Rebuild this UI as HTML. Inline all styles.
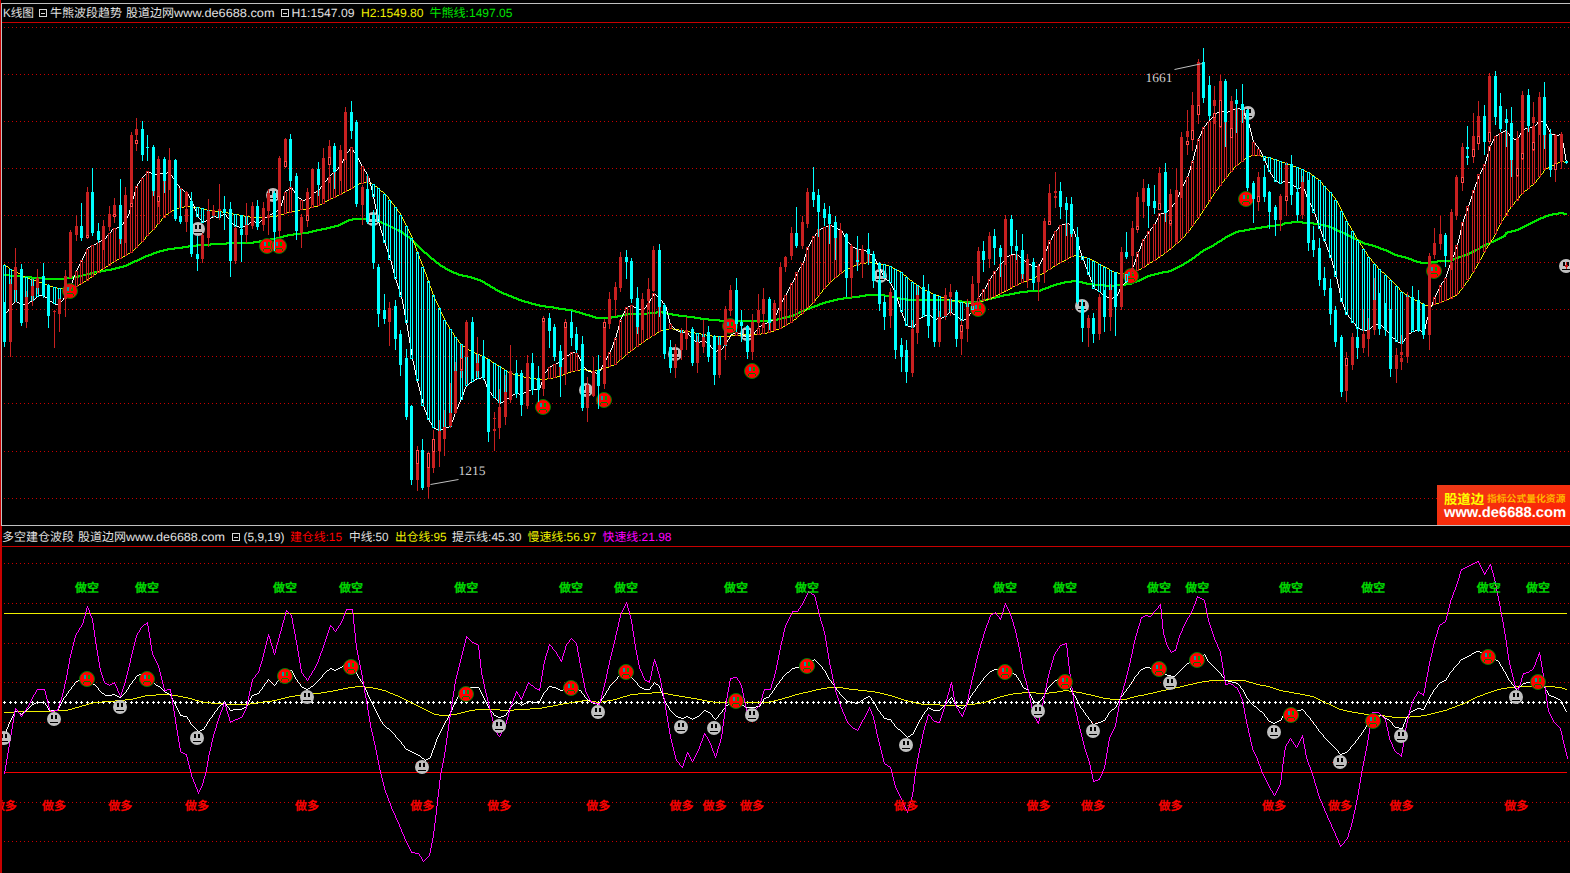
<!DOCTYPE html>
<html lang="zh"><head><meta charset="utf-8"><title>K线图 牛熊波段趋势</title>
<style>html,body{margin:0;padding:0;background:#000;overflow:hidden}body{width:1570px;height:873px;position:relative}
svg text{shape-rendering:auto;text-rendering:geometricPrecision}</style></head><body>
<svg width="1570" height="873" viewBox="0 0 1570 873" style="position:absolute;left:0;top:0" shape-rendering="crispEdges">
<defs><linearGradient id="bg" x1="0" y1="0" x2="1" y2="1"><stop offset="0" stop-color="#ee3a18"/><stop offset="1" stop-color="#ff2000"/></linearGradient></defs>
<rect width="1570" height="873" fill="#000"/>
<rect x="0" y="0" width="1" height="873" fill="#c80000"/>
<rect x="1" y="526" width="1" height="347" fill="#c80000"/>
<rect x="1" y="3" width="1569" height="1" fill="#c0c0c0"/>
<rect x="1" y="3" width="1" height="523" fill="#c0c0c0"/>
<rect x="1" y="525" width="1569" height="1" fill="#c0c0c0"/>
<rect x="2" y="22" width="1568" height="1" fill="#c80000"/>
<rect x="2" y="546" width="1568" height="1" fill="#c80000"/>
<line x1="4" y1="27.5" x2="1570" y2="27.5" stroke="#c80000" stroke-width="1" stroke-dasharray="1 3"/>
<line x1="4" y1="74.5" x2="1570" y2="74.5" stroke="#c80000" stroke-width="1" stroke-dasharray="1 3"/>
<line x1="4" y1="121.5" x2="1570" y2="121.5" stroke="#c80000" stroke-width="1" stroke-dasharray="1 3"/>
<line x1="4" y1="168.5" x2="1570" y2="168.5" stroke="#c80000" stroke-width="1" stroke-dasharray="1 3"/>
<line x1="4" y1="215.5" x2="1570" y2="215.5" stroke="#c80000" stroke-width="1" stroke-dasharray="1 3"/>
<line x1="4" y1="262.5" x2="1570" y2="262.5" stroke="#c80000" stroke-width="1" stroke-dasharray="1 3"/>
<line x1="4" y1="309.5" x2="1570" y2="309.5" stroke="#c80000" stroke-width="1" stroke-dasharray="1 3"/>
<line x1="4" y1="356.5" x2="1570" y2="356.5" stroke="#c80000" stroke-width="1" stroke-dasharray="1 3"/>
<line x1="4" y1="403.5" x2="1570" y2="403.5" stroke="#c80000" stroke-width="1" stroke-dasharray="1 3"/>
<line x1="4" y1="451.5" x2="1570" y2="451.5" stroke="#c80000" stroke-width="1" stroke-dasharray="1 3"/>
<line x1="4" y1="498.5" x2="1570" y2="498.5" stroke="#c80000" stroke-width="1" stroke-dasharray="1 3"/>
<line x1="4" y1="563.5" x2="1570" y2="563.5" stroke="#c80000" stroke-width="1" stroke-dasharray="1 3"/>
<line x1="4" y1="603.5" x2="1570" y2="603.5" stroke="#c80000" stroke-width="1" stroke-dasharray="1 3"/>
<line x1="4" y1="643.5" x2="1570" y2="643.5" stroke="#c80000" stroke-width="1" stroke-dasharray="1 3"/>
<line x1="4" y1="682.5" x2="1570" y2="682.5" stroke="#c80000" stroke-width="1" stroke-dasharray="1 3"/>
<line x1="4" y1="722.5" x2="1570" y2="722.5" stroke="#c80000" stroke-width="1" stroke-dasharray="1 3"/>
<line x1="4" y1="762.5" x2="1570" y2="762.5" stroke="#c80000" stroke-width="1" stroke-dasharray="1 3"/>
<line x1="4" y1="802.5" x2="1570" y2="802.5" stroke="#c80000" stroke-width="1" stroke-dasharray="1 3"/>
<line x1="4" y1="841.5" x2="1570" y2="841.5" stroke="#c80000" stroke-width="1" stroke-dasharray="1 3"/>
<clipPath id="cl"><rect x="2" y="0" width="1568" height="873"/></clipPath><g clip-path="url(#cl)">
<path d="M3.5,274v2m1,-2v2m1,-2v2m1,-2v2m1,-2v2m1,-2v2m1,-2v3m1,-2v2m1,-2v2m1,-2v2m1,-2v2m1,-2v2m1,-2v2m1,-2v2m1,-2v2m1,-2v2m1,-2v2m1,-2v3m1,-2v2m1,-2v2m1,-2v2m1,-2v2m1,-2v2m1,-2v2m1,-2v2m1,-2v2m1,-2v2m1,-2v2m1,-2v3m1,-2v2m1,-2v2m1,-2v2m1,-2v2m1,-2v2m1,-2v2m1,-2v2m1,-2v2m1,-2v2m1,-2v2m1,-2v3m1,-2v2m1,-2v2m1,-2v2m1,-2v2m1,-2v2m1,-2v2m1,-2v2m1,-2v2m1,-2v2m1,-2v2m1,-2v2m1,-2v2m1,-2v2m1,-2v2m1,-2v2m1,-2v2m1,-2v2m1,-2v2m1,-2v2m1,-2v2m1,-2v2m1,-3v3m1,-3v2m1,-2v2m1,-2v2m1,-2v2m1,-2v2m1,-2v2m1,-2v2m1,-3v3m1,-3v2m1,-2v2m1,-2v2m1,-2v2m1,-2v2m1,-3v3m1,-3v2m1,-2v2m1,-2v2m1,-3v3m1,-3v2m1,-2v2m1,-2v2m1,-3v3m1,-3v2m1,-2v2m1,-2v2m1,-3v3m1,-3v2m1,-2v2m1,-2v2m1,-3v3m1,-3v2m1,-2v2m1,-2v2m1,-2v2m1,-2v2m1,-3v3m1,-3v2m1,-2v2m1,-2v2m1,-2v2m1,-3v3m1,-3v2m1,-2v2m1,-2v2m1,-2v2m1,-2v2m1,-3v3m1,-3v2m1,-2v2m1,-2v2m1,-3v3m1,-3v2m1,-2v2m1,-2v2m1,-3v3m1,-3v2m1,-2v2m1,-2v2m1,-3v3m1,-3v2m1,-2v2m1,-3v3m1,-3v2m1,-3v3m1,-3v2m1,-3v3m1,-3v2m1,-3v3m1,-3v2m1,-3v3m1,-3v2m1,-2v2m1,-3v3m1,-3v2m1,-3v3m1,-3v2m1,-3v3m1,-3v2m1,-3v3m1,-3v2m1,-3v3m1,-3v2m1,-2v2m1,-3v3m1,-3v2m1,-2v2m1,-3v3m1,-3v2m1,-3v3m1,-3v2m1,-2v2m1,-3v3m1,-3v2m1,-2v2m1,-3v3m1,-3v2m1,-2v2m1,-2v2m1,-3v3m1,-3v2m1,-2v2m1,-2v2m1,-3v3m1,-3v2m1,-2v2m1,-2v2m1,-2v2m1,-2v2m1,-2v2m1,-3v3m1,-3v2m1,-2v2m1,-2v2m1,-2v2m1,-2v2m1,-2v2m1,-2v2m1,-3v3m1,-3v2m1,-2v2m1,-2v2m1,-2v2m1,-2v2m1,-3v3m1,-3v2m1,-2v2m1,-2v2m1,-2v2m1,-2v2m1,-2v2m1,-2v2m1,-3v3m1,-3v2m1,-2v2m1,-2v2m1,-2v2m1,-2v2m1,-2v2m1,-2v2m1,-2v2m1,-2v2m1,-2v2m1,-2v2m1,-2v2m1,-2v2m1,-3v3m1,-3v2m1,-2v2m1,-2v2m1,-2v2m1,-2v2m1,-2v2m1,-2v2m1,-2v2m1,-2v2m1,-2v2m1,-2v2m1,-2v2m1,-2v2m1,-2v2m1,-2v2m1,-3v3m1,-3v2m1,-2v2m1,-2v2m1,-2v2m1,-2v2m1,-2v2m1,-2v2m1,-2v2m1,-2v2m1,-2v2m1,-2v2m1,-2v2m1,-2v2m1,-2v2m1,-2v2m1,-2v2m1,-2v2m1,-2v2m1,-2v2m1,-2v2m1,-2v2m1,-2v2m1,-2v2m1,-2v2m1,-2v2m1,-2v2m1,-3v3m1,-3v2m1,-2v2m1,-2v2m1,-2v2m1,-2v2m1,-3v3m1,-3v2m1,-2v2m1,-2v2m1,-2v2m1,-2v2m1,-3v3m1,-3v2m1,-2v2m1,-2v2m1,-2v2m1,-3v3m1,-3v2m1,-2v2m1,-2v2m1,-2v2m1,-2v2m1,-3v3m1,-3v2m1,-2v2m1,-2v2m1,-3v3m1,-3v2m1,-2v2m1,-3v3m1,-3v2m1,-2v2m1,-2v2m1,-3v3m1,-3v2m1,-2v2m1,-2v2m1,-2v2m1,-2v2m1,-3v3m1,-3v2m1,-2v2m1,-2v2m1,-2v2m1,-2v2m1,-2v2m1,-2v2m1,-3v3m1,-3v2m1,-2v2m1,-2v2m1,-2v2m1,-2v2m1,-2v2m1,-3v3m1,-3v2m1,-2v2m1,-2v2m1,-3v3m1,-3v2m1,-2v2m1,-2v2m1,-3v3m1,-3v2m1,-2v2m1,-2v2m1,-2v2m1,-3v3m1,-3v2m1,-2v2m1,-2v2m1,-2v2m1,-3v3m1,-3v2m1,-2v2m1,-2v2m1,-3v3m1,-3v2m1,-2v2m1,-2v2m1,-3v3m1,-3v2m1,-2v2m1,-2v2m1,-3v3m1,-3v2m1,-3v3m1,-3v2m1,-3v3m1,-3v2m1,-3v3m1,-3v2m1,-3v3m1,-3v2m1,-3v3m1,-3v2m1,-2v2m1,-2v2m1,-3v3m1,-3v2m1,-2v2m1,-2v2m1,-2v2m1,-2v2m1,-2v2m1,-2v2m1,-2v2m1,-2v2m1,-2v2m1,-2v2m1,-2v2m1,-2v2m1,-2v2m1,-2v2m1,-2v2m1,-2v3m1,-2v2m1,-2v2m1,-2v2m1,-2v3m1,-2v2m1,-2v2m1,-2v2m1,-2v3m1,-2v2m1,-2v2m1,-2v2m1,-2v3m1,-2v2m1,-2v3m1,-2v2m1,-2v2m1,-2v3m1,-2v2m1,-2v3m1,-2v2m1,-2v3m1,-2v2m1,-2v3m1,-2v2m1,-2v3m1,-2v2m1,-2v3m1,-2v2m1,-2v3m1,-2v2m1,-2v3m1,-2v2m1,-2v3m1,-2v3m1,-2v3m1,-2v2m1,-2v3m1,-2v3m1,-2v2m1,-2v3m1,-2v3m1,-2v3m1,-2v3m1,-2v3m1,-2v3m1,-2v3m1,-2v3m1,-2v3m1,-2v3m1,-2v3m1,-2v3m1,-2v3m1,-2v3m1,-2v3m1,-2v3m1,-2v2m1,-2v3m1,-2v3m1,-2v3m1,-2v3m1,-2v3m1,-2v3m1,-2v2m1,-2v3m1,-2v3m1,-2v3m1,-2v3m1,-2v2m1,-2v3m1,-2v3m1,-2v3m1,-2v2m1,-2v3m1,-2v2m1,-2v3m1,-2v3m1,-2v2m1,-2v3m1,-2v2m1,-2v3m1,-2v2m1,-2v3m1,-2v2m1,-2v3m1,-2v2m1,-2v2m1,-2v3m1,-2v2m1,-2v3m1,-2v2m1,-2v2m1,-2v2m1,-2v3m1,-2v2m1,-2v2m1,-2v2m1,-2v2m1,-2v3m1,-2v2m1,-2v2m1,-2v2m1,-2v3m1,-2v2m1,-2v2m1,-2v3m1,-2v2m1,-2v2m1,-2v3m1,-2v2m1,-2v2m1,-2v3m1,-2v2m1,-2v3m1,-2v2m1,-2v3m1,-2v3m1,-2v2m1,-2v3m1,-2v2m1,-2v3m1,-2v3m1,-2v2m1,-2v3m1,-2v2m1,-2v3m1,-2v3m1,-2v2m1,-2v3m1,-2v2m1,-2v3m1,-2v2m1,-2v3m1,-2v2m1,-2v3m1,-2v2m1,-2v2m1,-2v3m1,-2v2m1,-2v3m1,-2v2m1,-2v2m1,-2v3m1,-2v2m1,-2v3m1,-2v2m1,-2v2m1,-2v3m1,-2v2m1,-2v3m1,-2v2m1,-2v2m1,-2v3m1,-2v2m1,-2v2m1,-2v3m1,-2v2m1,-2v2m1,-2v2m1,-2v3m1,-2v2m1,-2v2m1,-2v3m1,-2v2m1,-2v2m1,-2v2m1,-2v3m1,-2v2m1,-2v2m1,-2v2m1,-2v3m1,-2v2m1,-2v2m1,-2v2m1,-2v2m1,-2v2m1,-2v3m1,-2v2m1,-2v2m1,-2v2m1,-2v2m1,-2v2m1,-2v2m1,-2v2m1,-2v3m1,-2v2m1,-2v2m1,-2v2m1,-2v2m1,-2v3m1,-2v2m1,-2v2m1,-2v2m1,-2v2m1,-2v2m1,-2v2m1,-2v3m1,-2v2m1,-2v2m1,-2v2m1,-2v2m1,-2v2m1,-2v2m1,-2v3m1,-2v2m1,-2v2m1,-2v3m1,-2v2m1,-2v2m1,-2v2m1,-2v3m1,-2v2m1,-2v2m1,-2v3m1,-2v2m1,-2v2m1,-2v3m1,-2v2m1,-2v2m1,-2v2m1,-2v3m1,-2v2m1,-2v2m1,-2v3m1,-2v2m1,-2v2m1,-2v3m1,-2v2m1,-2v2m1,-2v2m1,-2v2m1,-2v2m1,-2v2m1,-2v2m1,-2v2m1,-2v2m1,-2v2m1,-2v2m1,-2v2m1,-2v2m1,-2v2m1,-2v2m1,-3v3m1,-3v2m1,-2v2m1,-2v2m1,-2v2m1,-2v2m1,-3v3m1,-3v2m1,-2v2m1,-2v2m1,-2v2m1,-3v3m1,-3v2m1,-2v2m1,-2v2m1,-3v3m1,-3v2m1,-2v2m1,-2v2m1,-2v2m1,-2v2m1,-2v2m1,-2v2m1,-2v2m1,-2v2m1,-2v2m1,-2v2m1,-2v2m1,-2v2m1,-2v2m1,-2v2m1,-2v2m1,-2v2m1,-2v2m1,-2v2m1,-2v2m1,-3v3m1,-3v2m1,-2v2m1,-2v2m1,-2v2m1,-2v2m1,-2v2m1,-2v2m1,-2v2m1,-3v3m1,-3v2m1,-2v2m1,-2v2m1,-2v2m1,-2v2m1,-2v3m1,-2v2m1,-2v2m1,-2v2m1,-2v2m1,-2v3m1,-2v2m1,-2v2m1,-2v2m1,-2v2m1,-2v3m1,-2v2m1,-2v2m1,-2v2m1,-2v2m1,-2v2m1,-2v3m1,-2v2m1,-2v2m1,-2v2m1,-2v2m1,-2v2m1,-2v2m1,-2v2m1,-2v3m1,-2v2m1,-2v2m1,-2v2m1,-2v2m1,-2v2m1,-2v2m1,-2v2m1,-2v3m1,-2v2m1,-2v2m1,-2v2m1,-2v2m1,-2v2m1,-2v3m1,-2v2m1,-2v2m1,-2v2m1,-2v2m1,-2v2m1,-2v2m1,-2v2m1,-2v3m1,-2v2m1,-2v2m1,-2v2m1,-2v2m1,-2v2m1,-2v2m1,-2v2m1,-2v2m1,-2v2m1,-2v2m1,-2v3m1,-2v2m1,-2v2m1,-2v2m1,-2v2m1,-2v2m1,-2v2m1,-2v2m1,-2v2m1,-2v2m1,-2v2m1,-2v2m1,-2v2m1,-2v2m1,-2v2m1,-2v2m1,-2v2m1,-2v2m1,-2v2m1,-2v2m1,-2v2m1,-2v2m1,-2v2m1,-2v2m1,-2v2m1,-2v2m1,-2v2m1,-2v2m1,-2v2m1,-2v2m1,-2v2m1,-2v2m1,-2v2m1,-2v2m1,-2v2m1,-2v2m1,-2v2m1,-2v2m1,-2v2m1,-2v2m1,-2v2m1,-2v2m1,-2v2m1,-2v2m1,-2v2m1,-2v2m1,-2v2m1,-2v2m1,-2v2m1,-2v2m1,-2v2m1,-2v2m1,-3v3m1,-3v2m1,-2v2m1,-2v2m1,-2v2m1,-2v2m1,-3v3m1,-3v2m1,-2v2m1,-2v2m1,-3v3m1,-3v2m1,-2v2m1,-2v2m1,-3v3m1,-3v2m1,-2v2m1,-2v2m1,-3v3m1,-3v2m1,-2v2m1,-2v2m1,-3v3m1,-3v2m1,-3v3m1,-3v2m1,-3v3m1,-3v2m1,-3v3m1,-3v2m1,-3v3m1,-3v2m1,-2v2m1,-3v3m1,-3v2m1,-3v3m1,-3v2m1,-2v2m1,-3v3m1,-3v2m1,-3v3m1,-3v2m1,-2v2m1,-3v3m1,-3v2m1,-2v2m1,-3v3m1,-3v2m1,-3v3m1,-3v2m1,-2v2m1,-3v3m1,-3v2m1,-2v2m1,-3v3m1,-3v2m1,-2v2m1,-2v2m1,-3v3m1,-3v2m1,-2v2m1,-2v2m1,-3v3m1,-3v2m1,-2v2m1,-2v2m1,-3v3m1,-3v2m1,-2v2m1,-2v2m1,-2v2m1,-2v2m1,-3v3m1,-3v2m1,-2v2m1,-2v2m1,-2v2m1,-2v2m1,-2v2m1,-2v2m1,-3v3m1,-3v2m1,-2v2m1,-2v2m1,-2v2m1,-2v2m1,-2v2m1,-2v2m1,-3v3m1,-3v2m1,-2v2m1,-2v2m1,-2v2m1,-2v2m1,-3v3m1,-3v2m1,-2v2m1,-2v2m1,-2v2m1,-2v2m1,-2v2m1,-2v2m1,-2v2m1,-2v2m1,-2v2m1,-2v2m1,-2v2m1,-2v2m1,-2v2m1,-2v2m1,-2v2m1,-2v2m1,-2v2m1,-2v3m1,-2v2m1,-2v2m1,-2v2m1,-2v2m1,-2v2m1,-2v2m1,-2v3m1,-2v2m1,-2v2m1,-2v2m1,-2v3m1,-2v2m1,-2v2m1,-2v2m1,-2v3m1,-2v2m1,-2v2m1,-2v2m1,-2v2m1,-2v2m1,-2v2m1,-2v3m1,-2v2m1,-2v2m1,-2v2m1,-2v2m1,-2v2m1,-2v2m1,-2v2m1,-2v2m1,-2v2m1,-2v2m1,-2v2m1,-2v2m1,-2v2m1,-2v2m1,-2v2m1,-2v2m1,-2v2m1,-2v2m1,-2v2m1,-2v2m1,-2v2m1,-2v2m1,-2v2m1,-2v2m1,-2v2m1,-2v2m1,-2v2m1,-2v2m1,-2v2m1,-2v2m1,-2v2m1,-2v2m1,-2v2m1,-2v2m1,-2v2m1,-2v2m1,-2v2m1,-2v2m1,-2v2m1,-2v2m1,-2v2m1,-2v2m1,-2v2m1,-2v3m1,-2v2m1,-2v2m1,-2v2m1,-2v2m1,-2v2m1,-2v2m1,-2v2m1,-2v2m1,-2v2m1,-2v2m1,-2v3m1,-2v2m1,-2v2m1,-2v2m1,-2v2m1,-2v2m1,-2v2m1,-2v2m1,-2v2m1,-2v2m1,-2v2m1,-2v2m1,-2v2m1,-2v2m1,-2v2m1,-2v2m1,-2v2m1,-2v2m1,-3v3m1,-3v2m1,-2v2m1,-2v2m1,-3v3m1,-3v2m1,-2v2m1,-2v2m1,-3v3m1,-3v2m1,-2v2m1,-2v2m1,-3v3m1,-3v2m1,-2v2m1,-2v2m1,-3v3m1,-3v2m1,-2v2m1,-2v2m1,-3v3m1,-3v2m1,-2v2m1,-2v2m1,-3v3m1,-3v2m1,-2v2m1,-2v2m1,-2v2m1,-2v2m1,-3v3m1,-3v2m1,-2v2m1,-2v2m1,-2v2m1,-3v3m1,-3v2m1,-2v2m1,-2v2m1,-2v2m1,-3v3m1,-3v2m1,-2v2m1,-2v2m1,-2v2m1,-2v2m1,-2v2m1,-2v2m1,-3v3m1,-3v2m1,-2v2m1,-2v2m1,-2v2m1,-2v2m1,-2v2m1,-2v2m1,-2v2m1,-2v2m1,-2v2m1,-2v2m1,-2v2m1,-3v3m1,-3v2m1,-3v3m1,-3v2m1,-2v2m1,-3v3m1,-3v2m1,-2v2m1,-3v3m1,-3v2m1,-3v3m1,-3v2m1,-2v2m1,-3v3m1,-3v2m1,-2v2m1,-3v3m1,-3v2m1,-2v2m1,-2v2m1,-3v3m1,-3v2m1,-2v2m1,-2v2m1,-3v3m1,-3v2m1,-2v2m1,-2v2m1,-2v2m1,-2v2m1,-2v2m1,-3v3m1,-3v2m1,-2v2m1,-2v2m1,-2v2m1,-2v2m1,-2v2m1,-2v3m1,-2v2m1,-2v2m1,-2v2m1,-2v3m1,-2v2m1,-2v2m1,-2v2m1,-2v3m1,-2v2m1,-2v2m1,-2v2m1,-2v2m1,-2v2m1,-2v2m1,-2v3m1,-2v2m1,-2v2m1,-2v2m1,-2v2m1,-2v2m1,-2v2m1,-2v2m1,-2v2m1,-2v2m1,-2v2m1,-2v3m1,-2v2m1,-2v2m1,-2v2m1,-2v2m1,-2v2m1,-2v2m1,-2v2m1,-2v2m1,-2v2m1,-2v2m1,-3v3m1,-3v2m1,-2v2m1,-2v2m1,-2v2m1,-2v2m1,-2v2m1,-2v2m1,-2v2m1,-2v2m1,-3v3m1,-3v2m1,-2v2m1,-2v2m1,-2v2m1,-2v2m1,-3v3m1,-3v2m1,-3v3m1,-3v2m1,-2v2m1,-3v3m1,-3v2m1,-2v2m1,-3v3m1,-3v2m1,-3v3m1,-3v2m1,-3v3m1,-3v2m1,-3v3m1,-3v2m1,-3v3m1,-3v2m1,-2v2m1,-3v3m1,-3v2m1,-2v2m1,-2v2m1,-3v3m1,-3v2m1,-2v2m1,-2v2m1,-3v3m1,-3v2m1,-2v2m1,-2v2m1,-3v3m1,-3v2m1,-2v2m1,-2v2m1,-2v2m1,-2v2m1,-3v3m1,-3v2m1,-2v2m1,-3v3m1,-3v2m1,-3v3m1,-3v2m1,-3v3m1,-3v2m1,-3v3m1,-3v2m1,-3v3m1,-3v2m1,-3v3m1,-3v2m1,-3v3m1,-4v3m1,-3v2m1,-3v3m1,-3v2m1,-3v3m1,-4v3m1,-3v2m1,-3v3m1,-4v3m1,-3v2m1,-3v3m1,-4v3m1,-4v3m1,-3v2m1,-3v3m1,-4v3m1,-4v3m1,-3v2m1,-3v3m1,-4v3m1,-3v2m1,-3v3m1,-3v2m1,-3v3m1,-3v2m1,-3v3m1,-3v2m1,-3v3m1,-3v2m1,-3v3m1,-4v3m1,-3v2m1,-3v3m1,-4v3m1,-3v2m1,-3v3m1,-3v2m1,-3v3m1,-4v3m1,-3v2m1,-3v3m1,-4v3m1,-3v2m1,-3v3m1,-3v2m1,-3v3m1,-3v2m1,-3v3m1,-3v2m1,-3v3m1,-3v2m1,-3v3m1,-3v2m1,-2v2m1,-3v3m1,-3v2m1,-2v2m1,-2v2m1,-2v2m1,-2v2m1,-3v3m1,-3v2m1,-2v2m1,-2v2m1,-2v2m1,-3v3m1,-3v2m1,-2v2m1,-2v2m1,-2v2m1,-2v2m1,-3v3m1,-3v2m1,-2v2m1,-2v2m1,-2v2m1,-2v2m1,-3v3m1,-3v2m1,-2v2m1,-2v2m1,-2v2m1,-2v2m1,-3v3m1,-3v2m1,-2v2m1,-2v2m1,-2v2m1,-2v2m1,-2v2m1,-2v2m1,-3v3m1,-3v2m1,-2v2m1,-2v2m1,-2v2m1,-2v2m1,-2v2m1,-3v3m1,-3v2m1,-3v3m1,-3v2m1,-2v2m1,-2v2m1,-2v2m1,-2v2m1,-2v2m1,-3v3m1,-3v2m1,-2v2m1,-2v2m1,-2v2m1,-2v2m1,-2v2m1,-2v2m1,-2v2m1,-2v2m1,-2v2m1,-2v3m1,-2v2m1,-2v2m1,-2v2m1,-2v2m1,-2v2m1,-2v2m1,-2v2m1,-2v2m1,-2v2m1,-2v2m1,-2v3m1,-2v2m1,-2v2m1,-2v2m1,-2v2m1,-2v2m1,-2v2m1,-2v3m1,-2v2m1,-2v2m1,-2v2m1,-2v3m1,-2v2m1,-2v2m1,-2v2m1,-2v3m1,-2v2m1,-2v2m1,-2v3m1,-2v2m1,-2v3m1,-2v2m1,-2v3m1,-2v2m1,-2v3m1,-2v2m1,-2v3m1,-2v2m1,-2v2m1,-2v3m1,-2v2m1,-2v3m1,-2v2m1,-2v3m1,-2v2m1,-2v3m1,-2v2m1,-2v3m1,-2v2m1,-2v3m1,-2v2m1,-2v3m1,-2v2m1,-2v3m1,-2v2m1,-2v3m1,-2v2m1,-2v3m1,-2v2m1,-2v3m1,-2v2m1,-2v3m1,-2v2m1,-2v2m1,-2v2m1,-2v3m1,-2v2m1,-2v2m1,-2v2m1,-2v3m1,-2v2m1,-2v2m1,-2v3m1,-2v2m1,-2v2m1,-2v3m1,-2v2m1,-2v3m1,-2v2m1,-2v2m1,-2v3m1,-2v2m1,-2v2m1,-2v3m1,-2v2m1,-2v3m1,-2v2m1,-2v3m1,-2v2m1,-2v3m1,-2v2m1,-2v3m1,-2v2m1,-2v2m1,-2v3m1,-2v2m1,-2v2m1,-2v2m1,-2v3m1,-2v2m1,-2v2m1,-2v2m1,-2v3m1,-2v2m1,-2v2m1,-2v3m1,-2v2m1,-2v2m1,-2v3m1,-2v2m1,-2v3m1,-2v2m1,-2v2m1,-2v3m1,-2v2m1,-2v2m1,-2v2m1,-2v3m1,-2v2m1,-2v2m1,-2v2m1,-2v2m1,-2v2m1,-2v2m1,-2v2m1,-2v2m1,-2v2m1,-2v2m1,-3v3m1,-3v2m1,-2v2m1,-2v2m1,-2v2m1,-2v2m1,-3v3m1,-3v2m1,-2v2m1,-2v2m1,-2v2m1,-2v2m1,-2v2m1,-2v2m1,-2v2m1,-2v2m1,-2v2m1,-2v2m1,-2v2m1,-2v2m1,-3v3m1,-3v2m1,-3v3m1,-3v2m1,-3v3m1,-3v2m1,-2v2m1,-3v3m1,-3v2m1,-2v2m1,-3v3m1,-3v2m1,-2v2m1,-3v3m1,-3v2m1,-2v2m1,-3v3m1,-3v2m1,-3v3m1,-3v2m1,-3v3m1,-3v2m1,-3v3m1,-3v2m1,-3v3m1,-3v2m1,-3v3m1,-3v2m1,-3v3m1,-4v3m1,-3v2m1,-3v3m1,-3v2m1,-3v3m1,-3v2m1,-3v3m1,-3v2m1,-3v3m1,-3v2m1,-3v3m1,-3v2m1,-2v2m1,-3v3m1,-3v2m1,-3v3m1,-3v2m1,-3v3m1,-3v2m1,-3v3m1,-3v2m1,-3v3m1,-3v2m1,-3v3m1,-4v3m1,-5v5m1,-5v3m1,-4v3m1,-3v2m1,-2v2m1,-2v2m1,-3v3m1,-3v2m1,-2v2m1,-2v2m1,-3v3m1,-3v2m1,-2v2m1,-3v3m1,-3v2m1,-3v3m1,-3v2m1,-3v3m1,-3v2m1,-3v3m1,-3v2m1,-3v3m1,-3v2m1,-3v3m1,-3v2m1,-3v3m1,-3v2m1,-3v3m1,-3v2m1,-3v3m1,-3v2m1,-3v3m1,-3v2m1,-3v3m1,-3v2m1,-3v3m1,-3v2m1,-2v2m1,-3v3m1,-3v2m1,-3v3m1,-3v2m1,-2v2m1,-3v3m1,-3v2m1,-2v2m1,-2v2m1,-3v3m1,-3v2m1,-2v2m1,-2v2m1,-2v2m1,-2v2m1,-3v3m1,-3v2m1,-2v2m1,-2v2m1,-2v2m1,-2v3m1,-2v2m1,-2v2m1,-2v2" fill="none" stroke="#00e600" stroke-width="1"/>
<g shape-rendering="auto"><circle cx="198" cy="229" r="7" fill="#c0c0c0"/><rect x="195" y="225" width="2" height="4" fill="#000"/><rect x="199" y="225" width="2" height="4" fill="#000"/><rect x="194" y="232" width="8" height="1" fill="#000"/></g>
<g shape-rendering="auto"><circle cx="273" cy="195" r="7" fill="#c0c0c0"/><rect x="270" y="191" width="2" height="4" fill="#000"/><rect x="274" y="191" width="2" height="4" fill="#000"/><rect x="269" y="198" width="8" height="1" fill="#000"/></g>
<g shape-rendering="auto"><circle cx="373" cy="219" r="7" fill="#c0c0c0"/><rect x="370" y="215" width="2" height="4" fill="#000"/><rect x="374" y="215" width="2" height="4" fill="#000"/><rect x="369" y="222" width="8" height="1" fill="#000"/></g>
<g shape-rendering="auto"><circle cx="586" cy="390" r="7" fill="#c0c0c0"/><rect x="583" y="386" width="2" height="4" fill="#000"/><rect x="587" y="386" width="2" height="4" fill="#000"/><rect x="582" y="393" width="8" height="1" fill="#000"/></g>
<g shape-rendering="auto"><circle cx="675" cy="354" r="7" fill="#c0c0c0"/><rect x="672" y="350" width="2" height="4" fill="#000"/><rect x="676" y="350" width="2" height="4" fill="#000"/><rect x="671" y="357" width="8" height="1" fill="#000"/></g>
<g shape-rendering="auto"><circle cx="747" cy="334" r="7" fill="#c0c0c0"/><rect x="744" y="330" width="2" height="4" fill="#000"/><rect x="748" y="330" width="2" height="4" fill="#000"/><rect x="743" y="337" width="8" height="1" fill="#000"/></g>
<g shape-rendering="auto"><circle cx="880" cy="276" r="7" fill="#c0c0c0"/><rect x="877" y="272" width="2" height="4" fill="#000"/><rect x="881" y="272" width="2" height="4" fill="#000"/><rect x="876" y="279" width="8" height="1" fill="#000"/></g>
<g shape-rendering="auto"><circle cx="1082" cy="306" r="7" fill="#c0c0c0"/><rect x="1079" y="302" width="2" height="4" fill="#000"/><rect x="1083" y="302" width="2" height="4" fill="#000"/><rect x="1078" y="309" width="8" height="1" fill="#000"/></g>
<g shape-rendering="auto"><circle cx="1248" cy="113" r="7" fill="#c0c0c0"/><rect x="1245" y="109" width="2" height="4" fill="#000"/><rect x="1249" y="109" width="2" height="4" fill="#000"/><rect x="1244" y="116" width="8" height="1" fill="#000"/></g>
<g shape-rendering="auto"><circle cx="1566" cy="266" r="7" fill="#c0c0c0"/><rect x="1563" y="262" width="2" height="4" fill="#000"/><rect x="1567" y="262" width="2" height="4" fill="#000"/><rect x="1562" y="269" width="8" height="1" fill="#000"/></g>
<path d="M4.5,264v1m1,0v1m1,0v1m1,-1v1m1,0v1m1,0v1m1,0v1m1,-1v1m1,0v1m1,-1v1m1,0v1m1,-1v1m1,0v1m1,-1v1m1,0v1m1,-1v1m1,0v1m1,0v1m1,-1v1m1,0v1m1,-1v1m1,0v1m1,-1v1m1,-1v1m1,0v1m1,-1v1m1,0v1m1,-1v1m1,-1v1m1,0v1m1,-1v1m1,-1v1m1,0v1m1,-1v1m1,-1v1m1,0v1m1,-1v1m1,-1v1m1,0v1m1,-1v1m1,-1v1m1,0v1m1,-1v1m1,0v1m1,-1v1m1,-1v1m1,0v1m1,-1v1m1,-1v1m1,0v1m1,-1v1m1,-1v1m1,-1v1m1,0v1m1,-1v1m1,-1v1m1,-1v1m1,-1v1m1,-1v1m1,-1v1m1,-1v1m1,-1v1m1,-1v1m1,-1v1m1,-1v1m1,-1v1m1,-1v1m1,-1v1m1,-2v1m1,-1v1m1,-1v1m1,-2v1m1,-1v1m1,-2v1m1,-1v1m1,-2v1m1,-1v1m1,-2v1m1,-2v1m1,-1v1m1,-2v1m1,-1v1m1,-2v1m1,-2v1m1,-1v1m1,-2v1m1,-2v1m1,-1v1m1,-2v1m1,-2v1m1,-2v1m1,-1v1m1,-2v1m1,-2v1m1,-2v1m1,-1v1m1,-2v1m1,-2v1m1,-1v1m1,-2v1m1,-2v1m1,-1v1m1,-2v1m1,-1v1m1,-2v1m1,-2v1m1,-1v1m1,-2v1m1,-2v1m1,-1v1m1,-2v1m1,-2v1m1,-1v1m1,-2v1m1,-1v1m1,-2v1m1,-1v1m1,-2v1m1,-1v1m1,-2v1m1,-1v1m1,-2v1m1,-2v1m1,-1v1m1,-2v1m1,-1v1m1,-2v1m1,-1v1m1,-2v1m1,-2v1m1,-2v1m1,-2v1m1,-2v1m1,-2v1m1,-2v1m1,-2v1m1,-2v1m1,-2v1m1,-2v1m1,-2v1m1,-2v1m1,-3v2m1,-3v1m1,-2v1m1,-2v1m1,-2v1m1,-2v1m1,-2v1m1,-2v1m1,-2v1m1,-2v1m1,-2v1m1,-3v2m1,-3v1m1,-2v1m1,-2v1m1,-2v1m1,-3v2m1,-3v1m1,-2v1m1,-2v1m1,-2v1m1,-2v1m1,-1v1m1,-2v1m1,-2v1m1,-2v1m1,-1v1m1,-2v1m1,-1v1m1,-2v1m1,-1v1m1,-2v1m1,-1v1m1,-1v1m1,-2v1m1,-1v1m1,-1v1m1,-1v1m1,-1v1m1,-2v1m1,-1v1m1,-1v1m1,-1v1m1,-1v1m1,-1v1m1,-1v1m1,-1v1m1,-1v1m1,0v1m1,-1v1m1,-1v1m1,-1v1m1,-1v1m1,-1v1m1,-1v1m1,0v1m1,-1v1m1,-1v1m1,0v1m1,-1v1m1,-1v1m1,-1v1m1,0v1m1,-1v1m1,-1v1m1,-1v1m1,-1v1m1,-1v1m1,-1v1m1,0v1m1,-1v1m1,-1v1m1,-1v1m1,-1v1m1,-1v1m1,-1v1m1,-1v1m1,0v1m1,-1v1m1,-1v1m1,-1v1m1,-1v1m1,-1v1m1,0v1m1,-1v1m1,-1v1m1,-1v1m1,-1v1m1,0v1m1,-1v1m1,-1v1m1,-1v1m1,-1v1m1,-1v1m1,0v1m1,-1v1m1,-1v1m1,-1v1m1,-1v1m1,0v1m1,-1v1m1,-1v1m1,-1v1m1,-1v1m1,-1v1m1,0v1m1,-1v1m1,-1v1m1,-1v1m1,-1v1m1,-1v1m1,-1v1m1,-1v1m1,-1v1m1,-1v1m1,-1v1m1,-1v1m1,-1v1m1,-1v1m1,-1v1m1,-1v1m1,-1v1m1,-1v1m1,-1v1m1,-1v1m1,-2v1m1,-1v1m1,-1v1m1,-1v1m1,-1v1m1,-1v1m1,-1v1m1,-2v1m1,-1v1m1,-1v1m1,-2v1m1,-1v1m1,-1v1m1,-1v1m1,-2v1m1,-1v1m1,-1v1m1,-2v1m1,-1v1m1,-1v1m1,-1v1m1,-2v1m1,-1v1m1,-1v1m1,-1v1m1,-2v1m1,-1v1m1,-1v1m1,-1v1m1,-1v1m1,-2v1m1,-1v1m1,-1v1m1,-1v1m1,-1v1m1,-1v1m1,-2v1m1,-1v1m1,-1v1m1,-1v1m1,-2v1m1,-1v1m1,-1v1m1,-1v1m1,-2v1m1,-1v1m1,-1v1m1,-1v1m1,-2v1m1,-1v1m1,-2v1m1,-1v1m1,-2v1m1,-1v1m1,-2v1m1,-2v1m1,-1v1m1,-2v1m1,-1v1m1,-2v1m1,-1v1m1,-2v1m1,-1v1m1,-2v1m1,-1v1m1,-2v1m1,-1v1m1,-2v1m1,-1v1m1,-2v1m1,-1v1m1,-2v1m1,-1v1m1,-2v1m1,-1v1m1,-2v1m1,-1v1m1,-2v1m1,-1v1m1,-2v1m1,-1v1m1,-2v1m1,-2v1m1,-1v1m1,-2v1m1,-2v1m1,-1v1m1,-2v1m1,-1v1m1,-2v1m1,-1v1m1,-1v1m1,-1v1m1,-2v1m1,-1v1m1,-1v1m1,-1v1m1,-1v1m1,-1v1m1,0v1m1,-1v1m1,-1v1m1,0v1m1,-1v1m1,0v1m1,0v1m1,-1v1m1,0v1m1,0v1m1,0v1m1,0v1m1,0v1m1,-1v1m1,0v1m1,0v1m1,0v1m1,0v1m1,0v1m1,0v2m1,0v1m1,0v1m1,0v2m1,0v1m1,0v1m1,0v2m1,0v1m1,0v1m1,0v2m1,0v1m1,0v1m1,0v2m1,0v2m1,0v2m1,0v2m1,0v2m1,0v2m1,0v2m1,0v2m1,0v2m1,0v2m1,0v2m1,0v2m1,0v3m1,0v3m1,0v2m1,0v3m1,0v3m1,0v3m1,0v2m1,0v3m1,0v2m1,0v3m1,0v2m1,0v3m1,0v3m1,0v2m1,0v3m1,0v3m1,0v3m1,0v3m1,0v2m1,0v3m1,0v3m1,0v3m1,0v2m1,0v2m1,0v2m1,0v2m1,0v2m1,0v3m1,0v2m1,0v2m1,0v2m1,0v2m1,0v2m1,0v2m1,0v2m1,0v1m1,0v2m1,0v2m1,0v1m1,0v2m1,0v1m1,0v2m1,0v2m1,0v1m1,0v1m1,0v1m1,0v2m1,0v1m1,0v1m1,0v1m1,0v1m1,0v1m1,-1v1m1,0v1m1,0v1m1,0v1m1,-1v1m1,0v1m1,-1v1m1,0v1m1,-1v1m1,0v1m1,-1v1m1,0v1m1,-1v1m1,0v1m1,-1v1m1,-1v1m1,0v1m1,-1v1m1,0v1m1,-1v1m1,0v1m1,-1v1m1,0v1m1,-1v1m1,0v1m1,0v1m1,-1v1m1,0v1m1,0v1m1,-1v1m1,0v1m1,0v1m1,-1v1m1,0v1m1,-1v1m1,0v1m1,-1v1m1,0v1m1,0v1m1,-1v1m1,0v1m1,0v1m1,0v1m1,-1v1m1,0v1m1,-1v1m1,0v1m1,-1v1m1,-1v1m1,0v1m1,-1v1m1,-1v1m1,-1v1m1,-1v1m1,0v1m1,-1v1m1,0v1m1,-1v1m1,-1v1m1,-1v1m1,0v1m1,-1v1m1,-1v1m1,-1v1m1,-1v1m1,-1v1m1,0v1m1,-1v1m1,-1v1m1,-1v1m1,-1v1m1,-1v1m1,0v1m1,-1v1m1,-1v1m1,-1v1m1,-1v1m1,-1v1m1,-1v1m1,-1v1m1,-1v1m1,-1v1m1,-1v1m1,-2v1m1,-1v1m1,-1v1m1,-1v1m1,-1v1m1,-1v1m1,-2v1m1,-1v1m1,-1v1m1,-1v1m1,-2v1m1,-1v1m1,-1v1m1,-2v1m1,-1v1m1,-1v1m1,-2v1m1,-1v1m1,-2v1m1,-1v1m1,-1v1m1,-2v1m1,-1v1m1,-1v1m1,-2v1m1,-1v1m1,-1v1m1,-1v1m1,-2v1m1,-1v1m1,-1v1m1,-1v1m1,-1v1m1,-2v1m1,-1v1m1,-1v1m1,-1v1m1,-1v1m1,-1v1m1,0v1m1,-1v1m1,-1v1m1,-1v1m1,-1v1m1,0v1m1,-1v1m1,-1v1m1,-1v1m1,-2v1m1,-1v1m1,-1v1m1,-1v1m1,-2v1m1,-1v1m1,-1v1m1,-2v1m1,-1v1m1,-1v1m1,-1v1m1,-2v1m1,-1v1m1,-1v1m1,-2v1m1,-1v1m1,-2v1m1,-1v1m1,-1v1m1,-2v1m1,-1v1m1,-2v1m1,-2v1m1,-2v1m1,-2v1m1,-2v1m1,-1v1m1,-2v1m1,-2v1m1,-2v1m1,-2v1m1,-2v1m1,-2v1m1,-2v1m1,-1v1m1,-2v1m1,-2v1m1,-2v1m1,-1v1m1,-2v1m1,-2v1m1,-2v1m1,-1v1m1,-2v1m1,-2v1m1,-1v1m1,-2v1m1,-2v1m1,-2v1m1,-1v1m1,-2v1m1,-2v1m1,-1v1m1,-2v1m1,-2v1m1,-1v1m1,-2v1m1,-2v1m1,-1v1m1,-2v1m1,-1v1m1,-2v1m1,-2v1m1,-1v1m1,-2v1m1,-1v1m1,-2v1m1,-1v1m1,-1v1m1,-1v1m1,-2v1m1,-1v1m1,-1v1m1,-1v1m1,-2v1m1,-1v1m1,-1v1m1,-1v1m1,0v1m1,-1v1m1,-1v1m1,-1v1m1,-1v1m1,-1v1m1,0v1m1,-1v1m1,-1v1m1,-1v1m1,-1v1m1,0v1m1,-1v1m1,-1v1m1,-1v1m1,-1v1m1,-1v1m1,0v1m1,-1v1m1,-1v1m1,-1v1m1,-1v1m1,0v1m1,-1v1m1,-1v1m1,-1v1m1,-1v1m1,-1v1m1,0v1m1,-1v1m1,-1v1m1,-1v1m1,-1v1m1,0v1m1,-1v1m1,-1v1m1,-1v1m1,-1v1m1,-1v1m1,0v1m1,-1v1m1,-1v1m1,-1v1m1,-1v1m1,-1v1m1,-1v1m1,-1v1m1,-1v1m1,-1v1m1,-1v1m1,-1v1m1,-1v1m1,-1v1m1,-1v1m1,-1v1m1,-1v1m1,-1v1m1,-1v1m1,-2v1m1,-1v1m1,-1v1m1,-1v1m1,-1v1m1,-1v1m1,-1v1m1,-1v1m1,-1v1m1,-1v1m1,-1v1m1,-2v1m1,-1v1m1,-1v1m1,-1v1m1,-1v1m1,-1v1m1,-1v1m1,-1v1m1,-1v1m1,-1v1m1,-1v1m1,-1v1m1,-1v1m1,-1v1m1,-1v1m1,-1v1m1,-1v1m1,-1v1m1,-1v1m1,-2v1m1,-1v1m1,-1v1m1,-1v1m1,-1v1m1,-1v1m1,-2v1m1,-1v1m1,-1v1m1,-1v1m1,-2v1m1,-1v1m1,-1v1m1,-2v1m1,-1v1m1,-2v1m1,-1v1m1,-1v1m1,-2v1m1,-1v1m1,-2v1m1,-1v1m1,-2v1m1,-1v1m1,-2v1m1,-2v1m1,-1v1m1,-2v1m1,-1v1m1,-2v1m1,-1v1m1,-2v1m1,-2v1m1,-2v1m1,-1v1m1,-2v1m1,-2v1m1,-2v1m1,-2v1m1,-2v1m1,-1v1m1,-2v1m1,-2v1m1,-2v1m1,-2v1m1,-2v1m1,-2v1m1,-2v1m1,-2v1m1,-2v1m1,-2v1m1,-2v1m1,-2v1m1,-2v1m1,-3v2m1,-3v1m1,-2v1m1,-2v1m1,-3v2m1,-3v1m1,-2v1m1,-3v2m1,-3v1m1,-2v1m1,-2v1m1,-2v1m1,-2v1m1,-2v1m1,-2v1m1,-2v1m1,-2v1m1,-2v1m1,-2v1m1,-2v1m1,-2v1m1,-2v1m1,-1v1m1,-2v1m1,-2v1m1,-2v1m1,-1v1m1,-2v1m1,-2v1m1,-2v1m1,-1v1m1,-2v1m1,-1v1m1,-2v1m1,-1v1m1,-2v1m1,-1v1m1,-2v1m1,-1v1m1,-2v1m1,-1v1m1,-2v1m1,-1v1m1,-1v1m1,-1v1m1,-2v1m1,-1v1m1,-1v1m1,-1v1m1,-1v1m1,-1v1m1,-2v1m1,-1v1m1,-1v1m1,-1v1m1,-1v1m1,-1v1m1,-1v1m1,-1v1m1,0v1m1,-1v1m1,-1v1m1,-1v1m1,-1v1m1,-1v1m1,-1v1m1,0v1m1,-1v1m1,-1v1m1,-1v1m1,0v1m1,-1v1m1,-1v1m1,-1v1m1,0v1m1,-1v1m1,0v1m1,-1v1m1,0v1m1,-1v1m1,0v1m1,-1v1m1,0v1m1,-1v1m1,0v1m1,-1v1m1,0v1m1,0v1m1,0v1m1,0v1m1,-1v1m1,0v1m1,0v1m1,0v1m1,0v1m1,0v1m1,-1v1m1,0v1m1,0v1m1,0v1m1,-1v1m1,0v1m1,0v1m1,0v1m1,-1v1m1,0v1m1,0v1m1,-1v1m1,0v1m1,-1v1m1,0v1m1,-1v1m1,0v1m1,-1v1m1,0v1m1,-1v1m1,0v1m1,-1v1m1,0v1m1,-1v1m1,-1v1m1,0v1m1,-1v1m1,-1v1m1,0v1m1,-1v1m1,0v1m1,-1v1m1,-1v1m1,0v1m1,-1v1m1,-1v1m1,0v1m1,-1v1m1,-1v1m1,-1v1m1,0v1m1,-1v1m1,-1v1m1,-1v1m1,0v1m1,-1v1m1,-1v1m1,-1v1m1,0v1m1,-1v1m1,-1v1m1,-1v1m1,-1v1m1,-1v1m1,0v1m1,-1v1m1,-1v1m1,-1v1m1,-1v1m1,-1v1m1,-1v1m1,-1v1m1,-2v1m1,-1v1m1,-1v1m1,-1v1m1,-1v1m1,-1v1m1,-1v1m1,-2v1m1,-1v1m1,-1v1m1,-2v1m1,-1v1m1,-1v1m1,-2v1m1,-1v1m1,-1v1m1,-2v1m1,-1v1m1,-1v1m1,-2v1m1,-1v1m1,-2v1m1,-1v1m1,-2v1m1,-1v1m1,-2v1m1,-1v1m1,-2v1m1,-1v1m1,-2v1m1,-1v1m1,-2v1m1,-1v1m1,-2v1m1,-1v1m1,-2v1m1,-1v1m1,-2v1m1,-1v1m1,-2v1m1,-2v1m1,-1v1m1,-2v1m1,-1v1m1,-2v1m1,-1v1m1,-2v1m1,-1v1m1,-2v1m1,-1v1m1,-1v1m1,-2v1m1,-1v1m1,-1v1m1,-2v1m1,-1v1m1,-2v1m1,-1v1m1,-1v1m1,-2v1m1,-1v1m1,-2v1m1,-1v1m1,-2v1m1,-1v1m1,-2v1m1,-1v1m1,-2v1m1,-1v1m1,-2v1m1,-1v1m1,-2v1m1,-2v1m1,-1v1m1,-2v1m1,-2v1m1,-1v1m1,-2v1m1,-1v1m1,-2v1m1,-2v1m1,-1v1m1,-2v1m1,-2v1m1,-1v1m1,-2v1m1,-1v1m1,-2v1m1,-1v1m1,-2v1m1,-1v1m1,-2v1m1,-1v1m1,-2v1m1,-2v1m1,-1v1m1,-2v1m1,-1v1m1,-2v1m1,-1v1m1,-1v1m1,-2v1m1,-1v1m1,-1v1m1,-1v1m1,-1v1m1,0v1m1,-1v1m1,-1v1m1,-1v1m1,-1v1m1,0v1m1,-1v1m1,-1v1m1,0v1m1,-1v1m1,-1v1m1,0v1m1,-1v1m1,0v1m1,-1v1m1,0v1m1,-1v1m1,0v1m1,-1v1m1,0v1m1,0v1m1,-1v1m1,0v1m1,-1v1m1,0v1m1,-1v1m1,0v1m1,-1v1m1,0v1m1,-1v1m1,0v1m1,0v1m1,-1v1m1,0v1m1,-1v1m1,0v1m1,-1v1m1,-1v1m1,-1v1m1,0v1m1,-1v1m1,-1v1m1,-1v1m1,-1v1m1,-1v1m1,0v1m1,-1v1m1,-1v1m1,-1v1m1,-1v1m1,-2v1m1,-1v1m1,-1v1m1,-1v1m1,-2v1m1,-1v1m1,-2v1m1,-1v1m1,-2v1m1,-1v1m1,-2v1m1,-1v1m1,-2v1m1,-2v1m1,-1v1m1,-2v1m1,-1v1m1,-2v1m1,-2v1m1,-1v1m1,-2v1m1,-2v1m1,-1v1m1,-2v1m1,-2v1m1,-1v1m1,-2v1m1,-1v1m1,-2v1m1,-2v1m1,-1v1m1,-2v1m1,-2v1m1,-1v1m1,-2v1m1,-2v1m1,-2v1m1,-1v1m1,-2v1m1,-2v1m1,-2v1m1,-1v1m1,-2v1m1,-2v1m1,-2v1m1,-2v1m1,-2v1m1,-2v1m1,-1v1m1,-2v1m1,-2v1m1,-2v1m1,-2v1m1,-2v1m1,-2v1m1,-2v1m1,-3v2m1,-3v1m1,-2v1m1,-2v1m1,-2v1m1,-3v2m1,-3v1m1,-2v1m1,-3v2m1,-3v1m1,-3v2m1,-3v1m1,-2v1m1,-3v2m1,-3v1m1,-3v2m1,-3v1m1,-3v2m1,-3v1m1,-3v2m1,-3v1m1,-3v2m1,-3v1m1,-3v2m1,-4v2m1,-3v1m1,-3v2m1,-3v1m1,-3v2m1,-3v1m1,-3v2m1,-3v1m1,-2v1m1,-3v2m1,-3v1m1,-2v1m1,-3v2m1,-3v1m1,-2v1m1,-3v2m1,-3v1m1,-2v1m1,-2v1m1,-3v2m1,-3v1m1,-2v1m1,-2v1m1,-2v1m1,-3v2m1,-3v1m1,-2v1m1,-2v1m1,-2v1m1,-1v1m1,-2v1m1,-2v1m1,-2v1m1,-1v1m1,-2v1m1,-2v1m1,-2v1m1,-1v1m1,-2v1m1,-1v1m1,-2v1m1,-1v1m1,-2v1m1,-1v1m1,-1v1m1,-1v1m1,-1v1m1,-1v1m1,-1v1m1,-1v1m1,-1v1m1,-1v1m1,0v1m1,-1v1m1,-1v1m1,-1v1m1,-1v1m1,0v1m1,-1v1m1,-1v1m1,-1v1m1,-1v1m1,0v1m1,-1v1m1,0v1m1,-1v1m1,-1v1m1,0v1m1,-1v1m1,-1v1m1,0v1m1,-1v1m1,-1v1m1,0v1m1,-1v1m1,-1v1m1,0v1m1,-1v1m1,-1v1m1,0v1m1,-1v1m1,0v1m1,-1v1m1,-1v1m1,0v1m1,-1v1m1,-1v1m1,0v1m1,-1v1m1,-1v1m1,0v1m1,-1v1m1,0v1m1,-1v1m1,0v1m1,-1v1m1,0v1m1,-1v1m1,0v1m1,-1v1m1,0v1m1,-1v1m1,0v1m1,0v1m1,-1v1m1,0v1m1,0v1m1,0v1m1,-1v1m1,0v1m1,0v1m1,0v1m1,0v1m1,0v2m1,0v1m1,0v1m1,0v1m1,0v1m1,0v1m1,0v1m1,0v1m1,0v1m1,0v1m1,0v2m1,0v1m1,0v1m1,0v2m1,0v1m1,0v2m1,0v2m1,0v2m1,0v2m1,0v2m1,0v2m1,0v2m1,0v2m1,0v2m1,0v2m1,0v2m1,0v2m1,0v1m1,0v2m1,0v2m1,0v1m1,0v2m1,0v2m1,0v2m1,0v2m1,0v1m1,0v2m1,0v1m1,0v2m1,0v1m1,0v2m1,0v1m1,0v2m1,0v1m1,0v2m1,0v2m1,0v1m1,0v1m1,0v1m1,0v2m1,0v1m1,0v1m1,0v1m1,0v1m1,0v1m1,0v2m1,0v1m1,0v1m1,0v1m1,0v1m1,0v1m1,-1v1m1,0v1m1,0v1m1,0v1m1,0v1m1,0v1m1,0v1m1,0v1m1,0v1m1,0v1m1,0v1m1,0v1m1,0v1m1,0v1m1,0v1m1,0v1m1,0v2m1,0v1m1,0v1m1,0v1m1,-1v1m1,0v1m1,0v1m1,-1v1m1,0v1m1,0v1m1,-1v1m1,0v1m1,-1v1m1,0v1m1,0v1m1,-1v1m1,0v1m1,-1v1m1,0v1m1,-1v1m1,0v1m1,-1v1m1,0v1m1,-1v1m1,0v1m1,-1v1m1,0v1m1,-1v1m1,-1v1m1,0v1m1,-1v1m1,-1v1m1,-2v1m1,-1v1m1,-2v1m1,-1v1m1,-1v1m1,-2v1m1,-1v1m1,-1v1m1,-2v1m1,-1v1m1,-1v1m1,-2v1m1,-1v1m1,-2v1m1,-1v1m1,-1v1m1,-2v1m1,-1v1m1,-2v1m1,-1v1m1,-2v1m1,-1v1m1,-2v1m1,-1v1m1,-2v1m1,-1v1m1,-2v1m1,-2v1m1,-3v2m1,-3v1m1,-2v1m1,-3v2m1,-3v1m1,-2v1m1,-3v2m1,-3v1m1,-2v1m1,-3v2m1,-3v1m1,-3v2m1,-4v2m1,-3v1m1,-3v2m1,-4v2m1,-3v1m1,-3v2m1,-4v2m1,-4v2m1,-4v2m1,-3v1m1,-3v2m1,-4v2m1,-4v2m1,-4v2m1,-4v2m1,-3v1m1,-3v2m1,-3v1m1,-3v2m1,-3v1m1,-3v2m1,-3v1m1,-3v2m1,-4v2m1,-4v2m1,-4v2m1,-4v2m1,-4v2m1,-4v2m1,-4v2m1,-4v2m1,-3v1m1,-3v2m1,-3v1m1,-3v2m1,-4v2m1,-3v1m1,-3v2m1,-3v1m1,-3v2m1,-3v1m1,-2v1m1,-2v1m1,-3v2m1,-3v1m1,-2v1m1,-2v1m1,-2v1m1,-3v2m1,-3v1m1,-2v1m1,-2v1m1,-2v1m1,-2v1m1,-2v1m1,-1v1m1,-2v1m1,-2v1m1,-2v1m1,-2v1m1,-2v1m1,-1v1m1,-2v1m1,-2v1m1,-2v1m1,-3v2m1,-3v1m1,-2v1m1,-2v1m1,-3v2m1,-3v1m1,-2v1m1,-3v2m1,-3v1m1,-2v1m1,-2v1m1,-1v1m1,-2v1m1,-1v1m1,-2v1m1,-1v1m1,-2v1m1,-1v1m1,-2v1m1,-1v1m1,-2v1m1,-1v1m1,-2v1m1,-1v1m1,-2v1m1,-1v1m1,-1v1m1,-1v1m1,0v1m1,-1v1m1,-1v1" fill="none" stroke="#f0f000" stroke-width="1"/>
<path d="M4.5,315v1m1,-3v2m1,-3v1m1,-2v1m1,-3v2m1,-3v1m1,-2v1m1,-3v2m1,-3v1m1,-2v1m1,-3v2m1,-3v1m1,0v1m1,0v1m1,-1v1m1,0v1m1,0v1m1,-1v1m1,-1v1m1,-1v1m1,-1v1m1,-1v1m1,-1v1m1,-2v1m1,-1v1m1,-2v1m1,-2v1m1,-1v1m1,-2v1m1,-2v1m1,-1v1m1,-2v1m1,-2v1m1,-2v1m1,-1v1m1,-2v1m1,-1v1m1,-1v1m1,-1v1m1,-1v1m1,0v1m1,0v1m1,-1v1m1,0v1m1,0v1m1,0v1m1,0v1m1,-1v1m1,0v1m1,0v1m1,-1v1m1,0v1m1,-1v1m1,-1v1m1,-2v1m1,-2v1m1,-1v1m1,-2v1m1,-2v1m1,-3v2m1,-3v1m1,-3v2m1,-3v1m1,-3v2m1,-4v2m1,-4v2m1,-5v3m1,-5v2m1,-5v3m1,-6v3m1,-5v2m1,-5v3m1,-5v2m1,-4v2m1,-4v2m1,-4v2m1,-4v2m1,-4v2m1,-4v2m1,-4v2m1,-4v2m1,-4v2m1,-4v2m1,-4v2m1,-3v1m1,-1v1m1,-2v1m1,-1v1m1,-2v1m1,-1v1m1,-2v1m1,-1v1m1,-2v1m1,-1v1m1,-2v1m1,-2v1m1,-1v1m1,-2v1m1,-1v1m1,-2v1m1,-1v1m1,-2v1m1,-3v2m1,-3v1m1,-2v1m1,-2v1m1,-2v1m1,-3v2m1,-3v1m1,-2v1m1,-1v1m1,-1v1m1,-1v1m1,-2v1m1,-1v1m1,-1v1m1,-1v1m1,-3v2m1,-3v1m1,-3v2m1,-3v1m1,-3v2m1,-3v1m1,-3v2m1,-4v2m1,-6v4m1,-8v4m1,-7v3m1,-7v4m1,-7v3m1,-7v4m1,-8v4m1,-6v2m1,-4v2m1,-3v1m1,-3v2m1,-3v1m1,-3v2m1,-3v1m1,-2v1m1,-2v1m1,-2v1m1,-2v1m1,-2v1m1,-2v1m1,0v1m1,-1v1m1,0v1m1,-1v1m1,0v1m1,-1v1m1,-1v1m1,-1v1m1,-1v1m1,-1v1m1,-2v1m1,-1v1m1,-1v1m1,-1v1m1,-1v1m1,-1v1m1,-1v1m1,-1v1m1,-2v1m1,-1v1m1,-1v1m1,0v2m1,0v1m1,0v2m1,0v1m1,0v2m1,0v1m1,0v2m1,0v1m1,0v1m1,0v2m1,0v1m1,0v1m1,-1v1m1,0v1m1,0v1m1,0v1m1,-1v1m1,0v1m1,0v2m1,0v2m1,0v2m1,0v2m1,0v2m1,0v2m1,0v3m1,0v2m1,0v3m1,0v2m1,0v2m1,0v1m1,0v1m1,0v1m1,0v1m1,0v1m1,-2v1m1,-1v1m1,-2v1m1,-1v1m1,-2v1m1,-2v1m1,-1v1m1,-2v1m1,-1v1m1,-2v1m1,-1v1m1,-1v1m1,0v1m1,-1v1m1,-1v1m1,-1v1m1,-2v1m1,-2v1m1,-1v1m1,-2v1m1,-2v1m1,0v1m1,0v2m1,0v1m1,0v1m1,0v2m1,0v1m1,0v1m1,0v1m1,0v1m1,-1v1m1,0v1m1,0v1m1,-1v1m1,-1v1m1,0v1m1,-1v1m1,-1v1m1,-1v1m1,-2v1m1,-1v1m1,-1v1m1,-2v1m1,-1v1m1,-2v1m1,-2v1m1,-2v1m1,-2v1m1,-2v1m1,0v1m1,-1v1m1,0v1m1,-1v1m1,0v1m1,-1v1m1,-2v1m1,-2v1m1,-2v1m1,-1v1m1,-2v1m1,-2v1m1,-2v1m1,-1v1m1,-2v1m1,-1v1m1,-2v1m1,-2v1m1,-1v1m1,-2v1m1,-1v1m1,-2v1m1,-1v1m1,-2v1m1,-2v1m1,-2v1m1,-2v1m1,-3v2m1,-5v3m1,-6v3m1,-7v4m1,-7v3m1,-5v2m1,-3v1m1,-1v1m1,-2v1m1,-2v1m1,-1v1m1,-2v1m1,0v2m1,0v1m1,0v2m1,0v1m1,0v2m1,0v1m1,0v1m1,0v1m1,-1v1m1,0v1m1,0v1m1,-1v1m1,-1v1m1,-2v1m1,-1v1m1,-1v1m1,-1v1m1,-2v1m1,-2v1m1,-3v2m1,-3v1m1,-2v1m1,-2v1m1,-1v1m1,-2v1m1,-2v1m1,-1v1m1,-2v1m1,-3v2m1,-3v1m1,-2v1m1,-3v2m1,-3v1m1,-2v1m1,-2v1m1,-3v2m1,-3v1m1,-2v1m1,-2v1m1,-2v1m1,-2v1m1,-1v1m1,-2v1m1,-2v1m1,-2v1m1,-2v1m1,-3v2m1,-3v1m1,-2v1m1,-3v2m1,-4v2m1,-4v2m1,-4v2m1,-4v2m1,-4v2m1,-3v1m1,-2v1m1,-3v2m1,-3v1m1,-2v1m1,0v2m1,0v2m1,0v1m1,0v2m1,0v2m1,0v1m1,0v2m1,0v2m1,0v2m1,0v2m1,0v1m1,0v2m1,0v2m1,0v1m1,0v2m1,0v2m1,0v2m1,0v4m1,0v4m1,0v4m1,0v4m1,0v5m1,0v5m1,0v5m1,0v5m1,0v5m1,0v4m1,0v3m1,0v4m1,0v3m1,0v3m1,0v4m1,0v3m1,0v3m1,0v3m1,0v3m1,0v3m1,0v3m1,0v3m1,0v4m1,0v4m1,0v4m1,0v4m1,0v3m1,0v3m1,0v3m1,0v3m1,0v3m1,0v3m1,0v4m1,0v5m1,0v5m1,0v6m1,0v5m1,0v5m1,0v6m1,0v6m1,0v6m1,0v6m1,0v6m1,0v6m1,0v4m1,0v5m1,0v5m1,0v4m1,0v4m1,0v4m1,0v4m1,0v4m1,0v4m1,0v4m1,0v4m1,0v3m1,0v2m1,0v3m1,0v3m1,0v2m1,0v2m1,0v1m1,0v2m1,0v2m1,0v1m1,0v1m1,-1v1m1,0v1m1,-1v1m1,0v1m1,-1v1m1,-1v1m1,-2v1m1,-1v1m1,-2v1m1,-1v1m1,-1v1m1,-2v1m1,-1v1m1,-1v1m1,-2v1m1,-2v2m1,-5v3m1,-5v2m1,-5v3m1,-6v3m1,-6v3m1,-5v2m1,-4v2m1,-5v3m1,-5v2m1,-4v2m1,-5v3m1,-5v2m1,-5v3m1,-6v3m1,-5v2m1,-4v2m1,-3v1m1,-1v1m1,-2v1m1,-2v1m1,-1v1m1,-2v1m1,-2v1m1,-1v1m1,-2v1m1,-1v1m1,-2v1m1,-1v1m1,-1v1m1,-1v1m1,-2v1m1,-1v1m1,-1v2m1,0v2m1,0v3m1,0v3m1,0v2m1,0v2m1,0v1m1,0v1m1,0v2m1,0v1m1,0v1m1,0v1m1,0v1m1,0v1m1,0v1m1,0v1m1,0v1m1,0v1m1,-2v1m1,-1v1m1,-2v1m1,-1v1m1,-2v1m1,-2v1m1,-2v1m1,-1v1m1,-2v1m1,-2v1m1,-2v1m1,-1v1m1,-2v1m1,-1v1m1,-2v1m1,-1v1m1,-1v1m1,-1v1m1,0v1m1,-1v1m1,-1v1m1,-2v1m1,-1v1m1,-2v1m1,-1v1m1,-2v1m1,-1v1m1,-1v1m1,-2v1m1,-1v1m1,-2v1m1,-1v1m1,-1v1m1,-1v1m1,-1v1m1,-1v1m1,-1v1m1,-1v1m1,-2v2m1,-5v3m1,-6v3m1,-7v4m1,-7v3m1,-5v2m1,-3v1m1,-2v1m1,-3v2m1,-3v1m1,-2v1m1,-2v1m1,-1v1m1,-2v1m1,-1v1m1,-2v1m1,-1v1m1,-2v1m1,-1v1m1,-2v1m1,-2v1m1,-1v1m1,-2v1m1,-2v1m1,-2v1m1,-1v1m1,-2v1m1,-2v1m1,-2v1m1,-1v1m1,-2v1m1,-2v1m1,-1v1m1,-2v1m1,-1v1m1,-1v1m1,0v1m1,-1v1m1,-1v2m1,0v2m1,0v2m1,0v2m1,0v2m1,0v2m1,0v2m1,0v1m1,0v1m1,0v1m1,0v1m1,0v1m1,-1v1m1,-1v1m1,0v1m1,-1v1m1,-1v1m1,-1v1m1,-1v1m1,0v1m1,-1v1m1,-1v1m1,-3v2m1,-4v2m1,-4v2m1,-4v2m1,-4v2m1,-3v1m1,-3v2m1,-4v2m1,-4v2m1,-4v2m1,-4v2m1,-4v2m1,-4v2m1,-5v3m1,-6v3m1,-5v2m1,-5v3m1,-7v4m1,-7v3m1,-7v4m1,-8v4m1,-7v3m1,-5v2m1,-4v2m1,-4v2m1,-4v2m1,-4v2m1,-4v2m1,-2v1m1,-2v1m1,-1v1m1,-2v1m1,-1v1m1,0v1m1,-1v1m1,0v1m1,-1v1m1,0v1m1,-1v1m1,0v1m1,-1v1m1,-1v1m1,-1v1m1,-1v1m1,-1v1m1,-2v1m1,-2v1m1,-3v2m1,-3v1m1,-2v1m1,-3v2m1,-4v2m1,-3v1m1,-3v2m1,-4v2m1,-3v1m1,0v1m1,0v1m1,0v1m1,0v1m1,0v1m1,0v1m1,0v1m1,0v2m1,0v1m1,0v1m1,0v2m1,0v4m1,0v4m1,0v4m1,0v4m1,0v2m1,0v1m1,0v1m1,0v1m1,0v1m1,0v1m1,0v1m1,-1v1m1,0v1m1,-1v1m1,0v1m1,-1v1m1,-1v1m1,-1v1m1,-1v1m1,-1v1m1,-1v1m1,-1v1m1,0v2m1,0v1m1,0v1m1,0v2m1,0v1m1,0v1m1,-1v1m1,0v1m1,-1v1m1,0v1m1,-1v1m1,-1v1m1,-2v1m1,-1v1m1,-2v1m1,-1v1m1,0v1m1,-1v1m1,0v1m1,-1v1m1,0v1m1,0v1m1,0v2m1,0v1m1,0v1m1,0v2m1,0v1m1,-1v1m1,-1v1m1,-2v1m1,-1v1m1,-1v1m1,-1v1m1,-2v1m1,-2v1m1,-3v2m1,-3v1m1,-2v1m1,-3v2m1,-4v2m1,-3v1m1,-3v2m1,-4v2m1,-3v1m1,-1v1m1,-2v1m1,-1v1m1,-2v1m1,-1v1m1,-1v1m1,0v1m1,-1v1m1,-1v1m1,0v1m1,-1v1m1,0v1m1,-1v1m1,0v1m1,-1v1m1,0v1m1,-2v1m1,-1v1m1,-2v1m1,-1v1m1,-2v1m1,-1v1m1,-3v2m1,-3v1m1,-2v1m1,-3v2m1,-3v1m1,-2v1m1,-1v1m1,-2v1m1,-2v1m1,-1v1m1,-2v1m1,-1v1m1,-1v1m1,-2v1m1,-1v1m1,-1v1m1,-2v1m1,-2v1m1,-1v1m1,-2v1m1,-3v2m1,-4v2m1,-4v2m1,-5v3m1,-5v2m1,-4v2m1,-4v2m1,-4v2m1,-4v2m1,-4v2m1,-4v2m1,-3v1m1,-3v2m1,-4v2m1,-4v2m1,-4v2m1,-4v2m1,-4v2m1,-3v1m1,-3v2m1,-4v2m1,-4v2m1,-4v2m1,-4v2m1,-4v2m1,-4v2m1,-3v1m1,-3v2m1,-4v2m1,-4v2m1,-6v4m1,-7v3m1,-7v4m1,-6v2m1,-4v2m1,-4v2m1,-4v2m1,-4v2m1,-4v2m1,-3v1m1,-2v1m1,-3v2m1,-3v1m1,-2v1m1,-3v2m1,-3v1m1,-1v1m1,-2v1m1,-1v1m1,-2v1m1,-1v1m1,-1v1m1,-2v1m1,-1v1m1,-1v1m1,-2v1m1,-1v1m1,-1v1m1,0v1m1,-1v1m1,0v1m1,-1v1m1,0v1m1,-1v1m1,0v1m1,-1v1m1,0v1m1,-1v1m1,0v2m1,0v2m1,0v2m1,0v2m1,0v2m1,0v1m1,0v1m1,0v1m1,0v1m1,0v1m1,0v1m1,0v1m1,-1v1m1,0v1m1,-1v1m1,0v1m1,-1v1m1,-1v1m1,-1v1m1,-1v1m1,-1v1m1,-1v1m1,0v1m1,-1v1m1,0v1m1,-1v1m1,0v1m1,0v1m1,0v1m1,-1v1m1,0v1m1,0v1m1,0v2m1,0v2m1,0v2m1,0v2m1,0v2m1,0v2m1,0v2m1,0v2m1,0v2m1,0v2m1,0v1m1,0v1m1,0v1m1,0v1m1,-1v1m1,0v1m1,0v2m1,0v2m1,0v2m1,0v2m1,0v2m1,0v3m1,0v3m1,0v3m1,0v3m1,0v3m1,0v3m1,0v3m1,0v3m1,0v2m1,0v3m1,0v3m1,0v2m1,-1v1m1,0v1m1,-1v1m1,-1v1m1,-1v1m1,0v1m1,-1v1m1,-3v2m1,-3v1m1,-3v2m1,-4v2m1,-3v1m1,-2v1m1,-1v1m1,-2v1m1,-1v1m1,-2v1m1,-1v1m1,-2v1m1,-1v1m1,-1v1m1,-2v1m1,-1v1m1,0v1m1,0v1m1,0v1m1,0v1m1,0v1m1,-1v1m1,-1v1m1,-2v1m1,-1v1m1,-1v1m1,-1v1m1,-1v1m1,-2v1m1,-1v1m1,-2v1m1,-1v1m1,-2v1m1,-2v1m1,-2v1m1,-2v1m1,-2v1m1,0v1m1,0v1m1,0v1m1,-1v1m1,0v1m1,0v1m1,0v1m1,-1v1m1,0v1m1,0v1m1,-1v1m1,0v1m1,-1v1m1,-2v1m1,-1v1m1,-2v1m1,-1v1m1,-3v2m1,-4v2m1,-3v1m1,-3v2m1,-4v2m1,-4v2m1,-4v2m1,-4v2m1,-4v2m1,-4v2m1,-4v2m1,-3v1m1,-3v2m1,-3v1m1,-2v1m1,-3v2m1,-3v1m1,-3v2m1,-4v2m1,-4v2m1,-4v2m1,-4v2m1,-3v1m1,-3v2m1,-3v1m1,-2v1m1,-3v2m1,-3v1m1,-2v1m1,-3v2m1,-3v1m1,-2v1m1,-3v2m1,-3v1m1,-2v1m1,-2v1m1,-3v2m1,-3v1m1,-2v1m1,-2v1m1,-1v1m1,-2v1m1,-1v1m1,-2v1m1,-1v1m1,-1v1m1,-1v1m1,-1v1m1,-1v1m1,-1v1m1,0v1m1,0v1m1,0v1m1,0v1m1,0v1m1,0v1m1,-1v1m1,0v1m1,0v1m1,-1v1m1,0v1m1,0v1m1,-1v1m1,0v1m1,-1v1m1,0v1m1,-1v1m1,-1v1m1,-1v1m1,-1v1m1,-1v1m1,-3v2m1,-4v2m1,-4v2m1,-4v2m1,-4v2m1,-5v3m1,-5v2m1,-4v2m1,-5v3m1,-5v2m1,-4v2m1,-4v2m1,-4v2m1,-4v2m1,-4v2m1,-4v2m1,-3v1m1,-2v1m1,-2v1m1,-3v2m1,-3v1m1,-2v1m1,-1v1m1,-2v1m1,-1v1m1,-1v1m1,-2v1m1,-1v1m1,-1v1m1,-1v1m1,0v1m1,-1v1m1,-1v2m1,0v3m1,0v2m1,0v3m1,0v3m1,0v3m1,0v3m1,0v3m1,0v4m1,0v3m1,0v3m1,0v3m1,0v2m1,0v3m1,0v3m1,0v2m1,0v3m1,0v3m1,0v2m1,0v3m1,0v2m1,0v3m1,0v2m1,0v2m1,0v1m1,-1v1m1,0v1m1,-1v1m1,0v1m1,0v1m1,0v1m1,0v1m1,-1v1m1,0v1m1,0v1m1,-1v1m1,0v1m1,-1v1m1,0v1m1,-1v1m1,-1v1m1,-1v1m1,-2v1m1,-1v1m1,-1v1m1,-2v2m1,-4v2m1,-4v2m1,-5v3m1,-5v2m1,-4v2m1,-3v1m1,-1v1m1,-2v1m1,-2v1m1,-1v1m1,-3v2m1,-4v2m1,-5v3m1,-6v3m1,-5v2m1,-5v3m1,-5v2m1,-5v3m1,-6v3m1,-5v2m1,-5v3m1,-6v3m1,-5v2m1,-5v3m1,-6v3m1,-5v2m1,-4v2m1,-3v1m1,-3v2m1,-3v1m1,-2v1m1,-3v2m1,-3v1m1,-3v2m1,-3v1m1,-2v1m1,-3v2m1,-3v1m1,-3v2m1,-4v2m1,-4v2m1,-4v2m1,-4v2m1,-3v1m1,-1v1m1,-1v1m1,-1v1m1,-1v1m1,-1v1m1,-2v1m1,-2v1m1,-2v1m1,-2v1m1,-2v1m1,-2v1m1,-3v2m1,-3v1m1,-2v1m1,-3v2m1,-4v2m1,-4v2m1,-4v2m1,-5v3m1,-5v2m1,-4v2m1,-4v2m1,-4v2m1,-4v2m1,-4v2m1,-4v2m1,-4v2m1,-5v3m1,-6v3m1,-7v4m1,-7v3m1,-6v3m1,-7v4m1,-8v4m1,-7v3m1,-7v4m1,-8v4m1,-7v3m1,-5v2m1,-4v2m1,-5v3m1,-5v2m1,-4v2m1,-3v1m1,-2v1m1,-3v2m1,-3v1m1,-2v1m1,-2v1m1,-2v1m1,-2v1m1,-2v1m1,-2v1m1,-2v1m1,-2v1m1,-2v1m1,-2v1m1,-1v1m1,-2v1m1,-2v1m1,-1v1m1,0v1m1,-1v1m1,-1v1m1,0v1m1,-1v1m1,-1v1m1,-2v1m1,-1v1m1,-2v1m1,-1v1m1,-1v1m1,-2v1m1,-1v1m1,-1v1m1,-2v1m1,-1v1m1,-1v1m1,-1v1m1,0v1m1,-1v1m1,-1v2m1,0v2m1,0v2m1,0v2m1,0v2m1,0v2m1,0v3m1,0v4m1,0v4m1,0v4m1,0v4m1,0v2m1,0v1m1,0v2m1,0v1m1,0v1m1,0v2m1,0v1m1,0v2m1,0v2m1,0v2m1,0v2m1,0v3m1,0v2m1,0v2m1,0v3m1,0v2m1,0v2m1,0v2m1,0v1m1,0v2m1,0v1m1,0v2m1,0v1m1,0v1m1,-1v1m1,0v1m1,-1v1m1,0v1m1,-2v1m1,-1v1m1,-2v1m1,-1v1m1,-2v1m1,0v1m1,-1v1m1,0v1m1,-1v1m1,0v1m1,-1v1m1,0v1m1,0v1m1,0v1m1,-1v1m1,0v1m1,0v1m1,-1v1m1,-1v1m1,-2v1m1,-1v1m1,-1v1m1,-1v2m1,0v2m1,0v3m1,0v3m1,0v2m1,0v2m1,0v2m1,0v2m1,0v2m1,0v2m1,0v2m1,0v3m1,0v3m1,0v3m1,0v3m1,0v3m1,0v3m1,0v2m1,0v3m1,0v3m1,0v2m1,0v3m1,0v2m1,0v3m1,0v3m1,0v2m1,0v3m1,0v3m1,0v3m1,0v4m1,0v3m1,0v3m1,0v4m1,0v4m1,0v5m1,0v4m1,0v5m1,0v5m1,0v4m1,0v2m1,0v3m1,0v3m1,0v2m1,0v2m1,0v1m1,0v2m1,0v1m1,0v1m1,0v2m1,0v1m1,0v1m1,0v1m1,0v2m1,0v1m1,0v1m1,0v1m1,-1v1m1,0v1m1,-1v1m1,0v1m1,-1v1m1,-1v1m1,-1v1m1,-1v1m1,-1v1m1,-1v1m1,-2v1m1,-2v1m1,-2v1m1,-2v1m1,-2v1m1,-2v1m1,-1v1m1,-1v1m1,-1v1m1,-1v1m1,-1v1m1,0v1m1,-1v1m1,0v1m1,0v1m1,-1v1m1,0v1m1,0v2m1,0v1m1,0v1m1,0v2m1,0v1m1,0v1m1,0v1m1,0v1m1,-1v1m1,0v1m1,0v1m1,0v1m1,0v1m1,-1v1m1,0v1m1,0v1m1,-3v2m1,-3v1m1,-3v2m1,-3v1m1,-3v2m1,-3v1m1,-2v1m1,-2v1m1,-1v1m1,-2v1m1,-2v1m1,-1v1m1,-1v1m1,-2v1m1,-1v1m1,-1v1m1,-1v1m1,-1v1m1,-1v1m1,0v1m1,-1v1m1,-1v1m1,-3v3m1,-8v5m1,-9v4m1,-7v3m1,-7v4m1,-7v3m1,-6v3m1,-5v2m1,-5v3m1,-6v3m1,-5v2m1,-4v2m1,-4v2m1,-4v2m1,-4v2m1,-4v2m1,-4v2m1,-4v2m1,-3v1m1,-2v1m1,-3v2m1,-4v2m1,-5v3m1,-6v3m1,-6v3m1,-6v3m1,-6v3m1,-5v2m1,-5v3m1,-5v2m1,-5v3m1,-6v3m1,-5v2m1,-6v4m1,-8v4m1,-8v4m1,-9v5m1,-9v4m1,-8v4m1,-7v3m1,-6v3m1,-5v2m1,-5v3m1,-6v3m1,-6v3m1,-6v3m1,-6v3m1,-6v3m1,-6v3m1,-6v3m1,-6v3m1,-6v3m1,-5v2m1,-5v3m1,-6v3m1,-5v2m1,-4v2m1,-4v2m1,-4v2m1,-4v2m1,-4v2m1,-5v3m1,-7v4m1,-7v3m1,-6v3m1,-7v4m1,-6v2m1,-4v2m1,-4v2m1,-4v2m1,-4v2m1,-3v1m1,-2v1m1,-1v1m1,-2v1m1,-1v1m1,-2v1m1,-2v1m1,-1v1m1,-2v1m1,-1v1m1,-2v1m1,-1v1m1,0v2m1,0v1m1,0v2m1,0v2m1,0v1m1,-1v1m1,-1v1m1,0v1m1,-1v1m1,-1v1m1,-1v1m1,-3v2m1,-4v2m1,-4v2m1,-4v2m1,-4v2m1,-2v1m1,-1v1m1,-2v1m1,-1v1m1,-1v1m1,-1v1m1,-1v1m1,-2v1m1,-1v1m1,-1v1m1,-2v1m1,-1v1m1,-2v1m1,-2v1m1,-3v2m1,-3v1m1,-2v1m1,-1v1m1,0v1m1,-1v1m1,-1v1m1,0v1m1,-1v2m1,0v2m1,0v2m1,0v2m1,0v2m1,0v2m1,-1v1m1,0v1m1,-1v1m1,-1v1m1,0v1m1,-1v1m1,-1v1m1,-1v1m1,-2v1m1,-1v1m1,-1v3m1,0v6m1,0v5m1,0v6m1,0v6m1,0v3" fill="none" stroke="#ffffff" stroke-width="1"/>
<g><circle cx="70" cy="291" r="7.5" fill="#ff0000" stroke="#008000" stroke-width="1" shape-rendering="auto"/><rect x="67" y="287" width="2" height="4" fill="#00a0a0"/><rect x="71" y="287" width="2" height="4" fill="#00a000"/><path d="M67,293h6v1h-6zM66,294h1v2h-1zM73,294h1v2h-1z" fill="#008000"/></g>
<g><circle cx="267" cy="246" r="7.5" fill="#ff0000" stroke="#008000" stroke-width="1" shape-rendering="auto"/><rect x="264" y="242" width="2" height="4" fill="#00a0a0"/><rect x="268" y="242" width="2" height="4" fill="#00a000"/><path d="M264,248h6v1h-6zM263,249h1v2h-1zM270,249h1v2h-1z" fill="#008000"/></g>
<g><circle cx="279" cy="246" r="7.5" fill="#ff0000" stroke="#008000" stroke-width="1" shape-rendering="auto"/><rect x="276" y="242" width="2" height="4" fill="#00a0a0"/><rect x="280" y="242" width="2" height="4" fill="#00a000"/><path d="M276,248h6v1h-6zM275,249h1v2h-1zM282,249h1v2h-1z" fill="#008000"/></g>
<g><circle cx="543" cy="407" r="7.5" fill="#ff0000" stroke="#008000" stroke-width="1" shape-rendering="auto"/><rect x="540" y="403" width="2" height="4" fill="#00a0a0"/><rect x="544" y="403" width="2" height="4" fill="#00a000"/><path d="M540,409h6v1h-6zM539,410h1v2h-1zM546,410h1v2h-1z" fill="#008000"/></g>
<g><circle cx="604" cy="400" r="7.5" fill="#ff0000" stroke="#008000" stroke-width="1" shape-rendering="auto"/><rect x="601" y="396" width="2" height="4" fill="#00a0a0"/><rect x="605" y="396" width="2" height="4" fill="#00a000"/><path d="M601,402h6v1h-6zM600,403h1v2h-1zM607,403h1v2h-1z" fill="#008000"/></g>
<g><circle cx="730" cy="326" r="7.5" fill="#ff0000" stroke="#008000" stroke-width="1" shape-rendering="auto"/><rect x="727" y="322" width="2" height="4" fill="#00a0a0"/><rect x="731" y="322" width="2" height="4" fill="#00a000"/><path d="M727,328h6v1h-6zM726,329h1v2h-1zM733,329h1v2h-1z" fill="#008000"/></g>
<g><circle cx="752" cy="371" r="7.5" fill="#ff0000" stroke="#008000" stroke-width="1" shape-rendering="auto"/><rect x="749" y="367" width="2" height="4" fill="#00a0a0"/><rect x="753" y="367" width="2" height="4" fill="#00a000"/><path d="M749,373h6v1h-6zM748,374h1v2h-1zM755,374h1v2h-1z" fill="#008000"/></g>
<g><circle cx="978" cy="309" r="7.5" fill="#ff0000" stroke="#008000" stroke-width="1" shape-rendering="auto"/><rect x="975" y="305" width="2" height="4" fill="#00a0a0"/><rect x="979" y="305" width="2" height="4" fill="#00a000"/><path d="M975,311h6v1h-6zM974,312h1v2h-1zM981,312h1v2h-1z" fill="#008000"/></g>
<g><circle cx="1131" cy="276" r="7.5" fill="#ff0000" stroke="#008000" stroke-width="1" shape-rendering="auto"/><rect x="1128" y="272" width="2" height="4" fill="#00a0a0"/><rect x="1132" y="272" width="2" height="4" fill="#00a000"/><path d="M1128,278h6v1h-6zM1127,279h1v2h-1zM1134,279h1v2h-1z" fill="#008000"/></g>
<g><circle cx="1246" cy="199" r="7.5" fill="#ff0000" stroke="#008000" stroke-width="1" shape-rendering="auto"/><rect x="1243" y="195" width="2" height="4" fill="#00a0a0"/><rect x="1247" y="195" width="2" height="4" fill="#00a000"/><path d="M1243,201h6v1h-6zM1242,202h1v2h-1zM1249,202h1v2h-1z" fill="#008000"/></g>
<g><circle cx="1434" cy="271" r="7.5" fill="#ff0000" stroke="#008000" stroke-width="1" shape-rendering="auto"/><rect x="1431" y="267" width="2" height="4" fill="#00a0a0"/><rect x="1435" y="267" width="2" height="4" fill="#00a000"/><path d="M1431,273h6v1h-6zM1430,274h1v2h-1zM1437,274h1v2h-1z" fill="#008000"/></g>
<path d="M69.5,285.5h2v3h-2zM75.5,271.5h2v15h-2zM80.5,260.5h2v23h-2zM86.5,249.5h2v31h-2zM91.5,245.5h2v31h-2zM97.5,242.5h2v30h-2zM102.5,239.5h2v29h-2zM108.5,233.5h2v32h-2zM113.5,228.5h2v33h-2zM119.5,227.5h2v31h-2zM124.5,219.5h2v36h-2zM130.5,205.5h2v47h-2zM135.5,186.5h2v61h-2zM141.5,178.5h2v63h-2zM146.5,171.5h2v64h-2zM152.5,174.5h2v55h-2zM157.5,174.5h2v49h-2zM163.5,173.5h2v44h-2zM168.5,173.5h2v39h-2zM174.5,181.5h2v28h-2zM179.5,188.5h2v19h-2zM185.5,192.5h2v14h-2zM190.5,201.5h2v5h-2zM267.5,215.5h2v2h-2zM273.5,213.5h2v3h-2zM278.5,207.5h2v8h-2zM284.5,192.5h2v21h-2zM289.5,187.5h2v25h-2zM295.5,195.5h2v15h-2zM300.5,200.5h2v9h-2zM306.5,199.5h2v9h-2zM311.5,193.5h2v14h-2zM317.5,190.5h2v15h-2zM322.5,182.5h2v21h-2zM328.5,177.5h2v22h-2zM333.5,171.5h2v26h-2zM339.5,165.5h2v29h-2zM344.5,153.5h2v38h-2zM350.5,147.5h2v41h-2zM355.5,157.5h2v28h-2zM361.5,166.5h2v17h-2zM366.5,176.5h2v6h-2zM542.5,373.5h2v6h-2zM548.5,367.5h2v11h-2zM553.5,364.5h2v13h-2zM559.5,360.5h2v15h-2zM564.5,356.5h2v17h-2zM570.5,352.5h2v19h-2zM575.5,353.5h2v17h-2zM581.5,365.5h2v4h-2zM603.5,362.5h2v6h-2zM608.5,352.5h2v14h-2zM614.5,338.5h2v26h-2zM619.5,320.5h2v39h-2zM625.5,307.5h2v47h-2zM630.5,305.5h2v45h-2zM636.5,309.5h2v37h-2zM641.5,309.5h2v33h-2zM647.5,303.5h2v35h-2zM652.5,293.5h2v42h-2zM658.5,298.5h2v33h-2zM663.5,305.5h2v24h-2zM669.5,324.5h2v4h-2zM735.5,332.5h2v3h-2zM757.5,328.5h2v6h-2zM762.5,323.5h2v10h-2zM768.5,322.5h2v10h-2zM773.5,318.5h2v12h-2zM779.5,305.5h2v23h-2zM784.5,295.5h2v30h-2zM790.5,283.5h2v39h-2zM795.5,272.5h2v45h-2zM801.5,263.5h2v50h-2zM806.5,247.5h2v60h-2zM812.5,236.5h2v66h-2zM817.5,229.5h2v66h-2zM823.5,227.5h2v61h-2zM828.5,225.5h2v57h-2zM834.5,227.5h2v50h-2zM839.5,230.5h2v43h-2zM845.5,240.5h2v29h-2zM850.5,246.5h2v21h-2zM856.5,249.5h2v16h-2zM861.5,249.5h2v14h-2zM867.5,252.5h2v10h-2zM872.5,256.5h2v7h-2zM977.5,298.5h2v4h-2zM982.5,289.5h2v11h-2zM988.5,279.5h2v19h-2zM993.5,271.5h2v25h-2zM999.5,264.5h2v29h-2zM1004.5,257.5h2v33h-2zM1010.5,255.5h2v32h-2zM1015.5,254.5h2v31h-2zM1021.5,259.5h2v23h-2zM1026.5,263.5h2v17h-2zM1032.5,266.5h2v12h-2zM1037.5,266.5h2v9h-2zM1043.5,253.5h2v19h-2zM1048.5,240.5h2v29h-2zM1054.5,231.5h2v34h-2zM1059.5,225.5h2v37h-2zM1065.5,223.5h2v36h-2zM1070.5,225.5h2v31h-2zM1076.5,240.5h2v15h-2zM1131.5,268.5h2v5h-2zM1136.5,252.5h2v18h-2zM1142.5,239.5h2v28h-2zM1147.5,231.5h2v32h-2zM1153.5,224.5h2v36h-2zM1158.5,213.5h2v43h-2zM1164.5,212.5h2v40h-2zM1169.5,207.5h2v41h-2zM1175.5,199.5h2v44h-2zM1180.5,187.5h2v51h-2zM1186.5,177.5h2v55h-2zM1191.5,161.5h2v64h-2zM1197.5,139.5h2v78h-2zM1202.5,127.5h2v82h-2zM1208.5,121.5h2v80h-2zM1213.5,115.5h2v77h-2zM1219.5,110.5h2v75h-2zM1224.5,112.5h2v66h-2zM1230.5,110.5h2v61h-2zM1235.5,108.5h2v57h-2zM1241.5,110.5h2v51h-2zM1246.5,122.5h2v35h-2zM1252.5,142.5h2v13h-2zM1257.5,149.5h2v6h-2zM1433.5,297.5h2v7h-2zM1439.5,285.5h2v17h-2zM1444.5,278.5h2v22h-2zM1450.5,262.5h2v36h-2zM1455.5,245.5h2v49h-2zM1461.5,222.5h2v65h-2zM1466.5,206.5h2v73h-2zM1472.5,190.5h2v81h-2zM1477.5,174.5h2v88h-2zM1483.5,164.5h2v87h-2zM1488.5,146.5h2v96h-2zM1494.5,136.5h2v97h-2zM1499.5,133.5h2v90h-2zM1505.5,131.5h2v84h-2zM1510.5,138.5h2v68h-2zM1516.5,138.5h2v62h-2zM1521.5,129.5h2v64h-2zM1527.5,128.5h2v60h-2zM1532.5,126.5h2v57h-2zM1538.5,120.5h2v56h-2zM1543.5,122.5h2v47h-2zM1549.5,133.5h2v33h-2zM1554.5,135.5h2v28h-2zM1560.5,135.5h2v26h-2z" fill="none" stroke="#c82020" stroke-width="1"/>
<path d="M3.5,265.5h2v50h-2zM9.5,269.5h2v38h-2zM14.5,271.5h2v30h-2zM20.5,275.5h2v29h-2zM25.5,277.5h2v27h-2zM31.5,279.5h2v21h-2zM36.5,281.5h2v15h-2zM42.5,283.5h2v12h-2zM47.5,285.5h2v15h-2zM53.5,287.5h2v16h-2zM58.5,288.5h2v14h-2zM64.5,288.5h2v8h-2zM196.5,207.5h2v9h-2zM201.5,208.5h2v14h-2zM207.5,210.5h2v10h-2zM212.5,210.5h2v6h-2zM218.5,211.5h2v6h-2zM229.5,213.5h2v8h-2zM234.5,214.5h2v12h-2zM240.5,215.5h2v12h-2zM245.5,216.5h2v9h-2zM251.5,217.5h2v4h-2zM256.5,217.5h2v6h-2zM372.5,184.5h2v12h-2zM377.5,188.5h2v33h-2zM383.5,194.5h2v48h-2zM388.5,200.5h2v59h-2zM394.5,207.5h2v71h-2zM399.5,215.5h2v81h-2zM405.5,226.5h2v96h-2zM410.5,238.5h2v120h-2zM416.5,252.5h2v128h-2zM421.5,267.5h2v138h-2zM427.5,281.5h2v138h-2zM432.5,295.5h2v132h-2zM438.5,308.5h2v122h-2zM443.5,320.5h2v108h-2zM449.5,329.5h2v97h-2zM454.5,337.5h2v75h-2zM460.5,344.5h2v55h-2zM465.5,348.5h2v37h-2zM471.5,351.5h2v30h-2zM476.5,354.5h2v24h-2zM482.5,356.5h2v21h-2zM487.5,359.5h2v31h-2zM493.5,363.5h2v34h-2zM498.5,366.5h2v36h-2zM504.5,370.5h2v30h-2zM509.5,373.5h2v23h-2zM515.5,374.5h2v19h-2zM520.5,376.5h2v18h-2zM526.5,377.5h2v14h-2zM531.5,378.5h2v11h-2zM537.5,379.5h2v10h-2zM597.5,370.5h2v3h-2zM680.5,330.5h2v2h-2zM691.5,332.5h2v7h-2zM696.5,333.5h2v9h-2zM702.5,334.5h2v6h-2zM707.5,335.5h2v9h-2zM713.5,336.5h2v15h-2zM718.5,336.5h2v14h-2zM724.5,336.5h2v9h-2zM746.5,334.5h2v3h-2zM878.5,263.5h2v5h-2zM883.5,264.5h2v13h-2zM889.5,266.5h2v16h-2zM894.5,269.5h2v24h-2zM900.5,272.5h2v39h-2zM905.5,277.5h2v48h-2zM911.5,282.5h2v45h-2zM916.5,285.5h2v34h-2zM922.5,289.5h2v27h-2zM927.5,292.5h2v22h-2zM933.5,294.5h2v25h-2zM938.5,296.5h2v22h-2zM944.5,298.5h2v18h-2zM949.5,299.5h2v12h-2zM955.5,301.5h2v15h-2zM960.5,302.5h2v18h-2zM966.5,303.5h2v15h-2zM971.5,302.5h2v7h-2zM1081.5,256.5h2v3h-2zM1087.5,258.5h2v16h-2zM1092.5,261.5h2v27h-2zM1098.5,264.5h2v27h-2zM1103.5,267.5h2v29h-2zM1109.5,270.5h2v28h-2zM1114.5,272.5h2v25h-2zM1120.5,273.5h2v12h-2zM1125.5,274.5h2v7h-2zM1263.5,156.5h2v4h-2zM1268.5,157.5h2v14h-2zM1274.5,159.5h2v22h-2zM1279.5,161.5h2v22h-2zM1285.5,163.5h2v18h-2zM1290.5,165.5h2v18h-2zM1296.5,167.5h2v21h-2zM1301.5,169.5h2v18h-2zM1307.5,172.5h2v29h-2zM1312.5,176.5h2v36h-2zM1318.5,180.5h2v48h-2zM1323.5,186.5h2v54h-2zM1329.5,192.5h2v65h-2zM1334.5,200.5h2v76h-2zM1340.5,211.5h2v90h-2zM1345.5,221.5h2v93h-2zM1351.5,231.5h2v91h-2zM1356.5,240.5h2v88h-2zM1362.5,249.5h2v81h-2zM1367.5,257.5h2v73h-2zM1373.5,264.5h2v60h-2zM1378.5,269.5h2v55h-2zM1384.5,275.5h2v54h-2zM1389.5,280.5h2v56h-2zM1395.5,286.5h2v55h-2zM1400.5,292.5h2v51h-2zM1406.5,295.5h2v40h-2zM1411.5,298.5h2v33h-2zM1417.5,301.5h2v29h-2zM1422.5,304.5h2v27h-2zM1428.5,305.5h2v5h-2z" fill="none" stroke="#00ffff" stroke-width="1"/>
<path d="M1566,262h1v4h-1zM1565,265h3v2h-3zM1566,267h1v2h-1z" fill="#d01010"/>
<path d="M10,279h1v78h-1zM9,284h3v58h-3zM15,248h1v54h-1zM14,267h3v23h-3zM26,291h1v37h-1zM25,297h3v25h-3zM32,279h1v27h-1zM31,286h3v10h-3zM37,269h1v25h-1zM36,278h3v10h-3zM54,310h1v38h-1zM53,311h3v1h-3zM59,298h1v34h-1zM58,299h3v15h-3zM65,270h1v47h-1zM64,276h3v23h-3zM70,230h1v48h-1zM69,232h3v46h-3zM76,215h1v26h-1zM75,226h3v9h-3zM87,187h1v52h-1zM86,192h3v46h-3zM103,220h1v30h-1zM102,226h3v22h-3zM109,206h1v25h-1zM108,214h3v13h-3zM114,198h1v25h-1zM113,205h3v12h-3zM125,187h1v56h-1zM124,195h3v47h-3zM131,132h1v75h-1zM130,135h3v71h-3zM136,118h1v33h-1zM135,129h3v6h-3zM158,156h1v51h-1zM157,159h3v37h-3zM169,148h1v42h-1zM168,160h3v29h-3zM186,191h1v41h-1zM185,209h3v13h-3zM202,233h1v30h-1zM201,235h3v24h-3zM208,199h1v48h-1zM207,211h3v27h-3zM213,205h1v13h-1zM212,210h3v6h-3zM219,184h1v36h-1zM218,209h3v2h-3zM235,226h1v38h-1zM234,228h3v33h-3zM246,203h1v40h-1zM245,225h3v10h-3zM252,202h1v27h-1zM251,206h3v20h-3zM263,202h1v29h-1zM262,208h3v17h-3zM268,189h1v46h-1zM267,193h3v18h-3zM279,156h1v81h-1zM278,158h3v73h-3zM285,138h1v30h-1zM284,139h3v25h-3zM301,214h1v34h-1zM300,217h3v16h-3zM307,188h1v39h-1zM306,192h3v26h-3zM312,168h1v37h-1zM311,169h3v30h-3zM323,148h1v51h-1zM322,158h3v37h-3zM329,140h1v43h-1zM328,146h3v19h-3zM340,145h1v36h-1zM339,150h3v23h-3zM345,107h1v53h-1zM344,112h3v43h-3zM362,185h1v40h-1zM361,187h3v18h-3zM389,302h1v44h-1zM388,308h3v14h-3zM417,446h1v45h-1zM416,450h3v30h-3zM428,451h1v48h-1zM427,453h3v34h-3zM433,430h1v43h-1zM432,439h3v29h-3zM439,420h1v47h-1zM438,431h3v20h-3zM444,410h1v46h-1zM443,427h3v12h-3zM450,383h1v45h-1zM449,413h3v13h-3zM455,362h1v52h-1zM454,371h3v42h-3zM461,345h1v33h-1zM460,358h3v13h-3zM466,320h1v64h-1zM465,322h3v35h-3zM477,337h1v40h-1zM476,363h3v8h-3zM494,412h1v39h-1zM493,418h3v1h-3zM499,389h1v50h-1zM498,407h3v21h-3zM505,375h1v50h-1zM504,392h3v25h-3zM510,345h1v58h-1zM509,371h3v29h-3zM527,355h1v54h-1zM526,363h3v43h-3zM543,316h1v80h-1zM542,318h3v71h-3zM565,319h1v66h-1zM564,322h3v51h-3zM587,377h1v45h-1zM586,385h3v23h-3zM593,357h1v40h-1zM592,371h3v25h-3zM604,319h1v70h-1zM603,322h3v62h-3zM609,292h1v37h-1zM608,299h3v25h-3zM615,282h1v34h-1zM614,287h3v13h-3zM620,252h1v40h-1zM619,257h3v31h-3zM642,293h1v37h-1zM641,299h3v27h-3zM648,278h1v32h-1zM647,289h3v12h-3zM653,246h1v46h-1zM652,250h3v41h-3zM675,344h1v34h-1zM674,350h3v18h-3zM681,328h1v32h-1zM680,333h3v17h-3zM686,317h1v33h-1zM685,330h3v9h-3zM697,336h1v37h-1zM696,342h3v21h-3zM703,320h1v33h-1zM702,337h3v10h-3zM719,337h1v41h-1zM718,345h3v30h-3zM725,306h1v54h-1zM724,309h3v36h-3zM730,285h1v31h-1zM729,290h3v21h-3zM752,314h1v46h-1zM751,322h3v30h-3zM758,294h1v34h-1zM757,310h3v13h-3zM763,288h1v40h-1zM762,299h3v15h-3zM774,300h1v31h-1zM773,303h3v21h-3zM780,262h1v49h-1zM779,267h3v42h-3zM785,256h1v16h-1zM784,257h3v10h-3zM791,227h1v33h-1zM790,233h3v23h-3zM802,216h1v33h-1zM801,222h3v24h-3zM807,188h1v40h-1zM806,192h3v32h-3zM840,223h1v49h-1zM839,230h3v20h-3zM851,244h1v54h-1zM850,246h3v32h-3zM862,245h1v33h-1zM861,249h3v11h-3zM890,288h1v40h-1zM889,292h3v24h-3zM912,320h1v57h-1zM911,329h3v44h-3zM917,286h1v58h-1zM916,295h3v38h-3zM939,311h1v36h-1zM938,317h3v25h-3zM945,288h1v32h-1zM944,295h3v21h-3zM950,284h1v32h-1zM949,292h3v5h-3zM961,320h1v35h-1zM960,325h3v14h-3zM967,299h1v43h-1zM966,307h3v22h-3zM972,276h1v32h-1zM971,284h3v22h-3zM978,247h1v51h-1zM977,251h3v32h-3zM989,232h1v36h-1zM988,236h3v23h-3zM1005,215h1v50h-1zM1004,219h3v38h-3zM1027,254h1v34h-1zM1026,259h3v16h-3zM1038,264h1v37h-1zM1037,266h3v16h-3zM1044,218h1v65h-1zM1043,221h3v49h-3zM1049,184h1v41h-1zM1048,193h3v31h-3zM1055,172h1v36h-1zM1054,191h3v2h-3zM1088,315h1v32h-1zM1087,318h3v10h-3zM1099,294h1v46h-1zM1098,297h3v37h-3zM1110,284h1v47h-1zM1109,290h3v27h-3zM1121,247h1v63h-1zM1120,252h3v55h-3zM1132,221h1v49h-1zM1131,228h3v28h-3zM1137,192h1v41h-1zM1136,197h3v32h-3zM1143,179h1v39h-1zM1142,188h3v14h-3zM1159,167h1v43h-1zM1158,173h3v36h-3zM1170,189h1v37h-1zM1169,194h3v30h-3zM1176,168h1v74h-1zM1175,190h3v50h-3zM1181,132h1v66h-1zM1180,137h3v56h-3zM1187,110h1v45h-1zM1186,131h3v6h-3zM1192,92h1v59h-1zM1191,105h3v35h-3zM1198,59h1v65h-1zM1197,62h3v50h-3zM1214,86h1v38h-1zM1213,100h3v6h-3zM1220,75h1v53h-1zM1219,81h3v25h-3zM1231,96h1v42h-1zM1230,101h3v31h-3zM1258,172h1v39h-1zM1257,177h3v25h-3zM1280,194h1v37h-1zM1279,196h3v24h-3zM1286,162h1v54h-1zM1285,165h3v36h-3zM1302,176h1v43h-1zM1301,182h3v33h-3zM1346,352h1v50h-1zM1345,358h3v33h-3zM1352,333h1v37h-1zM1351,337h3v28h-3zM1363,309h1v44h-1zM1362,334h3v14h-3zM1368,318h1v39h-1zM1367,330h3v9h-3zM1374,278h1v57h-1zM1373,300h3v30h-3zM1396,348h1v35h-1zM1395,355h3v14h-3zM1401,335h1v35h-1zM1400,352h3v3h-3zM1407,292h1v71h-1zM1406,297h3v60h-3zM1429,253h1v97h-1zM1428,256h3v79h-3zM1434,228h1v31h-1zM1433,243h3v12h-3zM1440,216h1v34h-1zM1439,234h3v10h-3zM1451,209h1v61h-1zM1450,212h3v49h-3zM1456,175h1v45h-1zM1455,177h3v39h-3zM1462,143h1v48h-1zM1461,147h3v33h-3zM1473,113h1v50h-1zM1472,136h3v19h-3zM1478,101h1v49h-1zM1477,116h3v24h-3zM1489,73h1v71h-1zM1488,76h3v61h-3zM1517,131h1v46h-1zM1516,138h3v34h-3zM1522,91h1v69h-1zM1521,95h3v61h-3zM1533,102h1v49h-1zM1532,117h3v6h-3zM1539,92h1v43h-1zM1538,97h3v32h-3zM1555,134h1v48h-1zM1554,135h3v32h-3zM1561,132h1v37h-1zM1560,134h3v26h-3zM493,429h3v2h-3zM1400,358h3v4h-3zM1054,196h3v2h-3z" fill="#c82020"/>
<path d="M4,302h1v45h-1zM3,303h3v39h-3zM21,264h1v62h-1zM20,269h3v54h-3zM43,263h1v35h-1zM42,276h3v18h-3zM48,284h1v44h-1zM47,286h3v30h-3zM81,203h1v38h-1zM80,226h3v12h-3zM92,168h1v68h-1zM91,192h3v41h-3zM98,223h1v20h-1zM97,231h3v9h-3zM120,179h1v65h-1zM119,205h3v34h-3zM142,121h1v40h-1zM141,129h3v26h-3zM147,135h1v26h-1zM146,147h3v1h-3zM153,145h1v51h-1zM152,147h3v44h-3zM164,157h1v36h-1zM163,159h3v22h-3zM175,159h1v62h-1zM174,160h3v59h-3zM180,189h1v35h-1zM179,216h3v6h-3zM191,192h1v65h-1zM190,201h3v53h-3zM197,236h1v35h-1zM196,254h3v5h-3zM224,196h1v34h-1zM223,209h3v4h-3zM230,202h1v75h-1zM229,209h3v52h-3zM241,215h1v47h-1zM240,229h3v6h-3zM257,200h1v30h-1zM256,206h3v21h-3zM274,191h1v60h-1zM273,193h3v39h-3zM290,134h1v53h-1zM289,139h3v42h-3zM296,173h1v67h-1zM295,176h3v55h-3zM318,162h1v34h-1zM317,169h3v16h-3zM334,143h1v46h-1zM333,146h3v26h-3zM351,101h1v38h-1zM350,112h3v19h-3zM356,120h1v87h-1zM355,122h3v82h-3zM367,174h1v50h-1zM366,189h3v33h-3zM373,210h1v59h-1zM372,215h3v48h-3zM378,264h1v63h-1zM377,267h3v47h-3zM384,294h1v30h-1zM383,310h3v9h-3zM395,300h1v50h-1zM394,306h3v33h-3zM400,330h1v46h-1zM399,334h3v31h-3zM406,349h1v71h-1zM405,358h3v59h-3zM411,405h1v80h-1zM410,406h3v74h-3zM422,439h1v51h-1zM421,450h3v38h-3zM472,317h1v62h-1zM471,322h3v51h-3zM483,340h1v40h-1zM482,356h3v21h-3zM488,360h1v82h-1zM487,365h3v67h-3zM516,360h1v38h-1zM515,373h3v18h-3zM521,370h1v46h-1zM520,373h3v32h-3zM532,353h1v42h-1zM531,363h3v25h-3zM538,366h1v36h-1zM537,378h3v12h-3zM549,313h1v35h-1zM548,318h3v13h-3zM554,324h1v37h-1zM553,327h3v30h-3zM560,345h1v52h-1zM559,351h3v16h-3zM571,311h1v35h-1zM570,322h3v16h-3zM576,327h1v26h-1zM575,334h3v16h-3zM582,336h1v75h-1zM581,344h3v64h-3zM598,355h1v54h-1zM597,370h3v16h-3zM626,250h1v29h-1zM625,257h3v5h-3zM631,258h1v45h-1zM630,261h3v38h-3zM637,287h1v47h-1zM636,298h3v29h-3zM659,244h1v73h-1zM658,250h3v57h-3zM664,303h1v56h-1zM663,305h3v49h-3zM670,340h1v33h-1zM669,347h3v21h-3zM692,327h1v39h-1zM691,329h3v34h-3zM708,326h1v36h-1zM707,332h3v25h-3zM714,335h1v50h-1zM713,352h3v23h-3zM736,278h1v54h-1zM735,290h3v34h-3zM741,310h1v32h-1zM740,322h3v4h-3zM747,325h1v34h-1zM746,326h3v26h-3zM769,297h1v33h-1zM768,299h3v24h-3zM796,207h1v41h-1zM795,233h3v13h-3zM813,167h1v40h-1zM812,192h3v8h-3zM818,189h1v48h-1zM817,195h3v17h-3zM824,203h1v23h-1zM823,209h3v9h-3zM829,206h1v38h-1zM828,214h3v10h-3zM835,216h1v44h-1zM834,222h3v16h-3zM846,233h1v64h-1zM845,234h3v44h-3zM857,236h1v35h-1zM856,260h3v2h-3zM868,233h1v32h-1zM867,249h3v5h-3zM873,251h1v37h-1zM872,254h3v27h-3zM879,262h1v49h-1zM878,280h3v24h-3zM884,296h1v34h-1zM883,302h3v15h-3zM895,290h1v69h-1zM894,292h3v58h-3zM901,338h1v34h-1zM900,345h3v12h-3zM906,340h1v43h-1zM905,350h3v22h-3zM923,275h1v40h-1zM922,287h3v25h-3zM928,284h1v54h-1zM927,291h3v35h-3zM934,294h1v53h-1zM933,296h3v46h-3zM956,290h1v57h-1zM955,292h3v47h-3zM983,241h1v31h-1zM982,251h3v9h-3zM994,229h1v36h-1zM993,236h3v12h-3zM1000,245h1v32h-1zM999,248h3v9h-3zM1011,215h1v39h-1zM1010,219h3v27h-3zM1016,230h1v30h-1zM1015,246h3v5h-3zM1022,234h1v45h-1zM1021,250h3v24h-3zM1033,258h1v32h-1zM1032,262h3v21h-3zM1060,182h1v37h-1zM1059,191h3v16h-3zM1066,197h1v39h-1zM1065,203h3v7h-3zM1071,197h1v40h-1zM1070,204h3v30h-3zM1077,227h1v77h-1zM1076,237h3v65h-3zM1082,300h1v42h-1zM1081,306h3v22h-3zM1093,313h1v30h-1zM1092,318h3v16h-3zM1104,290h1v42h-1zM1103,297h3v20h-3zM1115,272h1v64h-1zM1114,288h3v19h-3zM1126,232h1v27h-1zM1125,252h3v5h-3zM1148,184h1v44h-1zM1147,188h3v18h-3zM1154,185h1v29h-1zM1153,201h3v7h-3zM1165,163h1v59h-1zM1164,172h3v41h-3zM1203,48h1v55h-1zM1202,62h3v36h-3zM1209,76h1v44h-1zM1208,85h3v31h-3zM1225,79h1v68h-1zM1224,81h3v41h-3zM1236,89h1v44h-1zM1235,100h3v4h-3zM1242,84h1v39h-1zM1241,104h3v6h-3zM1247,109h1v82h-1zM1246,110h3v78h-3zM1253,181h1v42h-1zM1252,183h3v16h-3zM1264,165h1v37h-1zM1263,177h3v20h-3zM1269,191h1v38h-1zM1268,192h3v20h-3zM1275,205h1v31h-1zM1274,207h3v13h-3zM1291,155h1v50h-1zM1290,164h3v31h-3zM1297,188h1v33h-1zM1296,192h3v23h-3zM1308,180h1v71h-1zM1307,181h3v62h-3zM1313,226h1v31h-1zM1312,240h3v10h-3zM1319,238h1v48h-1zM1318,248h3v32h-3zM1324,267h1v29h-1zM1323,278h3v12h-3zM1330,279h1v46h-1zM1329,288h3v26h-3zM1335,306h1v41h-1zM1334,310h3v32h-3zM1341,335h1v62h-1zM1340,337h3v55h-3zM1357,328h1v31h-1zM1356,337h3v11h-3zM1379,293h1v42h-1zM1378,294h3v35h-3zM1385,303h1v33h-1zM1384,304h3v25h-3zM1390,309h1v68h-1zM1389,310h3v59h-3zM1412,286h1v44h-1zM1411,297h3v31h-3zM1418,290h1v42h-1zM1417,300h3v30h-3zM1423,303h1v36h-1zM1422,304h3v31h-3zM1445,233h1v34h-1zM1444,235h3v21h-3zM1467,126h1v39h-1zM1466,147h3v2h-3zM1484,105h1v50h-1zM1483,116h3v26h-3zM1495,71h1v54h-1zM1494,76h3v41h-3zM1500,93h1v39h-1zM1499,106h3v23h-3zM1506,109h1v38h-1zM1505,119h3v4h-3zM1511,107h1v70h-1zM1510,123h3v37h-3zM1528,89h1v43h-1zM1527,95h3v31h-3zM1544,82h1v67h-1zM1543,97h3v38h-3zM1550,129h1v48h-1zM1549,134h3v36h-3zM1566,161h1v3h-1zM1565,161h3v2h-3zM1466,156h3v2h-3z" fill="#00ffff"/>
<rect x="1461" y="177" width="3" height="6" fill="#ff4848"/><rect x="1462" y="178" width="1" height="4" fill="#000"/><rect x="1472" y="149" width="3" height="8" fill="#ff4848"/><rect x="1473" y="150" width="1" height="6" fill="#000"/><rect x="1477" y="136" width="3" height="8" fill="#ff4848"/><rect x="1478" y="137" width="1" height="6" fill="#000"/><rect x="1488" y="132" width="3" height="10" fill="#ff4848"/><rect x="1489" y="133" width="1" height="8" fill="#000"/><rect x="1516" y="168" width="3" height="8" fill="#ff4848"/><rect x="1517" y="169" width="1" height="6" fill="#000"/><rect x="1521" y="153" width="3" height="6" fill="#ff4848"/><rect x="1522" y="154" width="1" height="4" fill="#000"/><rect x="1532" y="142" width="3" height="8" fill="#ff4848"/><rect x="1533" y="143" width="1" height="6" fill="#000"/><rect x="1554" y="163" width="3" height="7" fill="#ff4848"/><rect x="1555" y="164" width="1" height="5" fill="#000"/><rect x="1257" y="196" width="3" height="6" fill="#ff4848"/><rect x="1258" y="197" width="1" height="4" fill="#000"/><rect x="1285" y="196" width="3" height="5" fill="#ff4848"/><rect x="1286" y="197" width="1" height="3" fill="#000"/><rect x="1191" y="130" width="3" height="10" fill="#ff4848"/><rect x="1192" y="131" width="1" height="8" fill="#000"/><rect x="1197" y="105" width="3" height="10" fill="#ff4848"/><rect x="1198" y="106" width="1" height="8" fill="#000"/><rect x="1213" y="113" width="3" height="5" fill="#ff4848"/><rect x="1214" y="114" width="1" height="3" fill="#000"/><rect x="1219" y="100" width="3" height="27" fill="#ff4848"/><rect x="1220" y="101" width="1" height="25" fill="#000"/><rect x="1230" y="128" width="3" height="10" fill="#ff4848"/><rect x="1231" y="129" width="1" height="8" fill="#000"/><rect x="1186" y="141" width="3" height="4" fill="#ff4848"/><rect x="1187" y="142" width="1" height="2" fill="#000"/><rect x="1158" y="203" width="3" height="7" fill="#ff4848"/><rect x="1159" y="204" width="1" height="5" fill="#000"/><rect x="416" y="450" width="3" height="14" fill="#ff4848"/><rect x="417" y="451" width="1" height="12" fill="#000"/><rect x="427" y="453" width="3" height="15" fill="#ff4848"/><rect x="428" y="454" width="1" height="13" fill="#000"/><rect x="432" y="439" width="3" height="13" fill="#ff4848"/><rect x="433" y="440" width="1" height="11" fill="#000"/><rect x="460" y="358" width="3" height="12" fill="#ff4848"/><rect x="461" y="359" width="1" height="10" fill="#000"/><rect x="86" y="235" width="3" height="3" fill="#ff4848"/><rect x="87" y="236" width="1" height="1" fill="#000"/><rect x="113" y="214" width="3" height="3" fill="#ff4848"/><rect x="114" y="215" width="1" height="1" fill="#000"/><rect x="130" y="203" width="3" height="4" fill="#ff4848"/><rect x="131" y="204" width="1" height="2" fill="#000"/><rect x="135" y="140" width="3" height="4" fill="#ff4848"/><rect x="136" y="141" width="1" height="2" fill="#000"/><rect x="157" y="196" width="3" height="6" fill="#ff4848"/><rect x="158" y="197" width="1" height="4" fill="#000"/><rect x="284" y="161" width="3" height="6" fill="#ff4848"/><rect x="285" y="162" width="1" height="4" fill="#000"/><rect x="306" y="215" width="3" height="6" fill="#ff4848"/><rect x="307" y="216" width="1" height="4" fill="#000"/><rect x="328" y="157" width="3" height="8" fill="#ff4848"/><rect x="329" y="158" width="1" height="6" fill="#000"/><rect x="542" y="318" width="3" height="4" fill="#ff4848"/><rect x="543" y="319" width="1" height="2" fill="#000"/><rect x="564" y="322" width="3" height="6" fill="#ff4848"/><rect x="565" y="323" width="1" height="4" fill="#000"/><rect x="603" y="322" width="3" height="6" fill="#ff4848"/><rect x="604" y="323" width="1" height="4" fill="#000"/><rect x="1048" y="221" width="3" height="4" fill="#ff4848"/><rect x="1049" y="222" width="1" height="2" fill="#000"/><rect x="1136" y="226" width="3" height="4" fill="#ff4848"/><rect x="1137" y="227" width="1" height="2" fill="#000"/><rect x="1169" y="220" width="3" height="4" fill="#ff4848"/><rect x="1170" y="221" width="1" height="2" fill="#000"/><rect x="960" y="325" width="3" height="7" fill="#ff4848"/><rect x="961" y="326" width="1" height="5" fill="#000"/><rect x="1345" y="358" width="3" height="8" fill="#ff4848"/><rect x="1346" y="359" width="1" height="6" fill="#000"/>
<line x1="1174.5" y1="69.5" x2="1202.5" y2="63.5" stroke="#c0c0c0" stroke-width="1" shape-rendering="auto"/>
<line x1="430.5" y1="484.5" x2="458.5" y2="479.5" stroke="#c0c0c0" stroke-width="1" shape-rendering="auto"/>
<text x="1145.5" y="82" font-family="'Liberation Serif',serif" font-size="13" fill="#d0d0d0" textLength="27" lengthAdjust="spacingAndGlyphs" shape-rendering="auto">1661</text>
<text x="458.5" y="475" font-family="'Liberation Serif',serif" font-size="13" fill="#d0d0d0" textLength="27" lengthAdjust="spacingAndGlyphs" shape-rendering="auto">1215</text>
<rect x="1437" y="485" width="133" height="40" fill="url(#bg)"/>
<text x="1444" y="503.5" font-family="'Liberation Sans','Noto Sans CJK SC',sans-serif" font-size="13.4" font-weight="bold" fill="#ffff00" textLength="40" lengthAdjust="spacingAndGlyphs">股道边</text>
<text x="1487" y="502" font-family="'Liberation Sans','Noto Sans CJK SC',sans-serif" font-size="9.8" font-weight="bold" fill="#ffb400" textLength="78.5" lengthAdjust="spacingAndGlyphs">指标公式量化资源</text>
<text x="1444" y="517.2" font-family="'Liberation Sans','Noto Sans CJK SC',sans-serif" font-size="14.6" font-weight="bold" fill="#fff" textLength="122" lengthAdjust="spacingAndGlyphs">www.de6688.com</text>
<rect x="4" y="613" width="1563" height="1" fill="#f0f000"/>
<rect x="4" y="772" width="1563" height="1" fill="#f40000"/>
<path d="M3,702h3v1h-3zM4,701h1v3h-1zM9,702h3v1h-3zM10,701h1v3h-1zM14,702h3v1h-3zM15,701h1v3h-1zM20,702h3v1h-3zM21,701h1v3h-1zM25,702h3v1h-3zM26,701h1v3h-1zM31,702h3v1h-3zM32,701h1v3h-1zM36,702h3v1h-3zM37,701h1v3h-1zM42,702h3v1h-3zM43,701h1v3h-1zM47,702h3v1h-3zM48,701h1v3h-1zM53,702h3v1h-3zM54,701h1v3h-1zM58,702h3v1h-3zM59,701h1v3h-1zM64,702h3v1h-3zM65,701h1v3h-1zM69,702h3v1h-3zM70,701h1v3h-1zM75,702h3v1h-3zM76,701h1v3h-1zM80,702h3v1h-3zM81,701h1v3h-1zM86,702h3v1h-3zM87,701h1v3h-1zM91,702h3v1h-3zM92,701h1v3h-1zM97,702h3v1h-3zM98,701h1v3h-1zM102,702h3v1h-3zM103,701h1v3h-1zM108,702h3v1h-3zM109,701h1v3h-1zM113,702h3v1h-3zM114,701h1v3h-1zM119,702h3v1h-3zM120,701h1v3h-1zM124,702h3v1h-3zM125,701h1v3h-1zM130,702h3v1h-3zM131,701h1v3h-1zM135,702h3v1h-3zM136,701h1v3h-1zM141,702h3v1h-3zM142,701h1v3h-1zM146,702h3v1h-3zM147,701h1v3h-1zM152,702h3v1h-3zM153,701h1v3h-1zM157,702h3v1h-3zM158,701h1v3h-1zM163,702h3v1h-3zM164,701h1v3h-1zM168,702h3v1h-3zM169,701h1v3h-1zM174,702h3v1h-3zM175,701h1v3h-1zM179,702h3v1h-3zM180,701h1v3h-1zM185,702h3v1h-3zM186,701h1v3h-1zM190,702h3v1h-3zM191,701h1v3h-1zM196,702h3v1h-3zM197,701h1v3h-1zM201,702h3v1h-3zM202,701h1v3h-1zM207,702h3v1h-3zM208,701h1v3h-1zM212,702h3v1h-3zM213,701h1v3h-1zM218,702h3v1h-3zM219,701h1v3h-1zM223,702h3v1h-3zM224,701h1v3h-1zM229,702h3v1h-3zM230,701h1v3h-1zM234,702h3v1h-3zM235,701h1v3h-1zM240,702h3v1h-3zM241,701h1v3h-1zM245,702h3v1h-3zM246,701h1v3h-1zM251,702h3v1h-3zM252,701h1v3h-1zM256,702h3v1h-3zM257,701h1v3h-1zM262,702h3v1h-3zM263,701h1v3h-1zM267,702h3v1h-3zM268,701h1v3h-1zM273,702h3v1h-3zM274,701h1v3h-1zM278,702h3v1h-3zM279,701h1v3h-1zM284,702h3v1h-3zM285,701h1v3h-1zM289,702h3v1h-3zM290,701h1v3h-1zM295,702h3v1h-3zM296,701h1v3h-1zM300,702h3v1h-3zM301,701h1v3h-1zM306,702h3v1h-3zM307,701h1v3h-1zM311,702h3v1h-3zM312,701h1v3h-1zM317,702h3v1h-3zM318,701h1v3h-1zM322,702h3v1h-3zM323,701h1v3h-1zM328,702h3v1h-3zM329,701h1v3h-1zM333,702h3v1h-3zM334,701h1v3h-1zM339,702h3v1h-3zM340,701h1v3h-1zM344,702h3v1h-3zM345,701h1v3h-1zM350,702h3v1h-3zM351,701h1v3h-1zM355,702h3v1h-3zM356,701h1v3h-1zM361,702h3v1h-3zM362,701h1v3h-1zM366,702h3v1h-3zM367,701h1v3h-1zM372,702h3v1h-3zM373,701h1v3h-1zM377,702h3v1h-3zM378,701h1v3h-1zM383,702h3v1h-3zM384,701h1v3h-1zM388,702h3v1h-3zM389,701h1v3h-1zM394,702h3v1h-3zM395,701h1v3h-1zM399,702h3v1h-3zM400,701h1v3h-1zM405,702h3v1h-3zM406,701h1v3h-1zM410,702h3v1h-3zM411,701h1v3h-1zM416,702h3v1h-3zM417,701h1v3h-1zM421,702h3v1h-3zM422,701h1v3h-1zM427,702h3v1h-3zM428,701h1v3h-1zM432,702h3v1h-3zM433,701h1v3h-1zM438,702h3v1h-3zM439,701h1v3h-1zM443,702h3v1h-3zM444,701h1v3h-1zM449,702h3v1h-3zM450,701h1v3h-1zM454,702h3v1h-3zM455,701h1v3h-1zM460,702h3v1h-3zM461,701h1v3h-1zM465,702h3v1h-3zM466,701h1v3h-1zM471,702h3v1h-3zM472,701h1v3h-1zM476,702h3v1h-3zM477,701h1v3h-1zM482,702h3v1h-3zM483,701h1v3h-1zM487,702h3v1h-3zM488,701h1v3h-1zM493,702h3v1h-3zM494,701h1v3h-1zM498,702h3v1h-3zM499,701h1v3h-1zM504,702h3v1h-3zM505,701h1v3h-1zM509,702h3v1h-3zM510,701h1v3h-1zM515,702h3v1h-3zM516,701h1v3h-1zM520,702h3v1h-3zM521,701h1v3h-1zM526,702h3v1h-3zM527,701h1v3h-1zM531,702h3v1h-3zM532,701h1v3h-1zM537,702h3v1h-3zM538,701h1v3h-1zM542,702h3v1h-3zM543,701h1v3h-1zM548,702h3v1h-3zM549,701h1v3h-1zM553,702h3v1h-3zM554,701h1v3h-1zM559,702h3v1h-3zM560,701h1v3h-1zM564,702h3v1h-3zM565,701h1v3h-1zM570,702h3v1h-3zM571,701h1v3h-1zM575,702h3v1h-3zM576,701h1v3h-1zM581,702h3v1h-3zM582,701h1v3h-1zM586,702h3v1h-3zM587,701h1v3h-1zM592,702h3v1h-3zM593,701h1v3h-1zM597,702h3v1h-3zM598,701h1v3h-1zM603,702h3v1h-3zM604,701h1v3h-1zM608,702h3v1h-3zM609,701h1v3h-1zM614,702h3v1h-3zM615,701h1v3h-1zM619,702h3v1h-3zM620,701h1v3h-1zM625,702h3v1h-3zM626,701h1v3h-1zM630,702h3v1h-3zM631,701h1v3h-1zM636,702h3v1h-3zM637,701h1v3h-1zM641,702h3v1h-3zM642,701h1v3h-1zM647,702h3v1h-3zM648,701h1v3h-1zM652,702h3v1h-3zM653,701h1v3h-1zM658,702h3v1h-3zM659,701h1v3h-1zM663,702h3v1h-3zM664,701h1v3h-1zM669,702h3v1h-3zM670,701h1v3h-1zM674,702h3v1h-3zM675,701h1v3h-1zM680,702h3v1h-3zM681,701h1v3h-1zM685,702h3v1h-3zM686,701h1v3h-1zM691,702h3v1h-3zM692,701h1v3h-1zM696,702h3v1h-3zM697,701h1v3h-1zM702,702h3v1h-3zM703,701h1v3h-1zM707,702h3v1h-3zM708,701h1v3h-1zM713,702h3v1h-3zM714,701h1v3h-1zM718,702h3v1h-3zM719,701h1v3h-1zM724,702h3v1h-3zM725,701h1v3h-1zM729,702h3v1h-3zM730,701h1v3h-1zM735,702h3v1h-3zM736,701h1v3h-1zM740,702h3v1h-3zM741,701h1v3h-1zM746,702h3v1h-3zM747,701h1v3h-1zM751,702h3v1h-3zM752,701h1v3h-1zM757,702h3v1h-3zM758,701h1v3h-1zM762,702h3v1h-3zM763,701h1v3h-1zM768,702h3v1h-3zM769,701h1v3h-1zM773,702h3v1h-3zM774,701h1v3h-1zM779,702h3v1h-3zM780,701h1v3h-1zM784,702h3v1h-3zM785,701h1v3h-1zM790,702h3v1h-3zM791,701h1v3h-1zM795,702h3v1h-3zM796,701h1v3h-1zM801,702h3v1h-3zM802,701h1v3h-1zM806,702h3v1h-3zM807,701h1v3h-1zM812,702h3v1h-3zM813,701h1v3h-1zM817,702h3v1h-3zM818,701h1v3h-1zM823,702h3v1h-3zM824,701h1v3h-1zM828,702h3v1h-3zM829,701h1v3h-1zM834,702h3v1h-3zM835,701h1v3h-1zM839,702h3v1h-3zM840,701h1v3h-1zM845,702h3v1h-3zM846,701h1v3h-1zM850,702h3v1h-3zM851,701h1v3h-1zM856,702h3v1h-3zM857,701h1v3h-1zM861,702h3v1h-3zM862,701h1v3h-1zM867,702h3v1h-3zM868,701h1v3h-1zM872,702h3v1h-3zM873,701h1v3h-1zM878,702h3v1h-3zM879,701h1v3h-1zM883,702h3v1h-3zM884,701h1v3h-1zM889,702h3v1h-3zM890,701h1v3h-1zM894,702h3v1h-3zM895,701h1v3h-1zM900,702h3v1h-3zM901,701h1v3h-1zM905,702h3v1h-3zM906,701h1v3h-1zM911,702h3v1h-3zM912,701h1v3h-1zM916,702h3v1h-3zM917,701h1v3h-1zM922,702h3v1h-3zM923,701h1v3h-1zM927,702h3v1h-3zM928,701h1v3h-1zM933,702h3v1h-3zM934,701h1v3h-1zM938,702h3v1h-3zM939,701h1v3h-1zM944,702h3v1h-3zM945,701h1v3h-1zM949,702h3v1h-3zM950,701h1v3h-1zM955,702h3v1h-3zM956,701h1v3h-1zM960,702h3v1h-3zM961,701h1v3h-1zM966,702h3v1h-3zM967,701h1v3h-1zM971,702h3v1h-3zM972,701h1v3h-1zM977,702h3v1h-3zM978,701h1v3h-1zM982,702h3v1h-3zM983,701h1v3h-1zM988,702h3v1h-3zM989,701h1v3h-1zM993,702h3v1h-3zM994,701h1v3h-1zM999,702h3v1h-3zM1000,701h1v3h-1zM1004,702h3v1h-3zM1005,701h1v3h-1zM1010,702h3v1h-3zM1011,701h1v3h-1zM1015,702h3v1h-3zM1016,701h1v3h-1zM1021,702h3v1h-3zM1022,701h1v3h-1zM1026,702h3v1h-3zM1027,701h1v3h-1zM1032,702h3v1h-3zM1033,701h1v3h-1zM1037,702h3v1h-3zM1038,701h1v3h-1zM1043,702h3v1h-3zM1044,701h1v3h-1zM1048,702h3v1h-3zM1049,701h1v3h-1zM1054,702h3v1h-3zM1055,701h1v3h-1zM1059,702h3v1h-3zM1060,701h1v3h-1zM1065,702h3v1h-3zM1066,701h1v3h-1zM1070,702h3v1h-3zM1071,701h1v3h-1zM1076,702h3v1h-3zM1077,701h1v3h-1zM1081,702h3v1h-3zM1082,701h1v3h-1zM1087,702h3v1h-3zM1088,701h1v3h-1zM1092,702h3v1h-3zM1093,701h1v3h-1zM1098,702h3v1h-3zM1099,701h1v3h-1zM1103,702h3v1h-3zM1104,701h1v3h-1zM1109,702h3v1h-3zM1110,701h1v3h-1zM1114,702h3v1h-3zM1115,701h1v3h-1zM1120,702h3v1h-3zM1121,701h1v3h-1zM1125,702h3v1h-3zM1126,701h1v3h-1zM1131,702h3v1h-3zM1132,701h1v3h-1zM1136,702h3v1h-3zM1137,701h1v3h-1zM1142,702h3v1h-3zM1143,701h1v3h-1zM1147,702h3v1h-3zM1148,701h1v3h-1zM1153,702h3v1h-3zM1154,701h1v3h-1zM1158,702h3v1h-3zM1159,701h1v3h-1zM1164,702h3v1h-3zM1165,701h1v3h-1zM1169,702h3v1h-3zM1170,701h1v3h-1zM1175,702h3v1h-3zM1176,701h1v3h-1zM1180,702h3v1h-3zM1181,701h1v3h-1zM1186,702h3v1h-3zM1187,701h1v3h-1zM1191,702h3v1h-3zM1192,701h1v3h-1zM1197,702h3v1h-3zM1198,701h1v3h-1zM1202,702h3v1h-3zM1203,701h1v3h-1zM1208,702h3v1h-3zM1209,701h1v3h-1zM1213,702h3v1h-3zM1214,701h1v3h-1zM1219,702h3v1h-3zM1220,701h1v3h-1zM1224,702h3v1h-3zM1225,701h1v3h-1zM1230,702h3v1h-3zM1231,701h1v3h-1zM1235,702h3v1h-3zM1236,701h1v3h-1zM1241,702h3v1h-3zM1242,701h1v3h-1zM1246,702h3v1h-3zM1247,701h1v3h-1zM1252,702h3v1h-3zM1253,701h1v3h-1zM1257,702h3v1h-3zM1258,701h1v3h-1zM1263,702h3v1h-3zM1264,701h1v3h-1zM1268,702h3v1h-3zM1269,701h1v3h-1zM1274,702h3v1h-3zM1275,701h1v3h-1zM1279,702h3v1h-3zM1280,701h1v3h-1zM1285,702h3v1h-3zM1286,701h1v3h-1zM1290,702h3v1h-3zM1291,701h1v3h-1zM1296,702h3v1h-3zM1297,701h1v3h-1zM1301,702h3v1h-3zM1302,701h1v3h-1zM1307,702h3v1h-3zM1308,701h1v3h-1zM1312,702h3v1h-3zM1313,701h1v3h-1zM1318,702h3v1h-3zM1319,701h1v3h-1zM1323,702h3v1h-3zM1324,701h1v3h-1zM1329,702h3v1h-3zM1330,701h1v3h-1zM1334,702h3v1h-3zM1335,701h1v3h-1zM1340,702h3v1h-3zM1341,701h1v3h-1zM1345,702h3v1h-3zM1346,701h1v3h-1zM1351,702h3v1h-3zM1352,701h1v3h-1zM1356,702h3v1h-3zM1357,701h1v3h-1zM1362,702h3v1h-3zM1363,701h1v3h-1zM1367,702h3v1h-3zM1368,701h1v3h-1zM1373,702h3v1h-3zM1374,701h1v3h-1zM1378,702h3v1h-3zM1379,701h1v3h-1zM1384,702h3v1h-3zM1385,701h1v3h-1zM1389,702h3v1h-3zM1390,701h1v3h-1zM1395,702h3v1h-3zM1396,701h1v3h-1zM1400,702h3v1h-3zM1401,701h1v3h-1zM1406,702h3v1h-3zM1407,701h1v3h-1zM1411,702h3v1h-3zM1412,701h1v3h-1zM1417,702h3v1h-3zM1418,701h1v3h-1zM1422,702h3v1h-3zM1423,701h1v3h-1zM1428,702h3v1h-3zM1429,701h1v3h-1zM1433,702h3v1h-3zM1434,701h1v3h-1zM1439,702h3v1h-3zM1440,701h1v3h-1zM1444,702h3v1h-3zM1445,701h1v3h-1zM1450,702h3v1h-3zM1451,701h1v3h-1zM1455,702h3v1h-3zM1456,701h1v3h-1zM1461,702h3v1h-3zM1462,701h1v3h-1zM1466,702h3v1h-3zM1467,701h1v3h-1zM1472,702h3v1h-3zM1473,701h1v3h-1zM1477,702h3v1h-3zM1478,701h1v3h-1zM1483,702h3v1h-3zM1484,701h1v3h-1zM1488,702h3v1h-3zM1489,701h1v3h-1zM1494,702h3v1h-3zM1495,701h1v3h-1zM1499,702h3v1h-3zM1500,701h1v3h-1zM1505,702h3v1h-3zM1506,701h1v3h-1zM1510,702h3v1h-3zM1511,701h1v3h-1zM1516,702h3v1h-3zM1517,701h1v3h-1zM1521,702h3v1h-3zM1522,701h1v3h-1zM1527,702h3v1h-3zM1528,701h1v3h-1zM1532,702h3v1h-3zM1533,701h1v3h-1zM1538,702h3v1h-3zM1539,701h1v3h-1zM1543,702h3v1h-3zM1544,701h1v3h-1zM1549,702h3v1h-3zM1550,701h1v3h-1zM1554,702h3v1h-3zM1555,701h1v3h-1zM1560,702h3v1h-3zM1561,701h1v3h-1zM1565,702h3v1h-3zM1566,701h1v3h-1z" fill="#fff"/>
<path d="M4.5,712v1m1,-1v1m1,-1v1m1,-1v1m1,-1v1m1,-1v1m1,-1v1m1,-1v1m1,-1v1m1,-1v1m1,-1v1m1,-2v1m1,-1v1m1,-1v1m1,-1v1m1,-1v1m1,-1v1m1,-1v1m1,-1v1m1,-1v1m1,-1v1m1,-1v1m1,-1v1m1,-1v1m1,-1v1m1,-1v1m1,-1v1m1,-1v1m1,-1v1m1,-1v1m1,-1v1m1,-1v1m1,-1v1m1,-1v1m1,-1v1m1,-1v1m1,-1v1m1,-1v1m1,-1v1m1,-1v1m1,-1v1m1,-1v1m1,-1v1m1,-1v1m1,-1v1m1,-1v1m1,-1v1m1,-1v1m1,-1v1m1,-1v1m1,-1v1m1,-2v1m1,-1v1m1,-1v1m1,-1v1m1,-1v1m1,-1v1m1,-1v1m1,-1v1m1,-1v1m1,-1v1m1,-1v1m1,-1v1m1,-1v1m1,-2v1m1,-1v1m1,-1v1m1,-1v1m1,-2v1m1,-1v1m1,-1v1m1,-2v1m1,-1v1m1,-1v1m1,-1v1m1,-2v1m1,-1v1m1,-1v1m1,-2v1m1,-1v1m1,-1v1m1,-1v1m1,-2v1m1,-1v1m1,-1v1m1,-2v1m1,-1v1m1,-1v1m1,-1v1m1,-2v1m1,-1v1m1,-1v1m1,-1v1m1,-1v1m1,-1v1m1,-1v1m1,-1v1m1,-1v1m1,-2v1m1,-1v1m1,-1v1m1,-1v1m1,-1v1m1,-1v1m1,-1v1m1,-1v1m1,-1v1m1,-1v1m1,-1v1m1,-1v1m1,-1v1m1,-2v1m1,-1v1m1,-1v1m1,-1v1m1,-1v1m1,-1v1m1,-1v1m1,-1v1m1,-1v1m1,-1v1m1,-2v1m1,-1v1m1,-1v1m1,-1v1m1,-1v1m1,-1v1m1,-1v1m1,-1v1m1,-2v1m1,-1v1m1,-1v1m1,-1v1m1,-2v1m1,-1v1m1,-1v1m1,-1v1m1,-2v1m1,-1v1m1,-1v1m1,-1v1m1,-2v1m1,-1v1m1,-1v1m1,-1v1m1,-1v1m1,-1v1m1,-1v1m1,-1v1m1,-1v1m1,-1v1m1,-1v1m1,-2v1m1,-1v1m1,-1v1m1,-1v1m1,-1v1m1,-1v1m1,-1v1m1,-1v1m1,-1v1m1,-1v1m1,-1v1m1,-1v1m1,-1v1m1,-1v1m1,0v1m1,-1v1m1,-1v1m1,-1v1m1,-1v1m1,-1v1m1,-1v1m1,-1v1m1,0v1m1,-1v1m1,-1v1m1,-1v1m1,-1v1m1,0v1m1,-1v1m1,-1v1m1,-1v1m1,-1v1m1,0v1m1,-1v1m1,-1v1m1,-1v1m1,0v1m1,-1v1m1,-1v1m1,0v1m1,-1v1m1,-1v1m1,-1v1m1,0v1m1,-1v1m1,-1v1m1,0v1m1,-1v1m1,-1v1m1,-1v1m1,-1v1m1,-1v1m1,-1v1m1,-1v1m1,-1v1m1,0v1m1,-1v1m1,-1v1m1,-1v1m1,-1v1m1,-1v1m1,-1v1m1,-1v1m1,-1v1m1,-1v1m1,-1v1m1,-1v1m1,-1v1m1,-1v1m1,0v1m1,-1v1m1,-1v1m1,-1v1m1,-1v1m1,-1v1m1,-1v1m1,-1v1m1,-1v1m1,-1v1m1,-1v1m1,-1v1m1,-1v1m1,-1v1m1,-1v1m1,-1v1m1,-1v1m1,-1v1m1,-1v1m1,-1v1m1,-1v1m1,-1v1m1,-1v1m1,-1v1m1,-1v1m1,-2v1m1,-1v1m1,-1v1m1,-1v1m1,-1v1m1,-1v1m1,-1v1m1,-2v1m1,-1v1m1,-1v1m1,-1v1m1,-1v1m1,-1v1m1,-1v1m1,-2v1m1,-1v1m1,-1v1m1,-1v1m1,-1v1m1,-1v1m1,-1v1m1,-1v1m1,-2v1m1,-1v1m1,-1v1m1,-1v1m1,-1v1m1,-2v1m1,-1v1m1,-1v1m1,-1v1m1,-2v1m1,-1v1m1,-1v1m1,-1v1m1,-2v1m1,-1v1m1,-1v1m1,-1v1m1,-2v1m1,-1v1m1,-1v1m1,-1v1m1,-1v1m1,-1v1m1,-2v1m1,-1v1m1,-1v1m1,-1v1m1,-1v1m1,-1v1m1,-1v1m1,-1v1m1,-2v1m1,-1v1m1,-1v1m1,-1v1m1,-1v1m1,-1v1m1,-1v1m1,-1v1m1,-1v1m1,-1v1m1,-2v1m1,-1v1m1,-1v1m1,-1v1m1,-1v1m1,-1v1m1,-1v1m1,-1v1m1,-2v1m1,-1v1m1,-1v1m1,-1v1m1,-1v1m1,-1v1m1,-2v1m1,-1v1m1,-1v1m1,-1v1m1,-1v1m1,-1v1m1,-2v1m1,-1v1m1,-1v1m1,-1v1m1,-1v1m1,-2v1m1,-1v1m1,-1v1m1,-1v1m1,-1v1m1,-2v1m1,-1v1m1,-1v1m1,-1v1m1,-1v1m1,-2v1m1,-1v1m1,-1v1m1,-1v1m1,-1v1m1,-1v1m1,-1v1m1,-2v1m1,-1v1m1,-1v1m1,-1v1m1,-1v1m1,-1v1m1,-1v1m1,-1v1m1,-1v1m1,-1v1m1,0v1m1,-1v1m1,-1v1m1,-1v1m1,-1v1m1,-1v1m1,-1v1m1,-1v1m1,0v1m1,-1v1m1,-1v1m1,-1v1m1,-1v1m1,0v1m1,-1v1m1,-1v1m1,-1v1m1,0v1m1,-1v1m1,-1v1m1,-1v1m1,0v1m1,-1v1m1,0v1m1,-1v1m1,0v1m1,-1v1m1,-1v1m1,0v1m1,-1v1m1,0v1m1,-1v1m1,-1v1m1,0v1m1,-1v1m1,0v1m1,-1v1m1,0v1m1,-1v1m1,0v1m1,-1v1m1,0v1m1,-1v1m1,0v1m1,-1v1m1,0v1m1,-1v1m1,0v1m1,-1v1m1,0v1m1,-1v1m1,0v1m1,-1v1m1,0v1m1,-1v1m1,0v1m1,-1v1m1,0v1m1,-1v1m1,0v1m1,-1v1m1,0v1m1,-1v1m1,0v1m1,-1v1m1,0v1m1,-1v1m1,0v1m1,-1v1m1,0v1m1,-1v1m1,-1v1m1,-1v1m1,-1v1m1,0v1m1,-1v1m1,-1v1m1,-1v1m1,-1v1m1,-1v1m1,-1v1m1,-1v1m1,-1v1m1,-1v1m1,-2v1m1,-1v1m1,-1v1m1,-1v1m1,-1v1m1,-1v1m1,-1v1m1,-1v1m1,-2v1m1,-1v1m1,-1v1m1,-1v1m1,-2v1m1,-1v1m1,-1v1m1,-1v1m1,-2v1m1,-1v1m1,-1v1m1,-1v1m1,-2v1m1,-1v1m1,-1v1m1,-1v1m1,-1v1m1,-1v1m1,-2v1m1,-1v1m1,-1v1m1,-1v1m1,-1v1m1,-1v1m1,-1v1m1,-1v1m1,-1v1m1,-1v1m1,-1v1m1,-1v1m1,-1v1m1,-1v1m1,-1v1m1,-1v1m1,-1v1m1,-1v1m1,-1v1m1,-1v1m1,-1v1m1,-1v1m1,-1v1m1,-1v1m1,-1v1m1,0v1m1,-1v1m1,-1v1m1,-1v1m1,-1v1m1,-1v1m1,-1v1m1,-1v1m1,-1v1m1,-1v1m1,-1v1m1,-1v1m1,-1v1m1,-1v1m1,-2v1m1,-1v1m1,-1v1m1,-1v1m1,-1v1m1,-1v1m1,-1v1m1,-1v1m1,-1v1m1,-1v1m1,-1v1m1,-1v1m1,-1v1m1,-1v1m1,-1v1m1,-1v1m1,-2v1m1,-1v1m1,-1v1m1,-1v1m1,-1v1m1,-1v1m1,-1v1m1,-1v1m1,-1v1m1,-1v1m1,-1v1m1,-1v1m1,-2v1m1,-1v1m1,-1v1m1,-1v1m1,-1v1m1,-2v1m1,-1v1m1,-1v1m1,-1v1m1,-1v1m1,-1v1m1,-2v1m1,-1v1m1,-1v1m1,-1v1m1,-1v1m1,-2v1m1,-1v1m1,-1v1m1,-1v1m1,-1v1m1,-2v1m1,-1v1m1,-1v1m1,-1v1m1,-1v1m1,-1v1m1,-2v1m1,-1v1m1,-1v1m1,-1v1m1,-1v1m1,-1v1m1,-2v1m1,-1v1m1,-1v1m1,-1v1m1,-1v1m1,-1v1m1,-1v1m1,-2v1m1,-1v1m1,-1v1m1,-1v1m1,-1v1m1,-1v1m1,-1v1m1,0v1m1,-1v1m1,-1v1m1,-1v1m1,-1v1m1,-1v1m1,-1v1m1,0v1m1,-1v1m1,-1v1m1,-1v1m1,-1v1m1,-1v1m1,-2v1m1,-1v1m1,-1v1m1,-1v1m1,-1v1m1,-2v1m1,-1v1m1,-1v1m1,-1v1m1,-1v1m1,-1v1m1,-2v1m1,-1v1m1,-1v1m1,-1v1m1,-2v1m1,-1v1m1,-1v1m1,-2v1m1,-1v1m1,-1v1m1,-2v1m1,-1v1m1,-1v1m1,-1v1m1,-2v1m1,-1v1m1,-1v1m1,-2v1m1,-1v1m1,-1v1m1,-1v1m1,-1v1m1,-1v1m1,-1v1m1,-1v1m1,-2v1m1,-1v1m1,-1v1m1,-1v1m1,-1v1m1,-1v1m1,-1v1m1,-1v1m1,-1v1m1,-1v1m1,-1v1m1,-1v1m1,-1v1m1,-1v1m1,-2v1m1,-1v1m1,-1v1m1,-1v1m1,-1v1m1,-1v1m1,-1v1m1,-1v1m1,-1v1m1,-1v1m1,0v1m1,-1v1m1,-1v1m1,-1v1m1,-1v1m1,-1v1m1,0v1m1,-1v1m1,-1v1m1,-1v1m1,-1v1m1,0v1m1,-1v1m1,-1v1m1,-1v1m1,-1v1m1,-1v1m1,0v1m1,-1v1m1,-1v1m1,-1v1m1,-1v1m1,-1v1m1,0v1m1,-1v1m1,-1v1m1,-1v1m1,-1v1m1,-1v1m1,0v1m1,-1v1m1,-1v1m1,-1v1m1,-1v1m1,-1v1m1,0v1m1,-1v1m1,-1v1m1,-1v1m1,-1v1m1,0v1m1,-1v1m1,-1v1m1,-1v1m1,-1v1m1,0v1m1,-1v1m1,-1v1m1,-1v1m1,-1v1m1,-1v1m1,0v1m1,-1v1m1,-1v1m1,-1v1m1,-1v1m1,-1v1m1,-1v1m1,-1v1m1,-1v1m1,-1v1m1,-1v1m1,-1v1m1,-1v1m1,-1v1m1,-1v1m1,-1v1m1,-1v1m1,-1v1m1,-1v1m1,-1v1m1,-1v1m1,-1v1m1,-1v1m1,-1v1m1,-1v1m1,-1v1m1,-1v1m1,-1v1m1,-1v1m1,-1v1m1,-1v1m1,-1v1m1,-1v1m1,-1v1m1,-1v1m1,-1v1m1,-1v1m1,-1v1m1,-1v1m1,-1v1m1,-1v1m1,-1v1m1,-1v1m1,-1v1m1,-1v1m1,-1v1m1,-1v1m1,-1v1m1,-1v1m1,-1v1m1,-1v1m1,-1v1m1,-1v1m1,-1v1m1,-1v1m1,-1v1m1,-1v1m1,-2v1m1,-1v1m1,-1v1m1,-1v1m1,-2v1m1,-1v1m1,-1v1m1,-1v1m1,-2v1m1,-1v1m1,-1v1m1,-1v1m1,-2v1m1,-1v1m1,-1v1m1,-2v1m1,-1v1m1,-1v1m1,-1v1m1,-2v1m1,-1v1m1,-1v1m1,-2v1m1,-1v1m1,-1v1m1,-2v1m1,-1v1m1,-1v1m1,-1v1m1,-2v1m1,-1v1m1,-1v1m1,-1v1m1,-2v1m1,-1v1m1,-1v1m1,-1v1m1,-1v1m1,-2v1m1,-1v1m1,-1v1m1,-1v1m1,-2v1m1,-1v1m1,-1v1m1,-1v1m1,-2v1m1,-1v1m1,-1v1m1,-1v1m1,-1v1m1,-2v1m1,-1v1m1,-1v1m1,-1v1m1,-1v1m1,-1v1m1,-2v1m1,-1v1m1,-1v1m1,-1v1m1,-1v1m1,-1v1m1,-1v1m1,-1v1m1,-1v1m1,-1v1m1,-1v1m1,-1v1m1,-1v1m1,-1v1m1,-1v1m1,-1v1m1,0v1m1,-1v1m1,-1v1m1,-1v1m1,-1v1m1,-1v1m1,0v1m1,-1v1m1,-1v1m1,-1v1m1,-1v1m1,-1v1m1,-1v1m1,-1v1m1,-1v1m1,0v1m1,-1v1m1,-1v1m1,-1v1m1,-1v1m1,-1v1m1,-1v1m1,-1v1m1,-1v1m1,0v1m1,-1v1m1,-1v1m1,-1v1m1,-1v1m1,-1v1m1,-1v1m1,-1v1m1,0v1m1,-1v1m1,-1v1m1,-1v1m1,-1v1m1,0v1m1,-1v1m1,-1v1m1,-1v1m1,0v1m1,-1v1m1,-1v1m1,-1v1m1,0v1m1,-1v1m1,-1v1m1,-1v1m1,0v1m1,-1v1m1,-1v1m1,0v1m1,-1v1m1,-1v1m1,0v1m1,-1v1m1,-1v1m1,0v1m1,-1v1m1,-1v1m1,0v1m1,-1v1m1,-1v1m1,-1v1m1,0v1m1,-1v1m1,-1v1m1,-1v1m1,0v1m1,-1v1m1,-1v1m1,-1v1m1,0v1m1,-1v1m1,-1v1m1,-1v1m1,-1v1m1,0v1m1,-1v1m1,-1v1m1,-1v1m1,-1v1m1,-1v1m1,-1v1m1,-1v1m1,-1v1m1,-1v1m1,-1v1m1,-1v1m1,-1v1m1,-1v1m1,-1v1m1,-1v1m1,-1v1m1,-1v1m1,-1v1m1,0v1m1,-1v1m1,-1v1m1,-1v1m1,-1v1m1,-1v1m1,-1v1m1,-1v1m1,-1v1m1,-1v1m1,-1v1m1,-1v1m1,-1v1m1,-1v1m1,-1v1m1,-1v1m1,-1v1m1,-1v1m1,-1v1m1,-1v1m1,-1v1m1,-1v1m1,-1v1m1,-1v1m1,-1v1m1,-1v1m1,-1v1m1,-2v1m1,-1v1m1,-1v1m1,-1v1m1,-1v1m1,-1v1m1,-1v1m1,-1v1m1,-2v1m1,-1v1m1,-1v1m1,-1v1m1,-1v1m1,-1v1m1,-2v1m1,-1v1m1,-1v1m1,-1v1m1,-1v1m1,-2v1m1,-1v1m1,-1v1m1,-2v1m1,-1v1m1,-2v1m1,-1v1m1,-1v1m1,-2v1m1,-1v1m1,-1v1m1,-2v1m1,-1v1m1,-1v1m1,-2v1m1,-1v1m1,-1v1m1,-1v1m1,-2v1m1,-1v1m1,-1v1m1,-1v1m1,-2v1m1,-1v1m1,-1v1m1,-1v1m1,-1v1m1,-2v1m1,-1v1m1,-1v1m1,-1v1m1,-1v1m1,-1v1m1,-1v1m1,-1v1m1,-1v1m1,-2v1m1,-1v1m1,-1v1m1,-1v1m1,-1v1m1,-1v1m1,-1v1m1,-1v1m1,-1v1m1,-1v1m1,-1v1m1,-1v1m1,-1v1m1,-1v1m1,0v1m1,-1v1m1,-1v1m1,-1v1m1,-1v1m1,-1v1m1,-1v1m1,-1v1m1,-1v1m1,-1v1m1,-1v1m1,-1v1m1,-1v1m1,-2v1m1,-1v1m1,-1v1m1,-1v1m1,-1v1m1,-1v1m1,-1v1m1,-1v1m1,-2v1m1,-1v1m1,-1v1m1,-1v1m1,-1v1m1,-1v1m1,-2v1m1,-1v1m1,-1v1m1,-1v1m1,-1v1m1,-1v1m1,0v1m1,-1v1m1,-1v1m1,-1v1m1,-1v1m1,-1v1m1,-1v1m1,0v1m1,-1v1m1,-1v1m1,-1v1m1,-1v1m1,-1v1m1,0v1m1,-1v1m1,-1v1m1,-1v1m1,0v1m1,-1v1m1,-1v1m1,-1v1m1,-1v1m1,0v1m1,-1v1m1,-1v1m1,-1v1m1,0v1m1,-1v1m1,-1v1m1,-1v1m1,0v1m1,-1v1m1,-1v1m1,-1v1m1,0v1m1,-1v1m1,-1v1m1,-1v1m1,-1v1m1,-1v1m1,-1v1m1,0v1m1,-1v1m1,-1v1m1,-1v1m1,-1v1m1,-1v1m1,-1v1m1,-1v1m1,-1v1m1,-1v1m1,-1v1m1,-1v1m1,-1v1m1,-1v1m1,-1v1m1,-1v1m1,-1v1m1,-2v1m1,-1v1m1,-1v1m1,-2v1m1,-1v1m1,-1v1m1,-1v1m1,-2v1m1,-1v1m1,-1v1m1,-1v1m1,-2v1m1,-1v1m1,-1v1m1,-1v1m1,-1v1m1,-1v1m1,-2v1m1,-1v1m1,-1v1m1,-1v1m1,-2v1m1,-1v1m1,-1v1m1,-1v1m1,-1v1m1,-2v1m1,-1v1m1,-1v1m1,-1v1m1,-2v1m1,-1v1m1,-1v1m1,-1v1m1,-2v1m1,-1v1m1,-1v1m1,-1v1m1,-1v1m1,-2v1m1,-1v1m1,-1v1m1,-1v1m1,-2v1m1,-1v1m1,-1v1m1,-1v1m1,-1v1m1,-2v1m1,-1v1m1,-1v1m1,-1v1m1,-1v1m1,-2v1m1,-1v1m1,-1v1m1,-1v1m1,-2v1m1,-1v1m1,-1v1m1,-1v1m1,-2v1m1,-1v1m1,-1v1m1,-1v1m1,-1v1m1,-2v1m1,-1v1m1,-1v1m1,-1v1m1,-2v1m1,-1v1m1,-1v1m1,-1v1m1,-1v1m1,-2v1m1,-1v1m1,-1v1m1,-1v1m1,-1v1m1,-1v1m1,-1v1m1,-2v1m1,-1v1m1,-1v1m1,-1v1m1,-1v1m1,-1v1m1,-1v1m1,-1v1m1,-1v1m1,-1v1m1,-1v1m1,-1v1m1,-1v1m1,-1v1m1,-1v1m1,-1v1m1,-1v1m1,-1v1m1,-1v1m1,-1v1m1,-1v1m1,-1v1m1,-1v1m1,-1v1m1,-1v1m1,-1v1m1,-1v1m1,-1v1m1,-1v1m1,-1v1m1,-1v1m1,-1v1m1,-1v1m1,-1v1m1,-1v1m1,-1v1m1,-1v1m1,0v1m1,-1v1m1,-1v1m1,0v1m1,-1v1m1,-1v1m1,-1v1m1,0v1m1,-1v1m1,-1v1m1,0v1m1,-1v1m1,-1v1m1,-1v1m1,0v1m1,-1v1m1,-1v1m1,-1v1m1,-1v1m1,-1v1m1,0v1m1,-1v1m1,-1v1m1,-1v1m1,0v1m1,-1v1m1,-1v1m1,0v1m1,-1v1m1,-1v1m1,0v1m1,-1v1m1,-1v1m1,0v1m1,-1v1m1,-1v1m1,-1v1m1,0v1m1,-1v1m1,-1v1m1,-1v1m1,-1v1m1,-1v1m1,0v1m1,-1v1m1,-1v1m1,-1v1m1,-1v1m1,0v1m1,-1v1m1,-1v1m1,-1v1m1,-1v1m1,-1v1m1,0v1m1,-1v1m1,-1v1m1,-1v1m1,-1v1m1,0v1m1,-1v1m1,-1v1m1,-1v1m1,-1v1m1,0v1m1,-1v1m1,-1v1m1,-1v1m1,0v1m1,-1v1m1,0v1m1,-1v1m1,0v1m1,-1v1m1,0v1m1,-1v1m1,0v1m1,-1v1m1,0v1m1,-1v1m1,0v1m1,-1v1m1,-1v1m1,0v1m1,-1v1m1,0v1m1,-1v1m1,0v1m1,-1v1m1,0v1m1,-1v1m1,0v1m1,-1v1m1,0v1m1,-1v1m1,-1v1m1,-1v1m1,0v1m1,-1v1m1,-1v1m1,-1v1m1,0v1m1,-1v1m1,-1v1m1,-1v1m1,-1v1m1,0v1m1,-1v1m1,-1v1m1,-1v1m1,-1v1m1,-1v1m1,0v1m1,-1v1m1,-1v1m1,-1v1m1,-1v1m1,-1v1m1,0v1m1,-1v1m1,-1v1m1,-1v1m1,-1v1m1,-1v1m1,-1v1m1,-1v1m1,-1v1m1,-1v1m1,0v1m1,-1v1m1,-1v1m1,-1v1m1,-1v1m1,-1v1m1,-1v1m1,-1v1m1,-1v1m1,-1v1m1,-1v1m1,0v1m1,-1v1m1,-1v1m1,-1v1m1,-1v1m1,-1v1m1,-1v1m1,0v1m1,-1v1m1,-1v1m1,-1v1m1,-1v1m1,-1v1m1,-1v1m1,-1v1m1,-1v1m1,-1v1m1,-1v1m1,-1v1m1,-1v1m1,-1v1m1,-1v1m1,-1v1m1,-1v1m1,-1v1m1,-2v1m1,-1v1m1,-1v1m1,-1v1m1,-1v1m1,-1v1m1,-1v1m1,-1v1m1,-1v1m1,-1v1m1,-1v1m1,-2v1m1,-1v1m1,-1v1m1,-1v1m1,-1v1m1,-1v1m1,-2v1m1,-1v1m1,-1v1m1,-1v1m1,-2v1m1,-1v1m1,-1v1m1,-1v1m1,-2v1m1,-1v1m1,-1v1m1,-1v1m1,-2v1m1,-1v1m1,-1v1m1,-1v1m1,-2v1m1,-1v1m1,-1v1m1,-1v1m1,-2v1m1,-1v1m1,-2v1m1,-1v1m1,-1v1m1,-2v1m1,-1v1m1,-1v1m1,-2v1m1,-1v1m1,-2v1m1,-1v1m1,-1v1m1,-2v1m1,-1v1m1,-1v1m1,-2v1m1,-1v1m1,-2v1m1,-1v1m1,-2v1m1,-1v1m1,-2v1m1,-1v1m1,-2v1m1,-1v1m1,-2v1m1,-1v1m1,-2v1m1,-1v1m1,-2v1m1,-1v1m1,-1v1m1,-2v1m1,-1v1m1,-1v1m1,-2v1m1,-1v1m1,-2v1m1,-1v1m1,-1v1m1,-2v1m1,-1v1m1,-1v1m1,-2v1m1,-1v1m1,-1v1m1,-2v1m1,-1v1m1,-1v1m1,-2v1m1,-1v1m1,-1v1m1,-1v1m1,-2v1m1,-1v1m1,-1v1m1,-1v1m1,-1v1m1,-1v1m1,-2v1m1,-1v1m1,-1v1m1,-1v1m1,-1v1m1,-1v1m1,-1v1m1,-1v1m1,-1v1m1,-2v1m1,-1v1m1,-1v1m1,-1v1m1,-1v1m1,-1v1m1,-1v1m1,-1v1m1,-1v1m1,-1v1m1,-1v1m1,-1v1m1,-1v1m1,-1v1m1,-1v1m1,-1v1m1,-1v1m1,-1v1m1,-1v1m1,-1v1m1,-1v1m1,-1v1m1,-1v1m1,-1v1m1,-1v1m1,-1v1m1,-1v1m1,-1v1m1,-1v1m1,-1v1m1,-1v1m1,-1v1m1,-1v1m1,-1v1m1,-1v1m1,-1v1m1,-1v1m1,-1v1m1,-1v1m1,0v1m1,-1v1m1,-1v1m1,-1v1m1,-1v1m1,-1v1m1,-1v1m1,0v1m1,-1v1m1,-1v1m1,0v1m1,-1v1" fill="none" stroke="#f0f000" stroke-width="1"/>
<path d="M4.5,734v2m1,-4v2m1,-5v3m1,-5v2m1,-5v3m1,-5v2m1,-4v2m1,-4v2m1,-4v2m1,-4v2m1,-4v2m1,-4v2m1,-1v1m1,-1v1m1,0v1m1,0v1m1,-1v1m1,0v1m1,-2v1m1,-2v1m1,-2v1m1,-1v1m1,-2v1m1,-2v1m1,-2v1m1,-2v1m1,-2v1m1,-2v1m1,-2v1m1,-1v1m1,-2v1m1,-1v1m1,-2v1m1,-1v1m1,-1v1m1,-1v1m1,-1v1m1,-1v1m1,-1v1m1,-1v1m1,-1v1m1,0v2m1,0v1m1,0v2m1,0v2m1,0v1m1,-1v1m1,-1v1m1,-1v1m1,-1v1m1,-1v1m1,-1v1m1,-1v1m1,-1v1m1,-3v2m1,-4v2m1,-4v2m1,-4v2m1,-4v2m1,-4v2m1,-3v1m1,-2v1m1,-3v2m1,-3v1m1,-3v2m1,-3v1m1,-2v1m1,-3v2m1,-3v1m1,-2v1m1,-3v2m1,-3v1m1,-2v1m1,-1v1m1,-2v1m1,-1v1m1,-1v1m1,-1v1m1,-1v1m1,-2v1m1,-1v1m1,-1v1m1,-1v1m1,-1v1m1,0v1m1,0v1m1,-1v1m1,0v1m1,0v1m1,0v1m1,-1v1m1,0v1m1,0v1m1,0v1m1,0v2m1,0v1m1,0v1m1,0v1m1,0v1m1,-1v1m1,0v1m1,0v1m1,-1v1m1,-1v1m1,-1v1m1,-1v1m1,-1v1m1,-1v1m1,-2v1m1,-1v1m1,-1v1m1,0v1m1,-1v1m1,0v1m1,-1v1m1,0v1m1,-1v1m1,-2v1m1,-2v1m1,-2v1m1,-2v1m1,-2v1m1,-3v2m1,-3v1m1,-3v2m1,-4v2m1,-3v1m1,-2v1m1,-3v2m1,-3v1m1,-2v1m1,-3v2m1,-3v1m1,-2v1m1,-1v1m1,-2v1m1,-1v1m1,-1v1m1,0v1m1,-1v1m1,0v1m1,-1v1m1,0v1m1,-1v1m1,0v1m1,0v1m1,0v1m1,0v1m1,-1v1m1,0v1m1,0v1m1,0v1m1,0v1m1,-1v1m1,0v1m1,-1v1m1,0v1m1,0v1m1,0v1m1,0v1m1,0v1m1,0v1m1,-1v1m1,0v1m1,-1v1m1,0v1m1,-1v2m1,0v2m1,0v2m1,0v2m1,0v2m1,0v2m1,0v2m1,0v2m1,0v2m1,0v2m1,0v2m1,-1v1m1,-1v1m1,0v1m1,-1v1m1,-1v1m1,-1v1m1,0v2m1,0v1m1,0v2m1,0v2m1,0v1m1,0v1m1,0v1m1,0v1m1,0v1m1,0v1m1,0v1m1,0v1m1,-1v1m1,-2v1m1,-1v1m1,-2v1m1,-1v1m1,-3v2m1,-3v1m1,-3v2m1,-4v2m1,-3v1m1,-3v2m1,-3v1m1,-2v1m1,-3v2m1,-3v1m1,-3v2m1,-3v1m1,-2v1m1,-3v2m1,-3v1m1,-2v1m1,-2v1m1,-2v1m1,-1v1m1,-2v1m1,-2v1m1,0v1m1,0v2m1,0v1m1,0v1m1,0v2m1,0v1m1,-1v1m1,-1v1m1,-2v1m1,-1v1m1,-1v1m1,-1v1m1,-1v1m1,-1v1m1,-1v1m1,-1v1m1,-1v1m1,-2v1m1,-1v1m1,-2v1m1,-1v1m1,-2v1m1,-3v2m1,-4v2m1,-4v2m1,-4v2m1,-4v2m1,-3v1m1,-1v1m1,-2v1m1,-1v1m1,-1v1m1,-2v1m1,-1v1m1,-3v2m1,-3v1m1,-2v1m1,-3v2m1,-3v1m1,-3v2m1,-3v1m1,-2v1m1,-3v2m1,-3v1m1,0v1m1,0v1m1,0v1m1,0v1m1,0v1m1,0v1m1,-2v1m1,-3v2m1,-3v1m1,-2v1m1,-3v2m1,-3v1m1,-3v2m1,-3v1m1,-2v1m1,-3v2m1,-3v1m1,-1v1m1,-1v1m1,-1v1m1,-1v1m1,-1v1m1,-1v1m1,0v2m1,0v2m1,0v2m1,0v2m1,0v1m1,0v2m1,0v1m1,0v1m1,0v2m1,0v1m1,0v1m1,-1v1m1,0v1m1,-1v1m1,0v1m1,-1v1m1,-2v1m1,-1v1m1,-2v1m1,-2v1m1,-1v1m1,-2v1m1,-2v1m1,-2v1m1,-2v1m1,-2v1m1,-2v1m1,-2v1m1,-2v1m1,-2v1m1,-3v2m1,-3v1m1,-2v1m1,-2v1m1,-2v1m1,-2v1m1,-1v1m1,-2v1m1,-2v1m1,-1v1m1,0v1m1,-1v1m1,0v1m1,-1v1m1,-2v1m1,-1v1m1,-2v1m1,-1v1m1,-2v1m1,-1v1m1,-2v1m1,-2v1m1,-3v2m1,-3v1m1,-2v1m1,-1v1m1,-1v1m1,-1v1m1,-1v1m1,-1v1m1,-1v2m1,0v3m1,0v2m1,0v3m1,0v3m1,0v2m1,0v2m1,0v1m1,0v2m1,0v1m1,0v2m1,0v2m1,0v2m1,0v2m1,0v2m1,0v3m1,0v2m1,0v2m1,0v2m1,0v2m1,0v2m1,0v2m1,0v2m1,0v2m1,0v2m1,0v2m1,0v2m1,0v2m1,0v2m1,0v1m1,0v2m1,0v1m1,0v1m1,0v1m1,0v1m1,0v1m1,-1v1m1,0v1m1,0v1m1,0v1m1,0v1m1,0v1m1,0v1m1,0v2m1,0v1m1,0v1m1,0v1m1,0v1m1,0v1m1,0v2m1,0v1m1,0v1m1,0v2m1,0v1m1,0v1m1,-1v1m1,0v1m1,-1v1m1,0v1m1,-1v1m1,0v1m1,-1v1m1,0v1m1,-1v1m1,0v1m1,-1v1m1,0v1m1,-1v1m1,0v1m1,0v1m1,0v1m1,-1v1m1,0v1m1,0v1m1,-2v1m1,-1v1m1,-2v1m1,-1v1m1,-3v2m1,-5v3m1,-6v3m1,-5v2m1,-5v3m1,-6v3m1,-6v3m1,-5v2m1,-4v2m1,-4v2m1,-4v2m1,-4v2m1,-4v2m1,-4v2m1,-4v2m1,-4v2m1,-3v1m1,-3v2m1,-4v2m1,-4v2m1,-4v2m1,-4v2m1,-5v3m1,-5v2m1,-4v2m1,-4v2m1,-4v2m1,-4v2m1,-4v2m1,-3v1m1,-2v1m1,-1v1m1,-2v1m1,-2v1m1,-2v1m1,-1v1m1,-2v1m1,-1v1m1,-2v1m1,-1v1m1,-2v1m1,-1v1m1,-1v1m1,-1v1m1,-1v1m1,-1v1m1,-1v1m1,-1v1m1,-1v1m1,0v2m1,0v2m1,0v2m1,0v2m1,0v2m1,0v2m1,0v2m1,0v2m1,0v2m1,0v2m1,0v1m1,0v2m1,0v1m1,0v1m1,0v2m1,0v1m1,-1v1m1,0v1m1,-1v1m1,0v1m1,-1v1m1,-1v1m1,-2v1m1,-1v1m1,-1v1m1,-2v1m1,-1v1m1,-3v2m1,-3v1m1,-3v2m1,-4v2m1,-3v1m1,-2v1m1,-2v1m1,-2v1m1,-2v1m1,-2v1m1,-2v1m1,0v1m1,0v1m1,-1v1m1,0v1m1,0v1m1,-2v1m1,-1v1m1,-2v1m1,-1v1m1,-2v1m1,-1v1m1,-2v1m1,-1v1m1,-1v1m1,0v1m1,-1v1m1,-1v1m1,-1v1m1,-1v1m1,-1v1m1,-2v1m1,-1v1m1,-1v1m1,-3v2m1,-4v2m1,-4v2m1,-4v2m1,-3v1m1,-2v1m1,-2v1m1,-3v2m1,-3v1m1,-2v1m1,-1v1m1,-1v1m1,0v1m1,-1v1m1,-1v1m1,-1v1m1,0v1m1,-1v1m1,0v1m1,-1v1m1,0v1m1,-1v1m1,-1v1m1,-2v1m1,-1v1m1,-1v1m1,-2v1m1,-1v1m1,-1v1m1,-1v1m1,-2v1m1,-1v1m1,-1v1m1,0v1m1,-1v1m1,-1v1m1,0v1m1,-1v1m1,-1v1m1,0v1m1,-1v1m1,0v2m1,0v1m1,0v1m1,0v2m1,0v1m1,0v1m1,0v1m1,0v1m1,-1v1m1,0v1m1,0v1m1,-1v1m1,0v1m1,-1v1m1,-1v1m1,-1v1m1,0v1m1,-1v1m1,-3v2m1,-3v1m1,-3v2m1,-3v1m1,-3v2m1,-3v1m1,-3v2m1,-4v2m1,-3v1m1,-3v2m1,-4v2m1,-3v1m1,-2v1m1,-2v1m1,-2v1m1,-2v1m1,-2v1m1,-2v1m1,-3v2m1,-3v1m1,-2v1m1,-2v1m1,-1v1m1,-2v1m1,-1v1m1,-2v1m1,-1v1m1,-2v1m1,0v1m1,0v1m1,0v1m1,0v2m1,0v1m1,0v1m1,0v1m1,0v1m1,0v1m1,0v1m1,0v2m1,0v1m1,0v1m1,0v1m1,-1v1m1,0v1m1,-1v1m1,0v1m1,-1v1m1,-1v1m1,-1v1m1,-1v1m1,-1v1m1,-3v2m1,-3v1m1,-2v1m1,-3v2m1,-3v1m1,0v1m1,0v1m1,-1v1m1,0v1m1,0v2m1,0v3m1,0v2m1,0v3m1,0v3m1,0v2m1,0v2m1,0v2m1,0v1m1,0v2m1,0v2m1,0v1m1,0v1m1,0v1m1,0v1m1,0v1m1,0v1m1,0v1m1,-1v1m1,0v1m1,-1v1m1,-1v1m1,0v1m1,-1v1m1,-1v1m1,-2v1m1,-1v1m1,-2v1m1,-1v1m1,0v1m1,-1v1m1,0v1m1,-1v1m1,0v1m1,-2v1m1,-1v1m1,-2v1m1,-1v1m1,-2v1m1,-1v1m1,-2v1m1,-2v1m1,-2v1m1,-2v1m1,-2v1m1,-2v1m1,-1v1m1,0v1m1,-1v1m1,0v1m1,-1v1m1,0v1m1,0v1m1,0v2m1,0v1m1,0v1m1,0v1m1,-2v1m1,-2v1m1,-3v2m1,-3v1m1,-2v1m1,-2v1m1,-3v2m1,-3v1m1,-2v1m1,-3v2m1,-3v1m1,-1v1m1,-2v1m1,-1v1m1,-2v1m1,-1v1m1,-1v1m1,-2v1m1,-1v1m1,-2v1m1,-1v1m1,0v1m1,-1v1m1,0v1m1,-1v1m1,0v1m1,0v1m1,-1v1m1,0v1m1,-1v1m1,0v1m1,-1v1m1,-1v1m1,-1v1m1,-1v1m1,-1v1m1,-1v1m1,-1v1m1,-1v1m1,-1v1m1,-2v1m1,-1v1m1,-1v1m1,-1v1m1,-3v2m1,-3v1m1,-3v2m1,-4v2m1,-3v1m1,-1v1m1,-2v1m1,-1v1m1,-1v1m1,-3v2m1,-3v1m1,-2v1m1,-3v2m1,-3v1m1,-3v2m1,-3v1m1,-3v2m1,-3v1m1,-2v1m1,-3v2m1,-3v1m1,-2v1m1,-3v2m1,-3v1m1,-2v1m1,-2v1m1,-2v1m1,-2v1m1,-1v1m1,-2v1m1,-2v1m1,-2v1m1,-2v1m1,-1v1m1,-1v1m1,-2v1m1,-1v1m1,-1v1m1,-1v1m1,-2v1m1,-1v1m1,-1v1m1,-2v1m1,-1v1m1,-1v1m1,-1v1m1,-2v1m1,-1v1m1,-2v1m1,-1v1m1,-2v1m1,-2v1m1,-2v1m1,-1v1m1,-2v1m1,0v1m1,0v1m1,0v1m1,0v1m1,0v1m1,0v1m1,0v1m1,0v2m1,0v1m1,0v1m1,0v2m1,0v2m1,0v2m1,0v2m1,0v1m1,0v1m1,0v2m1,0v1m1,0v1m1,0v2m1,0v1m1,0v2m1,0v1m1,0v1m1,0v2m1,0v1m1,0v1m1,0v1m1,0v1m1,0v1m1,0v1m1,0v1m1,0v1m1,-1v1m1,-1v1m1,0v1m1,-1v1m1,-1v1m1,-1v1m1,-1v1m1,0v1m1,-1v1m1,-1v1m1,-2v1m1,-1v1m1,-2v1m1,-2v1m1,-1v1m1,-2v1m1,-2v1m1,-1v1m1,-2v1m1,-1v1m1,-2v1m1,-1v1m1,0v1m1,0v2m1,0v1m1,0v1m1,0v2m1,0v2m1,0v2m1,0v2m1,0v1m1,0v1m1,0v2m1,0v1m1,0v1m1,0v2m1,0v1m1,-1v1m1,-1v1m1,0v1m1,-1v1m1,-1v1m1,-1v1m1,0v2m1,0v1m1,0v1m1,0v2m1,0v1m1,0v1m1,0v1m1,0v1m1,-1v1m1,0v1m1,0v1m1,0v1m1,0v1m1,0v1m1,0v1m1,0v1m1,0v1m1,-2v1m1,-1v1m1,-2v1m1,-2v1m1,-1v1m1,-3v2m1,-4v2m1,-4v2m1,-4v2m1,-4v2m1,-4v2m1,-4v2m1,-3v1m1,-3v2m1,-4v2m1,-3v1m1,-3v2m1,-3v1m1,-2v1m1,-3v2m1,-3v1m1,0v1m1,-1v1m1,0v1m1,-1v1m1,0v1m1,-1v1m1,-1v1m1,-1v1m1,-1v1m1,-1v1m1,-1v1m1,-2v1m1,-2v1m1,-2v1m1,-2v1m1,-2v1m1,-2v1m1,-2v1m1,-2v1m1,-3v2m1,-3v1m1,-2v1m1,-2v1m1,0v2m1,0v2m1,0v2m1,0v2m1,-1v1m1,0v1m1,-1v1m1,0v1m1,-1v1m1,0v1m1,-1v1m1,-2v1m1,-2v1m1,-2v1m1,-2v1m1,-3v2m1,-4v2m1,-4v2m1,-4v2m1,-3v1m1,-3v2m1,-3v1m1,-2v1m1,-3v2m1,-3v1m1,-3v2m1,-3v1m1,-2v1m1,-3v2m1,-3v1m1,-2v1m1,-3v2m1,-3v1m1,-2v1m1,-2v1m1,-2v1m1,-2v1m1,-2v1m1,-2v1m1,-1v1m1,-2v1m1,-1v1m1,-2v1m1,-1v1m1,-1v1m1,-1v1m1,-1v1m1,-1v1m1,0v1m1,-1v1m1,-1v1m1,-1v1m1,-1v1m1,-1v1m1,-1v1m1,0v1m1,-1v1m1,0v1m1,-1v1m1,-1v1m1,0v1m1,-1v1m1,0v1m1,-1v1m1,0v2m1,0v1m1,0v2m1,0v1m1,0v2m1,0v2m1,0v2m1,0v1m1,0v1m1,-1v1m1,0v1m1,-1v1m1,0v2m1,0v2m1,0v2m1,0v2m1,0v2m1,0v2m1,-1v1m1,0v1m1,-1v1m1,0v1m1,-1v1m1,-3v2m1,-3v1m1,-2v1m1,-3v2m1,-3v1m1,-3v2m1,-4v2m1,-4v2m1,-4v2m1,-3v1m1,-2v1m1,-2v1m1,-2v1m1,-2v1m1,-2v1m1,-2v1m1,-2v1m1,-1v1m1,-2v1m1,-1v1m1,-1v1m1,0v1m1,-1v1m1,-1v1m1,-1v1m1,0v1m1,-1v1m1,0v2m1,0v1m1,0v2m1,0v1m1,0v2m1,0v2m1,0v1m1,0v2m1,0v1m1,0v2m1,0v2m1,0v2m1,0v2m1,0v2m1,0v2m1,0v1m1,0v1m1,0v2m1,0v1m1,0v2m1,0v1m1,0v1m1,0v2m1,0v1m1,0v1m1,0v2m1,0v1m1,0v1m1,-1v1m1,-2v1m1,-1v1m1,-1v1m1,-2v1m1,-1v1m1,-1v1m1,-2v1m1,-1v1m1,-2v1m1,-1v1m1,-3v2m1,-3v1m1,-3v2m1,-4v2m1,-3v1m1,-2v1m1,-2v1m1,-2v1m1,-1v1m1,-2v1m1,-2v1m1,-3v2m1,-4v2m1,-4v2m1,-4v2m1,-4v2m1,-3v1m1,-2v1m1,-3v2m1,-3v1m1,-2v1m1,-3v2m1,-3v1m1,-2v1m1,-3v2m1,-3v1m1,-3v2m1,-3v1m1,-3v2m1,-4v2m1,-3v1m1,-2v1m1,-2v1m1,-3v2m1,-3v1m1,-2v1m1,-2v1m1,-1v1m1,-2v1m1,-1v1m1,-2v1m1,-1v1m1,-1v1m1,-1v1m1,-1v1m1,0v1m1,-1v1m1,-1v1m1,-1v1m1,-1v1m1,-1v1m1,0v1m1,-1v1m1,-1v1m1,-1v1m1,0v1m1,0v1m1,-1v1m1,0v1m1,0v1m1,0v1m1,-1v1m1,0v1m1,-1v1m1,-1v1m1,-1v1m1,0v1m1,-1v1m1,-1v1m1,-1v1m1,-2v1m1,-2v1m1,-2v1m1,-2v1m1,-2v1m1,-2v1m1,-2v1m1,-2v1m1,-2v1m1,-2v1m1,-2v1m1,-2v1m1,-2v1m1,-1v1m1,-2v1m1,-2v1m1,-1v1m1,-2v1m1,-1v1m1,-1v1m1,-1v1m1,-2v1m1,-1v1m1,-2v1m1,-1v1m1,-2v1m1,-2v1m1,-2v1m1,-1v1m1,-2v1m1,0v2m1,0v2m1,0v2m1,0v1m1,0v1m1,0v1m1,0v1m1,0v1m1,0v1m1,0v1m1,0v1m1,0v1m1,0v1m1,0v1m1,0v1m1,0v1m1,0v2m1,0v1m1,0v1m1,0v2m1,0v1m1,-1v1m1,-1v1m1,0v1m1,-1v1m1,-1v1m1,-1v1m1,0v1m1,-1v1m1,-1v1m1,-1v1m1,0v1m1,-1v1m1,0v1m1,0v1m1,0v2m1,0v1m1,0v1m1,0v2m1,0v2m1,0v2m1,0v2m1,0v1m1,0v1m1,0v2m1,0v1m1,0v1m1,0v1m1,0v1m1,0v1m1,-1v1m1,0v1m1,0v1m1,0v1m1,0v1m1,0v1m1,-1v1m1,0v1m1,0v1m1,0v2m1,0v1m1,0v1m1,0v2m1,0v1m1,0v1m1,-1v1m1,0v1m1,-1v1m1,0v1m1,-1v1m1,-2v1m1,-1v1m1,-2v1m1,-1v1m1,-2v1m1,-1v1m1,-3v2m1,-4v2m1,-4v2m1,-3v1m1,-1v1m1,-1v1m1,-1v1m1,-2v1m1,-1v1m1,-1v1m1,-1v1m1,-1v1m1,-2v1m1,-1v1m1,-1v1m1,-1v1m1,-2v1m1,-1v1m1,-1v1m1,-1v1m1,-2v1m1,-1v1m1,0v1m1,0v1m1,0v2m1,0v1m1,0v1m1,0v1m1,0v1m1,0v2m1,0v1m1,0v1m1,0v2m1,0v1m1,0v1m1,0v2m1,0v1m1,0v2m1,0v1m1,0v1m1,0v1m1,0v1m1,0v2m1,0v1m1,0v1m1,0v1m1,0v1m1,0v1m1,0v1m1,0v1m1,0v1m1,0v1m1,0v1m1,0v1m1,0v1m1,0v1m1,0v1m1,0v2m1,0v1m1,0v1m1,-1v1m1,-2v1m1,-1v1m1,-1v1m1,-2v1m1,-1v1m1,-2v1m1,-2v1m1,-2v1m1,-3v2m1,-3v1m1,-2v1m1,-2v1m1,-2v1m1,-3v2m1,-3v1m1,-2v1m1,-3v2m1,-3v1m1,-2v1m1,-3v2m1,-3v1m1,-3v2m1,-3v1m1,-3v2m1,-4v2m1,-3v1m1,-2v1m1,-2v1m1,-2v1m1,-1v1m1,-2v1m1,-2v1m1,-2v1m1,-1v1m1,-2v1m1,-1v1m1,-2v1m1,-1v1m1,-2v1m1,-1v1m1,0v1m1,-1v1m1,0v1m1,0v1m1,-1v1m1,0v1m1,-1v1m1,0v1m1,0v1m1,0v1m1,0v2m1,0v1m1,0v1m1,0v1m1,-1v1m1,-1v1m1,-1v1m1,0v1m1,-1v1m1,-1v1m1,-2v2m1,-5v3m1,-5v2m1,-5v3m1,-5v2m1,-3v1m1,-2v1m1,-3v2m1,-3v1m1,-2v1m1,-1v1m1,-2v1m1,-1v1m1,-2v1m1,-1v1m1,-2v1m1,-1v1m1,-1v1m1,-1v1m1,0v1m1,-1v1m1,-1v1m1,-3v2m1,-4v2m1,-4v2m1,-4v2m1,-4v2m1,-4v2m1,-4v2m1,-3v1m1,-3v2m1,-4v2m1,-3v1m1,-2v1m1,-2v1m1,-3v2m1,-3v1m1,-2v1m1,-2v1m1,-1v1m1,-2v1m1,-1v1m1,-2v1m1,-1v1m1,-3v2m1,-3v1m1,-3v2m1,-4v2m1,-3v1m1,-2v1m1,-2v1m1,-3v2m1,-3v1m1,-2v1m1,-2v1m1,-2v1m1,-2v1m1,-3v2m1,-3v1m1,-2v1m1,-1v1m1,-2v1m1,-1v1m1,-2v1m1,-1v1m1,-2v1m1,-1v1m1,-2v1m1,-1v1m1,-2v1m1,-2v1m1,-1v1m1,-2v1m1,-1v1m1,-2v1m1,-1v1m1,-1v1m1,-1v1m1,0v1m1,-1v1m1,0v1m1,-1v1m1,0v1m1,-1v1m1,0v1m1,-1v1m1,0v1m1,-1v1m1,0v1m1,-1v1m1,0v1m1,-1v1m1,0v1m1,-1v1m1,0v1m1,-1v1m1,0v1m1,0v2m1,0v2m1,0v1m1,0v2m1,0v2m1,0v1m1,0v2m1,0v2m1,0v2m1,0v2m1,0v1m1,0v1m1,0v2m1,0v1m1,0v1m1,0v2m1,0v1m1,0v1m1,-2v1m1,-2v1m1,-2v1m1,-1v1m1,-2v1m1,-2v1m1,-2v1m1,-1v1m1,-1v1m1,-2v1m1,-1v1m1,-1v1m1,-1v1m1,-1v1m1,-1v1m1,-1v1m1,-1v1m1,-1v1m1,-1v1m1,-1v1m1,-1v1m1,-1v1m1,0v1m1,0v1m1,0v1m1,-1v1m1,0v1m1,0v1m1,0v2m1,0v1m1,0v2m1,0v2m1,0v1m1,-1v1m1,0v1m1,-1v1m1,-1v1m1,0v1m1,-1v1m1,0v1m1,-1v1m1,0v1m1,-1v1m1,0v1m1,0v2m1,0v2m1,0v2m1,0v2m1,0v2m1,0v1" fill="none" stroke="#ffffff" stroke-width="1"/>
<path d="M4.5,771v3m1,-9v6m1,-12v6m1,-12v6m1,-12v6m1,-12v6m1,-12v6m1,-12v6m1,-12v6m1,-12v6m1,-12v6m1,-9v3m1,-2v1m1,0v2m1,0v1m1,0v1m1,0v2m1,0v1m1,-3v2m1,-3v1m1,-3v2m1,-3v1m1,-3v2m1,-3v1m1,-3v2m1,-4v2m1,-4v2m1,-4v2m1,-4v2m1,-4v2m1,-3v1m1,-3v2m1,-4v2m1,-3v1m1,-1v1m1,-1v1m1,-1v1m1,-1v1m1,-1v1m1,-1v1m1,-1v2m1,0v4m1,0v4m1,0v4m1,0v4m1,0v3m1,0v1m1,0v1m1,-1v1m1,-1v1m1,-2v1m1,-1v1m1,-1v1m1,-2v2m1,-5v3m1,-6v3m1,-6v3m1,-6v3m1,-7v4m1,-8v4m1,-9v5m1,-9v4m1,-9v5m1,-11v6m1,-11v5m1,-11v6m1,-10v4m1,-8v4m1,-8v4m1,-8v4m1,-8v4m1,-7v3m1,-5v2m1,-3v1m1,-3v2m1,-4v2m1,-3v1m1,-3v2m1,-4v2m1,-6v4m1,-7v3m1,-7v4m1,-8v4m1,-6v2m1,0v2m1,0v3m1,0v3m1,0v2m1,0v5m1,0v7m1,0v7m1,0v7m1,0v6m1,0v6m1,0v6m1,0v6m1,0v4m1,0v3m1,0v3m1,0v3m1,0v2m1,0v1m1,-1v1m1,0v1m1,-1v1m1,0v1m1,-2v1m1,-1v1m1,-2v1m1,-1v1m1,-2v2m1,0v2m1,0v2m1,0v3m1,0v2m1,0v2m1,0v2m1,-5v3m1,-6v3m1,-6v3m1,-6v3m1,-7v4m1,-8v4m1,-8v4m1,-8v4m1,-8v4m1,-9v5m1,-9v4m1,-8v4m1,-8v4m1,-8v4m1,-8v4m1,-7v3m1,-5v2m1,-3v1m1,-3v2m1,-4v2m1,-3v1m1,-2v1m1,-2v1m1,-2v1m1,-1v1m1,-2v1m1,-2v4m1,0v6m1,0v6m1,0v7m1,0v6m1,0v4m1,0v2m1,0v2m1,0v2m1,0v2m1,0v2m1,0v3m1,0v4m1,0v4m1,0v4m1,0v4m1,0v4m1,0v3m1,-1v1m1,-1v1m1,-2v1m1,-1v1m1,-1v1m1,-1v4m1,0v6m1,0v6m1,0v6m1,0v6m1,0v7m1,0v6m1,0v6m1,0v6m1,0v6m1,0v4m1,0v1m1,-1v1m1,0v1m1,-1v1m1,0v1m1,-1v3m1,0v4m1,0v4m1,0v4m1,0v4m1,0v4m1,0v2m1,0v3m1,0v2m1,0v3m1,0v2m1,0v3m1,0v2m1,-4v2m1,-4v2m1,-4v2m1,-5v3m1,-7v4m1,-7v3m1,-7v4m1,-9v5m1,-11v6m1,-12v6m1,-10v4m1,-8v4m1,-9v5m1,-9v4m1,-8v4m1,-7v3m1,-6v3m1,-7v4m1,-7v3m1,-6v3m1,-6v3m1,-6v3m1,-5v2m1,-5v3m1,-6v3m1,-5v2m1,0v3m1,0v4m1,0v3m1,0v3m1,0v4m1,0v2m1,-2v1m1,-1v1m1,-2v1m1,-1v1m1,-2v1m1,-1v1m1,-1v1m1,-2v1m1,-1v1m1,-2v1m1,-1v1m1,-3v2m1,-4v2m1,-4v2m1,-4v2m1,-6v4m1,-8v4m1,-9v5m1,-10v5m1,-9v4m1,-9v5m1,-8v3m1,-4v1m1,-2v1m1,-3v2m1,-3v1m1,-2v1m1,-3v2m1,-6v4m1,-7v3m1,-6v3m1,-7v4m1,-8v4m1,-8v4m1,-8v4m1,-8v4m1,-8v4m1,-7v3m1,-1v3m1,0v4m1,0v3m1,0v3m1,0v4m1,0v2m1,-6v4m1,-8v4m1,-7v3m1,-7v4m1,-8v4m1,-7v3m1,-7v4m1,-8v4m1,-7v3m1,-7v4m1,-8v4m1,-6v2m1,-1v1m1,0v1m1,0v1m1,0v1m1,0v3m1,0v6m1,0v5m1,0v5m1,0v6m1,0v5m1,0v6m1,0v6m1,0v6m1,0v6m1,0v4m1,0v1m1,0v2m1,0v1m1,0v1m1,0v2m1,0v1m1,-3v2m1,-4v2m1,-3v1m1,-3v2m1,-4v2m1,-3v1m1,-3v2m1,-4v2m1,-4v2m1,-4v2m1,-5v3m1,-6v3m1,-6v3m1,-5v2m1,-5v3m1,-6v3m1,-6v3m1,-6v3m1,-6v3m1,-6v3m1,-6v3m1,-6v3m1,-5v2m1,-1v1m1,0v1m1,0v2m1,0v1m1,0v1m1,-3v2m1,-3v1m1,-3v2m1,-3v1m1,-3v2m1,-4v2m1,-4v2m1,-5v3m1,-6v3m1,-5v2m1,-4v2m1,-2v1m1,-1v1m1,-1v1m1,-1v1m1,-1v1m1,-1v5m1,0v10m1,0v9m1,0v10m1,0v7m1,0v5m1,0v5m1,0v5m1,0v5m1,0v5m1,0v6m1,0v6m1,0v6m1,0v5m1,0v6m1,0v6m1,0v6m1,0v6m1,0v6m1,0v4m1,0v4m1,0v5m1,0v4m1,0v5m1,0v5m1,0v5m1,0v5m1,0v5m1,0v4m1,0v4m1,0v4m1,0v4m1,0v4m1,0v3m1,0v2m1,0v3m1,0v3m1,0v2m1,0v3m1,0v3m1,0v2m1,0v2m1,0v2m1,0v3m1,0v2m1,0v2m1,0v2m1,0v3m1,0v2m1,0v3m1,0v2m1,0v2m1,0v3m1,0v2m1,0v2m1,0v2m1,0v2m1,0v2m1,0v2m1,0v2m1,-1v1m1,-1v1m1,-1v1m1,0v1m1,-1v1m1,-1v1m1,-1v1m1,0v2m1,0v1m1,0v2m1,0v2m1,0v1m1,-2v1m1,-2v1m1,-2v1m1,-2v1m1,-2v1m1,-4v3m1,-8v5m1,-10v5m1,-10v5m1,-12v7m1,-15v8m1,-16v8m1,-17v9m1,-18v9m1,-17v8m1,-17v9m1,-16v7m1,-12v5m1,-10v5m1,-10v5m1,-11v6m1,-13v7m1,-14v7m1,-14v7m1,-14v7m1,-14v7m1,-13v6m1,-13v7m1,-14v7m1,-13v6m1,-13v7m1,-12v5m1,-9v4m1,-8v4m1,-8v4m1,-8v4m1,-8v4m1,-8v4m1,-8v4m1,-8v4m1,-8v4m1,-8v4m1,-7v3m1,-2v1m1,0v1m1,0v1m1,0v1m1,0v1m1,0v1m1,-1v1m1,0v1m1,-1v1m1,0v1m1,-1v1m1,0v5m1,0v9m1,0v9m1,0v7m1,0v4m1,0v5m1,0v5m1,0v4m1,0v4m1,0v4m1,0v4m1,0v4m1,0v4m1,0v4m1,0v4m1,0v4m1,0v4m1,0v3m1,0v1m1,0v2m1,0v1m1,0v1m1,-3v2m1,-4v2m1,-4v2m1,-4v2m1,-4v2m1,-4v2m1,-6v4m1,-7v3m1,-7v4m1,-8v4m1,-7v3m1,-5v2m1,-5v3m1,-6v3m1,-5v2m1,-5v3m1,-5v2m1,-1v2m1,0v1m1,0v2m1,0v2m1,-1v2m1,-4v2m1,-5v3m1,-5v2m1,-4v2m1,-5v3m1,-5v2m1,-4v2m1,-1v1m1,0v1m1,0v1m1,-1v1m1,0v1m1,0v1m1,0v1m1,-1v1m1,0v1m1,-1v1m1,-2v3m1,-9v6m1,-12v6m1,-12v6m1,-12v6m1,-10v4m1,-8v4m1,-7v3m1,-6v3m1,-7v4m1,-6v2m1,-1v1m1,0v1m1,0v2m1,0v1m1,0v1m1,0v1m1,0v2m1,0v2m1,0v1m1,0v2m1,0v2m1,-1v2m1,-6v4m1,-7v3m1,-6v3m1,-7v4m1,-6v2m1,-3v1m1,-2v1m1,-3v2m1,-3v1m1,-2v1m1,0v1m1,0v1m1,0v1m1,0v1m1,0v3m1,0v6m1,0v5m1,0v6m1,0v5m1,0v5m1,0v5m1,0v5m1,0v5m1,0v4m1,0v2m1,0v2m1,0v2m1,0v2m1,0v2m1,-1v1m1,0v1m1,-1v1m1,-1v1m1,0v1m1,-1v1m1,-1v1m1,0v1m1,-2v2m1,-6v4m1,-8v4m1,-8v4m1,-8v4m1,-8v4m1,-8v4m1,-9v5m1,-10v5m1,-9v4m1,-9v5m1,-9v4m1,-8v4m1,-8v4m1,-8v4m1,-8v4m1,-9v5m1,-9v4m1,-8v4m1,-9v5m1,-9v4m1,-8v4m1,-6v2m1,-4v2m1,-4v2m1,-4v2m1,-4v2m1,-4v2m1,0v4m1,0v3m1,0v4m1,0v4m1,0v5m1,0v7m1,0v6m1,0v7m1,0v6m1,0v5m1,0v5m1,0v5m1,0v4m1,0v2m1,0v2m1,0v3m1,0v2m1,0v2m1,0v1m1,-1v1m1,0v1m1,-1v1m1,-2v3m1,-7v4m1,-9v5m1,-10v5m1,-9v4m1,-7v3m1,-1v3m1,0v3m1,0v4m1,0v3m1,0v4m1,0v5m1,0v5m1,0v5m1,0v5m1,0v6m1,0v6m1,0v6m1,0v6m1,0v6m1,0v6m1,0v5m1,0v4m1,0v4m1,0v4m1,0v4m1,0v4m1,0v2m1,0v1m1,0v1m1,0v2m1,0v1m1,0v1m1,-1v2m1,-5v3m1,-6v3m1,-6v3m1,-6v3m1,-5v2m1,-1v2m1,0v2m1,0v2m1,0v2m1,0v1m1,-3v2m1,-4v2m1,-4v2m1,-4v2m1,-4v2m1,-4v2m1,-5v3m1,-6v3m1,-5v2m1,-5v3m1,-6v3m1,-5v2m1,-1v2m1,0v1m1,0v2m1,0v2m1,0v2m1,0v2m1,0v3m1,0v3m1,0v2m1,0v3m1,0v2m1,-5v3m1,-7v4m1,-7v3m1,-6v3m1,-7v4m1,-9v5m1,-13v8m1,-15v7m1,-14v7m1,-15v8m1,-14v6m1,-12v6m1,-11v5m1,-11v6m1,-9v3m1,-3v1m1,-1v1m1,-2v1m1,-1v1m1,-1v1m1,-1v1m1,0v2m1,0v1m1,0v2m1,0v2m1,0v3m1,0v5m1,0v5m1,0v5m1,0v5m1,0v3m1,-1v1m1,0v1m1,-1v1m1,-1v1m1,0v1m1,-1v1m1,-2v1m1,-2v1m1,-2v1m1,-2v1m1,-2v1m1,-2v1m1,-3v2m1,-5v3m1,-6v3m1,-7v4m1,-7v3m1,-5v2m1,-2v1m1,-1v1m1,-1v1m1,-1v1m1,-1v1m1,-2v2m1,-6v4m1,-7v3m1,-6v3m1,-7v4m1,-8v4m1,-9v5m1,-10v5m1,-10v5m1,-10v5m1,-10v5m1,-9v4m1,-8v4m1,-9v5m1,-9v4m1,-7v3m1,-5v2m1,-4v2m1,-4v2m1,-4v2m1,-4v2m1,-4v2m1,-4v2m1,-2v1m1,-1v1m1,-1v1m1,-1v1m1,-1v1m1,-3v2m1,-3v1m1,-3v2m1,-3v1m1,-3v2m1,-4v2m1,-4v2m1,-4v2m1,-4v2m1,-4v2m1,-4v2m1,-1v1m1,-1v1m1,0v1m1,0v1m1,-1v1m1,0v2m1,0v4m1,0v4m1,0v4m1,0v4m1,0v4m1,0v4m1,0v3m1,0v3m1,0v4m1,0v4m1,0v6m1,0v6m1,0v6m1,0v6m1,0v6m1,0v4m1,0v5m1,0v5m1,0v4m1,0v5m1,0v4m1,0v3m1,0v3m1,0v3m1,0v3m1,0v3m1,0v2m1,0v3m1,0v2m1,0v2m1,0v3m1,0v2m1,0v2m1,0v1m1,0v1m1,0v1m1,0v1m1,0v1m1,0v1m1,-1v1m1,0v1m1,-1v1m1,0v1m1,-3v2m1,-4v2m1,-4v2m1,-4v2m1,-4v2m1,-3v1m1,-3v2m1,-4v2m1,-4v2m1,-4v2m1,-4v2m1,-4v2m1,0v2m1,0v3m1,0v2m1,0v4m1,0v4m1,0v5m1,0v5m1,0v4m1,0v4m1,0v4m1,0v4m1,0v4m1,0v4m1,0v4m1,0v2m1,0v1m1,-1v1m1,0v1m1,0v1m1,-1v1m1,0v2m1,0v4m1,0v4m1,0v4m1,0v4m1,0v3m1,0v2m1,0v2m1,0v2m1,0v2m1,0v2m1,0v2m1,0v3m1,0v2m1,0v2m1,0v2m1,0v2m1,0v2m1,-6v4m1,-7v3m1,-6v3m1,-7v4m1,-9v5m1,-13v8m1,-16v8m1,-15v7m1,-12v5m1,-11v6m1,-11v5m1,-10v5m1,-9v4m1,-9v5m1,-10v5m1,-9v4m1,-8v4m1,-7v3m1,-6v3m1,-7v4m1,-6v2m1,-1v1m1,0v1m1,0v2m1,0v1m1,0v1m1,0v1m1,-1v1m1,-1v1m1,0v1m1,-1v1m1,-2v2m1,-5v3m1,-6v3m1,-6v3m1,-6v3m1,-6v3m1,-6v3m1,-7v4m1,-8v4m1,-7v3m1,-7v4m1,-8v4m1,-6v3m1,0v6m1,0v6m1,0v6m1,0v3m1,0v2m1,0v1m1,0v2m1,0v2m1,0v1m1,0v2m1,-1v2m1,-5v3m1,-5v2m1,-5v3m1,-7v4m1,-8v4m1,-9v5m1,-10v5m1,-9v4m1,-9v5m1,-9v4m1,-8v4m1,-8v4m1,-9v5m1,-9v4m1,-8v4m1,-8v4m1,-7v3m1,-7v4m1,-7v3m1,-6v3m1,-7v4m1,-7v3m1,-6v3m1,-6v3m1,-5v2m1,-5v3m1,-6v3m1,-5v2m1,-3v1m1,-1v1m1,-2v1m1,-1v1m1,-2v1m1,0v2m1,0v1m1,0v1m1,0v2m1,-1v2m1,-5v3m1,-6v3m1,-7v4m1,-7v3m1,-5v2m1,0v2m1,0v2m1,0v2m1,0v2m1,0v3m1,0v3m1,0v3m1,0v4m1,0v3m1,0v4m1,0v5m1,0v4m1,0v5m1,0v5m1,0v6m1,0v6m1,0v6m1,0v4m1,0v4m1,0v3m1,0v4m1,0v4m1,0v4m1,0v5m1,0v5m1,0v5m1,0v5m1,0v3m1,0v2m1,0v1m1,0v2m1,0v2m1,-2v3m1,-7v4m1,-9v5m1,-10v5m1,-9v4m1,-9v5m1,-10v5m1,-10v5m1,-10v5m1,-10v5m1,-9v4m1,-8v4m1,-7v3m1,-7v4m1,-7v3m1,-7v4m1,-6v2m1,-4v2m1,-3v1m1,-3v2m1,-3v1m1,-3v2m1,-3v1m1,-1v1m1,-2v1m1,-1v1m1,-1v1m1,-2v1m1,-1v5m1,0v9m1,0v9m1,0v8m1,0v7m1,0v7m1,0v7m1,0v7m1,0v6m1,0v4m1,0v4m1,0v5m1,0v4m1,0v4m1,0v4m1,0v4m1,0v4m1,0v4m1,0v4m1,0v3m1,0v3m1,0v3m1,0v3m1,0v4m1,0v5m1,0v4m1,0v5m1,0v3m1,-1v1m1,-2v1m1,-1v1m1,-1v1m1,-2v1m1,-2v2m1,-4v2m1,-4v2m1,-5v3m1,-5v2m1,-6v4m1,-10v6m1,-12v6m1,-12v6m1,-12v6m1,-10v4m1,-6v2m1,-4v2m1,-4v2m1,-4v2m1,-4v2m1,-6v4m1,-10v6m1,-11v5m1,-11v6m1,-12v6m1,-10v4m1,-7v3m1,-6v3m1,-7v4m1,-7v3m1,-7v4m1,-8v4m1,-8v4m1,-8v4m1,-8v4m1,-9v5m1,-9v4m1,-9v5m1,-10v5m1,-9v4m1,-8v4m1,-7v3m1,-7v4m1,-7v3m1,-6v3m1,-7v4m1,-6v2m1,-2v1m1,-2v1m1,-1v1m1,-2v1m1,-1v1m1,-1v1m1,0v1m1,-1v1m1,-1v1m1,-2v1m1,-2v1m1,-3v2m1,-3v1m1,-2v1m1,-2v1m1,-2v1m1,-3v2m1,-3v1m1,-2v5m1,0v10m1,0v10m1,0v6m1,0v3m1,0v4m1,0v3m1,0v2m1,0v2m1,0v1m1,0v2m1,0v1m1,-2v1m1,-1v1m1,-2v1m1,-2v2m1,-6v4m1,-7v3m1,-7v4m1,-7v3m1,-5v2m1,-4v2m1,-5v3m1,-5v2m1,-4v2m1,-4v2m1,-4v2m1,-4v2m1,-3v1m1,-3v2m1,-4v2m1,-4v2m1,-4v2m1,-5v3m1,-5v2m1,-5v3m1,-6v3m1,-5v2m1,-1v1m1,-1v1m1,0v1m1,-1v1m1,0v1m1,-1v1m1,0v3m1,0v5m1,0v5m1,0v5m1,0v4m1,0v3m1,0v3m1,0v3m1,0v3m1,0v3m1,0v3m1,0v2m1,0v2m1,0v3m1,0v2m1,0v2m1,0v5m1,0v6m1,0v6m1,0v7m1,0v6m1,0v4m1,-1v1m1,-1v1m1,-2v1m1,-1v1m1,-1v1m1,0v1m1,-1v1m1,0v1m1,0v1m1,0v1m1,-1v1m1,0v2m1,0v2m1,0v2m1,0v3m1,0v2m1,0v4m1,0v5m1,0v6m1,0v5m1,0v5m1,0v4m1,0v5m1,0v4m1,0v5m1,0v4m1,0v4m1,0v2m1,0v2m1,0v2m1,0v2m1,0v3m1,0v3m1,0v2m1,0v3m1,0v3m1,0v2m1,0v2m1,0v2m1,0v2m1,0v2m1,0v2m1,0v2m1,0v2m1,0v2m1,0v1m1,0v2m1,0v2m1,0v1m1,-3v2m1,-4v2m1,-4v2m1,-4v2m1,-4v2m1,-7v5m1,-13v8m1,-16v8m1,-15v7m1,-14v7m1,-11v4m1,-6v2m1,-3v1m1,-3v2m1,-4v2m1,-3v1m1,0v2m1,0v1m1,0v2m1,0v1m1,0v2m1,0v1m1,-3v2m1,-4v2m1,-4v2m1,-4v2m1,-4v2m1,-4v3m1,0v6m1,0v5m1,0v6m1,0v4m1,0v3m1,0v3m1,0v2m1,0v3m1,0v3m1,0v3m1,0v3m1,0v4m1,0v3m1,0v3m1,0v4m1,0v3m1,0v3m1,0v2m1,0v2m1,0v3m1,0v2m1,0v3m1,0v2m1,0v2m1,0v3m1,0v2m1,0v2m1,0v2m1,0v3m1,0v2m1,0v2m1,0v2m1,0v3m1,0v2m1,0v2m1,0v3m1,0v2m1,0v2m1,-2v1m1,-2v1m1,-2v1m1,-3v2m1,-3v1m1,-2v1m1,-3v2m1,-6v4m1,-7v3m1,-6v3m1,-7v4m1,-8v4m1,-9v5m1,-9v4m1,-9v5m1,-10v5m1,-10v5m1,-11v6m1,-12v6m1,-12v6m1,-12v6m1,-11v5m1,-10v5m1,-10v5m1,-10v5m1,-10v5m1,-11v6m1,-12v6m1,-12v6m1,-12v6m1,-12v6m1,-10v4m1,-4v1m1,-1v1m1,-1v1m1,-1v1m1,-1v1m1,-1v1m1,0v1m1,0v1m1,0v1m1,0v1m1,0v1m1,0v1m1,0v3m1,0v5m1,0v4m1,0v5m1,0v4m1,0v2m1,0v2m1,0v3m1,0v2m1,0v2m1,0v1m1,0v1m1,0v1m1,-1v1m1,0v1m1,0v1m1,-3v4m1,-10v6m1,-13v7m1,-13v6m1,-12v6m1,-11v5m1,-9v4m1,-9v5m1,-9v4m1,-7v3m1,-6v3m1,-6v3m1,-5v2m1,-4v2m1,-3v1m1,-3v2m1,-4v2m1,-3v1m1,0v1m1,0v1m1,-1v1m1,0v1m1,-2v3m1,-8v5m1,-11v6m1,-11v5m1,-10v5m1,-11v6m1,-11v5m1,-9v4m1,-8v4m1,-9v5m1,-9v4m1,-8v4m1,-7v3m1,-6v3m1,-7v4m1,-7v3m1,-5v2m1,-3v1m1,-1v1m1,-2v1m1,-2v1m1,-1v1m1,-3v2m1,-6v4m1,-8v4m1,-8v4m1,-8v4m1,-8v4m1,-6v2m1,-5v3m1,-6v3m1,-5v2m1,-5v3m1,-6v3m1,-6v3m1,-6v3m1,-7v4m1,-7v3m1,-5v2m1,-2v1m1,-2v1m1,-1v1m1,-2v1m1,-1v1m1,-2v1m1,-1v1m1,-2v1m1,-1v1m1,-2v1m1,-1v1m1,-2v1m1,-1v1m1,-2v1m1,-1v1m1,-2v1m1,-1v2m1,0v2m1,0v2m1,0v2m1,0v2m1,0v2m1,0v2m1,-3v2m1,-4v2m1,-3v1m1,-3v2m1,-4v2m1,-3v2m1,0v4m1,0v3m1,0v4m1,0v4m1,0v5m1,0v5m1,0v5m1,0v5m1,0v5m1,0v6m1,0v5m1,0v5m1,0v6m1,0v6m1,0v6m1,0v7m1,0v7m1,0v6m1,0v5m1,0v4m1,0v4m1,0v4m1,0v4m1,0v4m1,0v3m1,0v1m1,-1v1m1,-1v2m1,-5v3m1,-6v3m1,-7v4m1,-7v3m1,-5v2m1,-2v1m1,-1v1m1,-2v1m1,-1v1m1,-1v1m1,-2v1m1,-2v1m1,-1v1m1,-2v1m1,-3v2m1,-4v2m1,-5v3m1,-6v3m1,-5v2m1,-5v3m1,-5v3m1,0v6m1,0v6m1,0v6m1,0v7m1,0v7m1,0v7m1,0v7m1,0v7m1,0v4m1,0v2m1,0v2m1,0v2m1,0v2m1,0v2m1,0v1m1,0v1m1,0v1m1,0v1m1,0v1m1,0v1m1,0v3m1,0v4m1,0v5m1,0v4m1,0v4m1,0v4m1,0v4m1,0v3" fill="none" stroke="#ff00ff" stroke-width="1"/>
<g shape-rendering="auto"><circle cx="4" cy="738" r="7" fill="#c0c0c0"/><rect x="1" y="734" width="2" height="4" fill="#000"/><rect x="5" y="734" width="2" height="4" fill="#000"/><rect x="0" y="741" width="8" height="1" fill="#000"/></g>
<g shape-rendering="auto"><circle cx="54" cy="719" r="7" fill="#c0c0c0"/><rect x="51" y="715" width="2" height="4" fill="#000"/><rect x="55" y="715" width="2" height="4" fill="#000"/><rect x="50" y="722" width="8" height="1" fill="#000"/></g>
<g shape-rendering="auto"><circle cx="120" cy="707" r="7" fill="#c0c0c0"/><rect x="117" y="703" width="2" height="4" fill="#000"/><rect x="121" y="703" width="2" height="4" fill="#000"/><rect x="116" y="710" width="8" height="1" fill="#000"/></g>
<g shape-rendering="auto"><circle cx="197" cy="738" r="7" fill="#c0c0c0"/><rect x="194" y="734" width="2" height="4" fill="#000"/><rect x="198" y="734" width="2" height="4" fill="#000"/><rect x="193" y="741" width="8" height="1" fill="#000"/></g>
<g shape-rendering="auto"><circle cx="307" cy="697" r="7" fill="#c0c0c0"/><rect x="304" y="693" width="2" height="4" fill="#000"/><rect x="308" y="693" width="2" height="4" fill="#000"/><rect x="303" y="700" width="8" height="1" fill="#000"/></g>
<g shape-rendering="auto"><circle cx="422" cy="767" r="7" fill="#c0c0c0"/><rect x="419" y="763" width="2" height="4" fill="#000"/><rect x="423" y="763" width="2" height="4" fill="#000"/><rect x="418" y="770" width="8" height="1" fill="#000"/></g>
<g shape-rendering="auto"><circle cx="499" cy="726" r="7" fill="#c0c0c0"/><rect x="496" y="722" width="2" height="4" fill="#000"/><rect x="500" y="722" width="2" height="4" fill="#000"/><rect x="495" y="729" width="8" height="1" fill="#000"/></g>
<g shape-rendering="auto"><circle cx="598" cy="712" r="7" fill="#c0c0c0"/><rect x="595" y="708" width="2" height="4" fill="#000"/><rect x="599" y="708" width="2" height="4" fill="#000"/><rect x="594" y="715" width="8" height="1" fill="#000"/></g>
<g shape-rendering="auto"><circle cx="681" cy="727" r="7" fill="#c0c0c0"/><rect x="678" y="723" width="2" height="4" fill="#000"/><rect x="682" y="723" width="2" height="4" fill="#000"/><rect x="677" y="730" width="8" height="1" fill="#000"/></g>
<g shape-rendering="auto"><circle cx="714" cy="728" r="7" fill="#c0c0c0"/><rect x="711" y="724" width="2" height="4" fill="#000"/><rect x="715" y="724" width="2" height="4" fill="#000"/><rect x="710" y="731" width="8" height="1" fill="#000"/></g>
<g shape-rendering="auto"><circle cx="752" cy="715" r="7" fill="#c0c0c0"/><rect x="749" y="711" width="2" height="4" fill="#000"/><rect x="753" y="711" width="2" height="4" fill="#000"/><rect x="748" y="718" width="8" height="1" fill="#000"/></g>
<g shape-rendering="auto"><circle cx="906" cy="745" r="7" fill="#c0c0c0"/><rect x="903" y="741" width="2" height="4" fill="#000"/><rect x="907" y="741" width="2" height="4" fill="#000"/><rect x="902" y="748" width="8" height="1" fill="#000"/></g>
<g shape-rendering="auto"><circle cx="1038" cy="711" r="7" fill="#c0c0c0"/><rect x="1035" y="707" width="2" height="4" fill="#000"/><rect x="1039" y="707" width="2" height="4" fill="#000"/><rect x="1034" y="714" width="8" height="1" fill="#000"/></g>
<g shape-rendering="auto"><circle cx="1093" cy="731" r="7" fill="#c0c0c0"/><rect x="1090" y="727" width="2" height="4" fill="#000"/><rect x="1094" y="727" width="2" height="4" fill="#000"/><rect x="1089" y="734" width="8" height="1" fill="#000"/></g>
<g shape-rendering="auto"><circle cx="1170" cy="683" r="7" fill="#c0c0c0"/><rect x="1167" y="679" width="2" height="4" fill="#000"/><rect x="1171" y="679" width="2" height="4" fill="#000"/><rect x="1166" y="686" width="8" height="1" fill="#000"/></g>
<g shape-rendering="auto"><circle cx="1274" cy="732" r="7" fill="#c0c0c0"/><rect x="1271" y="728" width="2" height="4" fill="#000"/><rect x="1275" y="728" width="2" height="4" fill="#000"/><rect x="1270" y="735" width="8" height="1" fill="#000"/></g>
<g shape-rendering="auto"><circle cx="1340" cy="762" r="7" fill="#c0c0c0"/><rect x="1337" y="758" width="2" height="4" fill="#000"/><rect x="1341" y="758" width="2" height="4" fill="#000"/><rect x="1336" y="765" width="8" height="1" fill="#000"/></g>
<g shape-rendering="auto"><circle cx="1401" cy="736" r="7" fill="#c0c0c0"/><rect x="1398" y="732" width="2" height="4" fill="#000"/><rect x="1402" y="732" width="2" height="4" fill="#000"/><rect x="1397" y="739" width="8" height="1" fill="#000"/></g>
<g shape-rendering="auto"><circle cx="1516" cy="697" r="7" fill="#c0c0c0"/><rect x="1513" y="693" width="2" height="4" fill="#000"/><rect x="1517" y="693" width="2" height="4" fill="#000"/><rect x="1512" y="700" width="8" height="1" fill="#000"/></g>
<g><circle cx="87" cy="679" r="7.5" fill="#ff0000" stroke="#008000" stroke-width="1" shape-rendering="auto"/><rect x="84" y="675" width="2" height="4" fill="#00a0a0"/><rect x="88" y="675" width="2" height="4" fill="#00a000"/><path d="M84,681h6v1h-6zM83,682h1v2h-1zM90,682h1v2h-1z" fill="#008000"/></g>
<g><circle cx="147" cy="679" r="7.5" fill="#ff0000" stroke="#008000" stroke-width="1" shape-rendering="auto"/><rect x="144" y="675" width="2" height="4" fill="#00a0a0"/><rect x="148" y="675" width="2" height="4" fill="#00a000"/><path d="M144,681h6v1h-6zM143,682h1v2h-1zM150,682h1v2h-1z" fill="#008000"/></g>
<g><circle cx="285" cy="676" r="7.5" fill="#ff0000" stroke="#008000" stroke-width="1" shape-rendering="auto"/><rect x="282" y="672" width="2" height="4" fill="#00a0a0"/><rect x="286" y="672" width="2" height="4" fill="#00a000"/><path d="M282,678h6v1h-6zM281,679h1v2h-1zM288,679h1v2h-1z" fill="#008000"/></g>
<g><circle cx="351" cy="667" r="7.5" fill="#ff0000" stroke="#008000" stroke-width="1" shape-rendering="auto"/><rect x="348" y="663" width="2" height="4" fill="#00a0a0"/><rect x="352" y="663" width="2" height="4" fill="#00a000"/><path d="M348,669h6v1h-6zM347,670h1v2h-1zM354,670h1v2h-1z" fill="#008000"/></g>
<g><circle cx="466" cy="694" r="7.5" fill="#ff0000" stroke="#008000" stroke-width="1" shape-rendering="auto"/><rect x="463" y="690" width="2" height="4" fill="#00a0a0"/><rect x="467" y="690" width="2" height="4" fill="#00a000"/><path d="M463,696h6v1h-6zM462,697h1v2h-1zM469,697h1v2h-1z" fill="#008000"/></g>
<g><circle cx="571" cy="688" r="7.5" fill="#ff0000" stroke="#008000" stroke-width="1" shape-rendering="auto"/><rect x="568" y="684" width="2" height="4" fill="#00a0a0"/><rect x="572" y="684" width="2" height="4" fill="#00a000"/><path d="M568,690h6v1h-6zM567,691h1v2h-1zM574,691h1v2h-1z" fill="#008000"/></g>
<g><circle cx="626" cy="672" r="7.5" fill="#ff0000" stroke="#008000" stroke-width="1" shape-rendering="auto"/><rect x="623" y="668" width="2" height="4" fill="#00a0a0"/><rect x="627" y="668" width="2" height="4" fill="#00a000"/><path d="M623,674h6v1h-6zM622,675h1v2h-1zM629,675h1v2h-1z" fill="#008000"/></g>
<g><circle cx="736" cy="701" r="7.5" fill="#ff0000" stroke="#008000" stroke-width="1" shape-rendering="auto"/><rect x="733" y="697" width="2" height="4" fill="#00a0a0"/><rect x="737" y="697" width="2" height="4" fill="#00a000"/><path d="M733,703h6v1h-6zM732,704h1v2h-1zM739,704h1v2h-1z" fill="#008000"/></g>
<g><circle cx="807" cy="666" r="7.5" fill="#ff0000" stroke="#008000" stroke-width="1" shape-rendering="auto"/><rect x="804" y="662" width="2" height="4" fill="#00a0a0"/><rect x="808" y="662" width="2" height="4" fill="#00a000"/><path d="M804,668h6v1h-6zM803,669h1v2h-1zM810,669h1v2h-1z" fill="#008000"/></g>
<g><circle cx="1005" cy="672" r="7.5" fill="#ff0000" stroke="#008000" stroke-width="1" shape-rendering="auto"/><rect x="1002" y="668" width="2" height="4" fill="#00a0a0"/><rect x="1006" y="668" width="2" height="4" fill="#00a000"/><path d="M1002,674h6v1h-6zM1001,675h1v2h-1zM1008,675h1v2h-1z" fill="#008000"/></g>
<g><circle cx="1065" cy="682" r="7.5" fill="#ff0000" stroke="#008000" stroke-width="1" shape-rendering="auto"/><rect x="1062" y="678" width="2" height="4" fill="#00a0a0"/><rect x="1066" y="678" width="2" height="4" fill="#00a000"/><path d="M1062,684h6v1h-6zM1061,685h1v2h-1zM1068,685h1v2h-1z" fill="#008000"/></g>
<g><circle cx="1159" cy="669" r="7.5" fill="#ff0000" stroke="#008000" stroke-width="1" shape-rendering="auto"/><rect x="1156" y="665" width="2" height="4" fill="#00a0a0"/><rect x="1160" y="665" width="2" height="4" fill="#00a000"/><path d="M1156,671h6v1h-6zM1155,672h1v2h-1zM1162,672h1v2h-1z" fill="#008000"/></g>
<g><circle cx="1197" cy="660" r="7.5" fill="#ff0000" stroke="#008000" stroke-width="1" shape-rendering="auto"/><rect x="1194" y="656" width="2" height="4" fill="#00a0a0"/><rect x="1198" y="656" width="2" height="4" fill="#00a000"/><path d="M1194,662h6v1h-6zM1193,663h1v2h-1zM1200,663h1v2h-1z" fill="#008000"/></g>
<g><circle cx="1291" cy="715" r="7.5" fill="#ff0000" stroke="#008000" stroke-width="1" shape-rendering="auto"/><rect x="1288" y="711" width="2" height="4" fill="#00a0a0"/><rect x="1292" y="711" width="2" height="4" fill="#00a000"/><path d="M1288,717h6v1h-6zM1287,718h1v2h-1zM1294,718h1v2h-1z" fill="#008000"/></g>
<g><circle cx="1373" cy="721" r="7.5" fill="#ff0000" stroke="#008000" stroke-width="1" shape-rendering="auto"/><rect x="1370" y="717" width="2" height="4" fill="#00a0a0"/><rect x="1374" y="717" width="2" height="4" fill="#00a000"/><path d="M1370,723h6v1h-6zM1369,724h1v2h-1zM1376,724h1v2h-1z" fill="#008000"/></g>
<g><circle cx="1488" cy="657" r="7.5" fill="#ff0000" stroke="#008000" stroke-width="1" shape-rendering="auto"/><rect x="1485" y="653" width="2" height="4" fill="#00a0a0"/><rect x="1489" y="653" width="2" height="4" fill="#00a000"/><path d="M1485,659h6v1h-6zM1484,660h1v2h-1zM1491,660h1v2h-1z" fill="#008000"/></g>
<g><circle cx="1538" cy="682" r="7.5" fill="#ff0000" stroke="#008000" stroke-width="1" shape-rendering="auto"/><rect x="1535" y="678" width="2" height="4" fill="#00a0a0"/><rect x="1539" y="678" width="2" height="4" fill="#00a000"/><path d="M1535,684h6v1h-6zM1534,685h1v2h-1zM1541,685h1v2h-1z" fill="#008000"/></g>
<text x="86.9" y="591.7" font-family="'Liberation Sans','Noto Sans CJK SC',sans-serif" font-size="12" font-weight="500" fill="#00e000" stroke="#00e000" stroke-width="0.3" text-anchor="middle" textLength="24" lengthAdjust="spacingAndGlyphs">做空</text>
<text x="146.9" y="591.7" font-family="'Liberation Sans','Noto Sans CJK SC',sans-serif" font-size="12" font-weight="500" fill="#00e000" stroke="#00e000" stroke-width="0.3" text-anchor="middle" textLength="24" lengthAdjust="spacingAndGlyphs">做空</text>
<text x="284.9" y="591.7" font-family="'Liberation Sans','Noto Sans CJK SC',sans-serif" font-size="12" font-weight="500" fill="#00e000" stroke="#00e000" stroke-width="0.3" text-anchor="middle" textLength="24" lengthAdjust="spacingAndGlyphs">做空</text>
<text x="351.1" y="591.7" font-family="'Liberation Sans','Noto Sans CJK SC',sans-serif" font-size="12" font-weight="500" fill="#00e000" stroke="#00e000" stroke-width="0.3" text-anchor="middle" textLength="24" lengthAdjust="spacingAndGlyphs">做空</text>
<text x="466.2" y="591.7" font-family="'Liberation Sans','Noto Sans CJK SC',sans-serif" font-size="12" font-weight="500" fill="#00e000" stroke="#00e000" stroke-width="0.3" text-anchor="middle" textLength="24" lengthAdjust="spacingAndGlyphs">做空</text>
<text x="571.1" y="591.7" font-family="'Liberation Sans','Noto Sans CJK SC',sans-serif" font-size="12" font-weight="500" fill="#00e000" stroke="#00e000" stroke-width="0.3" text-anchor="middle" textLength="24" lengthAdjust="spacingAndGlyphs">做空</text>
<text x="626.0" y="591.7" font-family="'Liberation Sans','Noto Sans CJK SC',sans-serif" font-size="12" font-weight="500" fill="#00e000" stroke="#00e000" stroke-width="0.3" text-anchor="middle" textLength="24" lengthAdjust="spacingAndGlyphs">做空</text>
<text x="735.9" y="591.7" font-family="'Liberation Sans','Noto Sans CJK SC',sans-serif" font-size="12" font-weight="500" fill="#00e000" stroke="#00e000" stroke-width="0.3" text-anchor="middle" textLength="24" lengthAdjust="spacingAndGlyphs">做空</text>
<text x="807.0" y="591.7" font-family="'Liberation Sans','Noto Sans CJK SC',sans-serif" font-size="12" font-weight="500" fill="#00e000" stroke="#00e000" stroke-width="0.3" text-anchor="middle" textLength="24" lengthAdjust="spacingAndGlyphs">做空</text>
<text x="1005.0" y="591.7" font-family="'Liberation Sans','Noto Sans CJK SC',sans-serif" font-size="12" font-weight="500" fill="#00e000" stroke="#00e000" stroke-width="0.3" text-anchor="middle" textLength="24" lengthAdjust="spacingAndGlyphs">做空</text>
<text x="1064.9" y="591.7" font-family="'Liberation Sans','Noto Sans CJK SC',sans-serif" font-size="12" font-weight="500" fill="#00e000" stroke="#00e000" stroke-width="0.3" text-anchor="middle" textLength="24" lengthAdjust="spacingAndGlyphs">做空</text>
<text x="1158.9" y="591.7" font-family="'Liberation Sans','Noto Sans CJK SC',sans-serif" font-size="12" font-weight="500" fill="#00e000" stroke="#00e000" stroke-width="0.3" text-anchor="middle" textLength="24" lengthAdjust="spacingAndGlyphs">做空</text>
<text x="1197.2" y="591.7" font-family="'Liberation Sans','Noto Sans CJK SC',sans-serif" font-size="12" font-weight="500" fill="#00e000" stroke="#00e000" stroke-width="0.3" text-anchor="middle" textLength="24" lengthAdjust="spacingAndGlyphs">做空</text>
<text x="1291.0" y="591.7" font-family="'Liberation Sans','Noto Sans CJK SC',sans-serif" font-size="12" font-weight="500" fill="#00e000" stroke="#00e000" stroke-width="0.3" text-anchor="middle" textLength="24" lengthAdjust="spacingAndGlyphs">做空</text>
<text x="1373.3" y="591.7" font-family="'Liberation Sans','Noto Sans CJK SC',sans-serif" font-size="12" font-weight="500" fill="#00e000" stroke="#00e000" stroke-width="0.3" text-anchor="middle" textLength="24" lengthAdjust="spacingAndGlyphs">做空</text>
<text x="1488.8" y="591.7" font-family="'Liberation Sans','Noto Sans CJK SC',sans-serif" font-size="12" font-weight="500" fill="#00e000" stroke="#00e000" stroke-width="0.3" text-anchor="middle" textLength="24" lengthAdjust="spacingAndGlyphs">做空</text>
<text x="1538.1" y="591.7" font-family="'Liberation Sans','Noto Sans CJK SC',sans-serif" font-size="12" font-weight="500" fill="#00e000" stroke="#00e000" stroke-width="0.3" text-anchor="middle" textLength="24" lengthAdjust="spacingAndGlyphs">做空</text>
<text x="4.8" y="810.2" font-family="'Liberation Sans','Noto Sans CJK SC',sans-serif" font-size="12" font-weight="500" fill="#ff0000" stroke="#ff0000" stroke-width="0.3" text-anchor="middle" textLength="24" lengthAdjust="spacingAndGlyphs">做多</text>
<text x="54.0" y="810.2" font-family="'Liberation Sans','Noto Sans CJK SC',sans-serif" font-size="12" font-weight="500" fill="#ff0000" stroke="#ff0000" stroke-width="0.3" text-anchor="middle" textLength="24" lengthAdjust="spacingAndGlyphs">做多</text>
<text x="120.2" y="810.2" font-family="'Liberation Sans','Noto Sans CJK SC',sans-serif" font-size="12" font-weight="500" fill="#ff0000" stroke="#ff0000" stroke-width="0.3" text-anchor="middle" textLength="24" lengthAdjust="spacingAndGlyphs">做多</text>
<text x="197.1" y="810.2" font-family="'Liberation Sans','Noto Sans CJK SC',sans-serif" font-size="12" font-weight="500" fill="#ff0000" stroke="#ff0000" stroke-width="0.3" text-anchor="middle" textLength="24" lengthAdjust="spacingAndGlyphs">做多</text>
<text x="306.9" y="810.2" font-family="'Liberation Sans','Noto Sans CJK SC',sans-serif" font-size="12" font-weight="500" fill="#ff0000" stroke="#ff0000" stroke-width="0.3" text-anchor="middle" textLength="24" lengthAdjust="spacingAndGlyphs">做多</text>
<text x="422.3" y="810.2" font-family="'Liberation Sans','Noto Sans CJK SC',sans-serif" font-size="12" font-weight="500" fill="#ff0000" stroke="#ff0000" stroke-width="0.3" text-anchor="middle" textLength="24" lengthAdjust="spacingAndGlyphs">做多</text>
<text x="499.2" y="810.2" font-family="'Liberation Sans','Noto Sans CJK SC',sans-serif" font-size="12" font-weight="500" fill="#ff0000" stroke="#ff0000" stroke-width="0.3" text-anchor="middle" textLength="24" lengthAdjust="spacingAndGlyphs">做多</text>
<text x="598.3" y="810.2" font-family="'Liberation Sans','Noto Sans CJK SC',sans-serif" font-size="12" font-weight="500" fill="#ff0000" stroke="#ff0000" stroke-width="0.3" text-anchor="middle" textLength="24" lengthAdjust="spacingAndGlyphs">做多</text>
<text x="681.4" y="810.2" font-family="'Liberation Sans','Noto Sans CJK SC',sans-serif" font-size="12" font-weight="500" fill="#ff0000" stroke="#ff0000" stroke-width="0.3" text-anchor="middle" textLength="24" lengthAdjust="spacingAndGlyphs">做多</text>
<text x="714.4" y="810.2" font-family="'Liberation Sans','Noto Sans CJK SC',sans-serif" font-size="12" font-weight="500" fill="#ff0000" stroke="#ff0000" stroke-width="0.3" text-anchor="middle" textLength="24" lengthAdjust="spacingAndGlyphs">做多</text>
<text x="752.1" y="810.2" font-family="'Liberation Sans','Noto Sans CJK SC',sans-serif" font-size="12" font-weight="500" fill="#ff0000" stroke="#ff0000" stroke-width="0.3" text-anchor="middle" textLength="24" lengthAdjust="spacingAndGlyphs">做多</text>
<text x="906.1" y="810.2" font-family="'Liberation Sans','Noto Sans CJK SC',sans-serif" font-size="12" font-weight="500" fill="#ff0000" stroke="#ff0000" stroke-width="0.3" text-anchor="middle" textLength="24" lengthAdjust="spacingAndGlyphs">做多</text>
<text x="1038.5" y="810.2" font-family="'Liberation Sans','Noto Sans CJK SC',sans-serif" font-size="12" font-weight="500" fill="#ff0000" stroke="#ff0000" stroke-width="0.3" text-anchor="middle" textLength="24" lengthAdjust="spacingAndGlyphs">做多</text>
<text x="1092.9" y="810.2" font-family="'Liberation Sans','Noto Sans CJK SC',sans-serif" font-size="12" font-weight="500" fill="#ff0000" stroke="#ff0000" stroke-width="0.3" text-anchor="middle" textLength="24" lengthAdjust="spacingAndGlyphs">做多</text>
<text x="1170.4" y="810.2" font-family="'Liberation Sans','Noto Sans CJK SC',sans-serif" font-size="12" font-weight="500" fill="#ff0000" stroke="#ff0000" stroke-width="0.3" text-anchor="middle" textLength="24" lengthAdjust="spacingAndGlyphs">做多</text>
<text x="1274.1" y="810.2" font-family="'Liberation Sans','Noto Sans CJK SC',sans-serif" font-size="12" font-weight="500" fill="#ff0000" stroke="#ff0000" stroke-width="0.3" text-anchor="middle" textLength="24" lengthAdjust="spacingAndGlyphs">做多</text>
<text x="1340.1" y="810.2" font-family="'Liberation Sans','Noto Sans CJK SC',sans-serif" font-size="12" font-weight="500" fill="#ff0000" stroke="#ff0000" stroke-width="0.3" text-anchor="middle" textLength="24" lengthAdjust="spacingAndGlyphs">做多</text>
<text x="1401.4" y="810.2" font-family="'Liberation Sans','Noto Sans CJK SC',sans-serif" font-size="12" font-weight="500" fill="#ff0000" stroke="#ff0000" stroke-width="0.3" text-anchor="middle" textLength="24" lengthAdjust="spacingAndGlyphs">做多</text>
<text x="1516.2" y="810.2" font-family="'Liberation Sans','Noto Sans CJK SC',sans-serif" font-size="12" font-weight="500" fill="#ff0000" stroke="#ff0000" stroke-width="0.3" text-anchor="middle" textLength="24" lengthAdjust="spacingAndGlyphs">做多</text>
</g>
<text x="3" y="16.7" font-family="'Liberation Sans','Noto Sans CJK SC',sans-serif" font-size="12" fill="#e0e0e0" textLength="31" lengthAdjust="spacingAndGlyphs">K线图</text>
<rect x="39.5" y="9.5" width="7" height="7" fill="none" stroke="#d8d8d8"/><rect x="41" y="13" width="4" height="1" fill="#d8d8d8"/>
<text x="50" y="16.7" font-family="'Liberation Sans','Noto Sans CJK SC',sans-serif" font-size="12" fill="#e0e0e0" textLength="72" lengthAdjust="spacingAndGlyphs">牛熊波段趋势</text>
<text x="126" y="16.7" font-family="'Liberation Sans','Noto Sans CJK SC',sans-serif" font-size="12" fill="#e0e0e0" textLength="48" lengthAdjust="spacingAndGlyphs">股道边网</text>
<text x="174" y="16.7" font-family="'Liberation Sans','Noto Sans CJK SC',sans-serif" font-size="12" fill="#e0e0e0" textLength="100.5" lengthAdjust="spacingAndGlyphs">www.de6688.com</text>
<rect x="281.5" y="9.5" width="7" height="7" fill="none" stroke="#d8d8d8"/><rect x="283" y="13" width="4" height="1" fill="#d8d8d8"/>
<text x="291.5" y="16.7" font-family="'Liberation Sans','Noto Sans CJK SC',sans-serif" font-size="12" fill="#e0e0e0" textLength="63" lengthAdjust="spacingAndGlyphs">H1:1547.09</text>
<text x="361" y="16.7" font-family="'Liberation Sans','Noto Sans CJK SC',sans-serif" font-size="12" fill="#f0f000" textLength="62.5" lengthAdjust="spacingAndGlyphs">H2:1549.80</text>
<text x="429.5" y="16.7" font-family="'Liberation Sans','Noto Sans CJK SC',sans-serif" font-size="12" fill="#00e600" textLength="83" lengthAdjust="spacingAndGlyphs">牛熊线:1497.05</text>
<text x="2" y="540.7" font-family="'Liberation Sans','Noto Sans CJK SC',sans-serif" font-size="12" fill="#e0e0e0" textLength="72" lengthAdjust="spacingAndGlyphs">多空建仓波段</text>
<text x="78" y="540.7" font-family="'Liberation Sans','Noto Sans CJK SC',sans-serif" font-size="12" fill="#e0e0e0" textLength="48" lengthAdjust="spacingAndGlyphs">股道边网</text>
<text x="126" y="540.7" font-family="'Liberation Sans','Noto Sans CJK SC',sans-serif" font-size="12" fill="#e0e0e0" textLength="99" lengthAdjust="spacingAndGlyphs">www.de6688.com</text>
<rect x="232.5" y="533.5" width="7" height="7" fill="none" stroke="#d8d8d8"/><rect x="234" y="537" width="4" height="1" fill="#d8d8d8"/>
<text x="243.5" y="540.7" font-family="'Liberation Sans','Noto Sans CJK SC',sans-serif" font-size="12" fill="#e0e0e0" textLength="41" lengthAdjust="spacingAndGlyphs">(5,9,19)</text>
<text x="290" y="540.7" font-family="'Liberation Sans','Noto Sans CJK SC',sans-serif" font-size="12" fill="#ff0000" textLength="52" lengthAdjust="spacingAndGlyphs">建仓线:15</text>
<text x="349" y="540.7" font-family="'Liberation Sans','Noto Sans CJK SC',sans-serif" font-size="12" fill="#e0e0e0" textLength="39.5" lengthAdjust="spacingAndGlyphs">中线:50</text>
<text x="395" y="540.7" font-family="'Liberation Sans','Noto Sans CJK SC',sans-serif" font-size="12" fill="#f0f000" textLength="51.5" lengthAdjust="spacingAndGlyphs">出仓线:95</text>
<text x="452" y="540.7" font-family="'Liberation Sans','Noto Sans CJK SC',sans-serif" font-size="12" fill="#e0e0e0" textLength="69.5" lengthAdjust="spacingAndGlyphs">提示线:45.30</text>
<text x="527.5" y="540.7" font-family="'Liberation Sans','Noto Sans CJK SC',sans-serif" font-size="12" fill="#f0f000" textLength="69" lengthAdjust="spacingAndGlyphs">慢速线:56.97</text>
<text x="602.5" y="540.7" font-family="'Liberation Sans','Noto Sans CJK SC',sans-serif" font-size="12" fill="#ff00ff" textLength="69" lengthAdjust="spacingAndGlyphs">快速线:21.98</text>
</svg>
</body></html>
